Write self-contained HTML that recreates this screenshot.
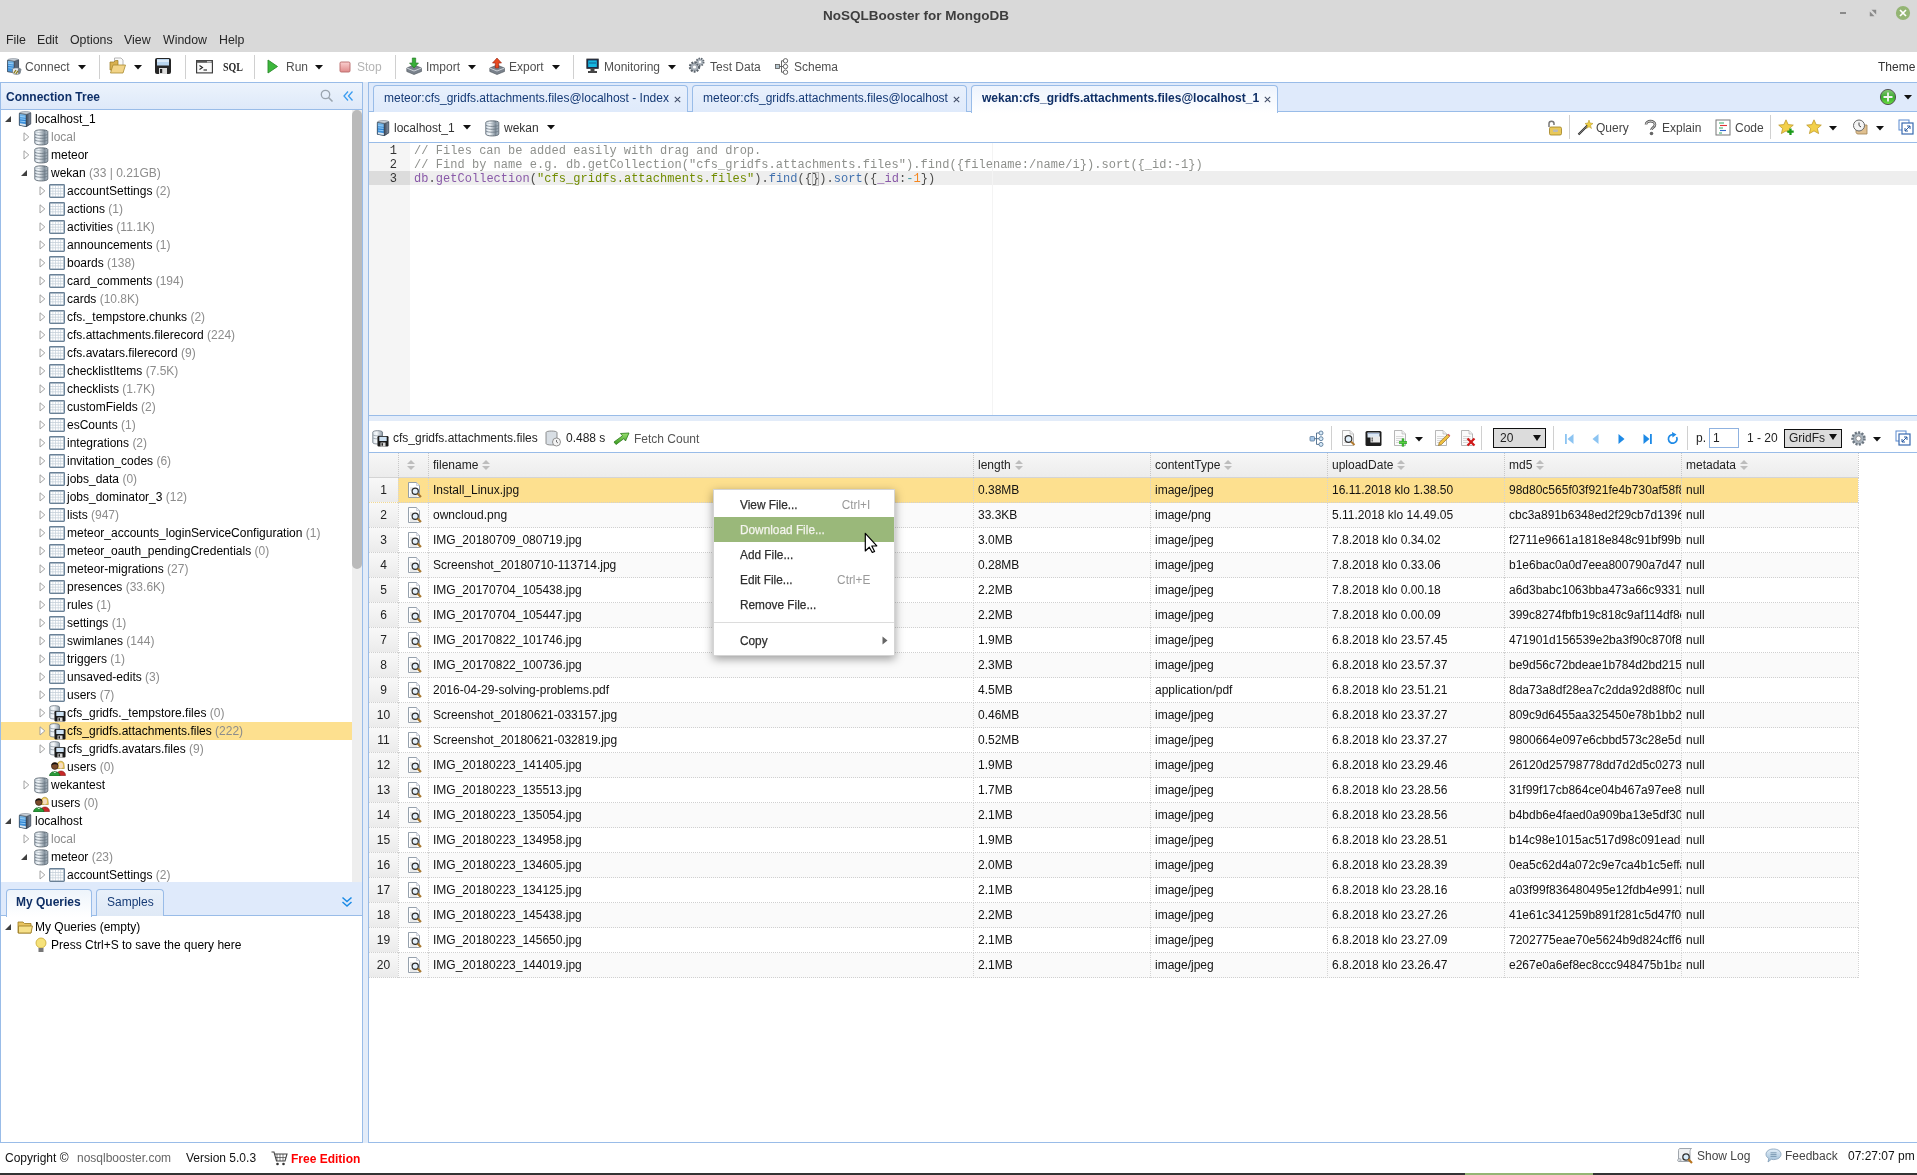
<!DOCTYPE html><html><head><meta charset="utf-8"><style>
*{box-sizing:border-box}
html,body{margin:0;padding:0}
body{width:1917px;height:1175px;overflow:hidden;position:relative;background:#fff;font-family:"Liberation Sans", sans-serif;font-size:12px;color:#000}
.a{position:absolute}
.t{position:absolute;white-space:nowrap;line-height:1}
.g{color:#8c8c8c}
</style></head><body><div style="position:absolute;left:0;top:0;width:1917px;height:1175px;overflow:hidden;will-change:transform">
<div class="a" style="left:0;top:0;width:1917px;height:52px;background:#d9d9d9"></div>
<div class="t" style="left:823px;top:9px;font-size:13.5px;color:#3e3e3e;font-weight:bold;">NoSQLBooster for MongoDB</div>
<div class="a" style="left:1840px;top:12px;width:6px;height:2px;background:#8a8a8a"></div>
<svg style="position:absolute;left:1869px;top:9px" width="8" height="8" viewBox="0 0 8 8"><path d="M2.5 0.8 H7.2 V5.5 Z M0.8 2.5 V7.2 H5.5 Z" fill="#8a8a8a"/></svg>
<svg style="position:absolute;left:1895px;top:5px" width="16" height="16" viewBox="0 0 16 16"><circle cx="8" cy="8" r="7.1" fill="#94b574"/><path d="M5 5 L11 11 M11 5 L5 11" stroke="#fff" stroke-width="1.7"/></svg>
<div class="t" style="left:6px;top:33px;font-size:13px;color:#262626;font-weight:normal;transform:scaleX(0.95);transform-origin:0 0">File</div>
<div class="t" style="left:37px;top:33px;font-size:13px;color:#262626;font-weight:normal;transform:scaleX(0.95);transform-origin:0 0">Edit</div>
<div class="t" style="left:70px;top:33px;font-size:13px;color:#262626;font-weight:normal;transform:scaleX(0.95);transform-origin:0 0">Options</div>
<div class="t" style="left:124px;top:33px;font-size:13px;color:#262626;font-weight:normal;transform:scaleX(0.95);transform-origin:0 0">View</div>
<div class="t" style="left:163px;top:33px;font-size:13px;color:#262626;font-weight:normal;transform:scaleX(0.95);transform-origin:0 0">Window</div>
<div class="t" style="left:219px;top:33px;font-size:13px;color:#262626;font-weight:normal;transform:scaleX(0.95);transform-origin:0 0">Help</div>
<div class="a" style="left:0;top:52px;width:1917px;height:30px;background:#fff"></div>
<div class="a" style="left:99px;top:55px;width:1px;height:24px;background:#d0d0d0"></div>
<div class="a" style="left:185px;top:55px;width:1px;height:24px;background:#d0d0d0"></div>
<div class="a" style="left:254px;top:55px;width:1px;height:24px;background:#d0d0d0"></div>
<div class="a" style="left:395px;top:55px;width:1px;height:24px;background:#d0d0d0"></div>
<div class="a" style="left:573px;top:55px;width:1px;height:24px;background:#d0d0d0"></div>
<svg style="position:absolute;left:6px;top:58px" width="16" height="17" viewBox="0 0 16 17"><defs><linearGradient id="cnf" x1="0" x2="0" y1="0" y2="1"><stop offset="0" stop-color="#8ec8f0"/><stop offset="0.5" stop-color="#2a7fd0"/><stop offset="1" stop-color="#5aa8e8"/></linearGradient></defs>
<path d="M1.2 2 L8.5 2.8 L12.8 1.5 L12.8 12.5 L8.5 15 L1.2 14 Z" fill="#556070"/>
<path d="M1.5 2.4 L8.3 3.2 L8.3 14.5 L1.5 13.6 Z" fill="url(#cnf)" stroke="#44505e" stroke-width="0.7"/>
<path d="M8.3 3.2 L12.6 1.8 L12.6 12.3 L8.3 14.5 Z" fill="#5a6678" stroke="#3a4450" stroke-width="0.6"/>
<path d="M1.7 1.8 C3 0.3 11 0.2 12.6 1.6 L8.3 3 Z" fill="#c8d0d8" stroke="#6a7480" stroke-width="0.5"/>
<path d="M2.3 5.3 L7.6 5.9 M2.3 7.5 L7.6 8.1 M2.3 9.7 L7.6 10.3" stroke="#a8dcff" stroke-width="0.8"/>
<path d="M6.5 11 C6.5 9.5 14.5 9.5 15 11.5 L14 15.5 C12 17 7.5 16.5 6.5 15 Z" fill="#e4e8ec" stroke="#6a7480" stroke-width="0.7"/>
<path d="M12 10.2 C13.5 10 15 10.5 15 11.5 L14 15.5 C13 16.3 12.5 16 12 15.5 Z" fill="#7a848e"/>
<path d="M7.8 15.2 L10 12 M9.8 16 L12 12.8" stroke="#8a7a10" stroke-width="1.2"/></svg>
<div class="t" style="left:25px;top:61px;font-size:12px;color:#505050;font-weight:normal;">Connect</div>
<svg style="position:absolute;left:78px;top:65px" width="8" height="5" viewBox="0 0 8 5"><path d="M0 0 H8 L4 4.5 Z" fill="#111"/></svg>
<svg style="position:absolute;left:109px;top:57px" width="18" height="18" viewBox="0 0 18 18"><path d="M5.5 1 H12 L14 3 V10 H5.5 Z" fill="#fafafa" stroke="#9a9a9a" stroke-width="0.7"/><path d="M1 5 H5 L6.5 3.5 H9 V13 H1 Z" fill="#d8b050" stroke="#9a7a20" stroke-width="0.7"/><path d="M1.5 16 L4 8 H16.5 L14 16 Z" fill="#f2d488" stroke="#a88a30" stroke-width="0.8"/></svg>
<svg style="position:absolute;left:134px;top:65px" width="8" height="5" viewBox="0 0 8 5"><path d="M0 0 H8 L4 4.5 Z" fill="#111"/></svg>
<svg style="position:absolute;left:154px;top:57px" width="18" height="18" viewBox="0 0 18 18"><rect x="1" y="1" width="16" height="16" rx="2" fill="#262626"/><rect x="3" y="2" width="12" height="6.5" fill="#b8d4ee"/><rect x="3" y="3.5" width="12" height="1" fill="#fff"/><rect x="5" y="11" width="8" height="6" fill="#dcdcdc"/><rect x="6" y="12" width="2.2" height="4" fill="#262626"/></svg>
<svg style="position:absolute;left:196px;top:60px" width="17" height="14" viewBox="0 0 17 14"><rect x="0.6" y="0.6" width="15.8" height="12.3" fill="#fafafa" stroke="#333" stroke-width="1.1"/><rect x="0.6" y="0.6" width="15.8" height="2.2" fill="#555"/><rect x="11" y="1.2" width="4.5" height="1.2" fill="#ddd"/><path d="M3.5 5.5 L6.5 7.5 L3.5 9.5" stroke="#222" stroke-width="1.1" fill="none"/><path d="M7.5 10 H11" stroke="#222" stroke-width="1.1"/></svg>
<div class="t" style="left:223px;top:61px;font-size:12.5px;color:#2a2a2a;font-weight:bold;font-family:Liberation Serif,serif;transform:scaleX(0.8);transform-origin:0 0">SQL</div>
<svg style="position:absolute;left:266px;top:58px" width="13" height="17" viewBox="0 0 13 17"><path d="M2 2 L11.5 8.5 L2 15 Z" fill="#3cb83c" stroke="#2a8a2a" stroke-width="0.9" stroke-linejoin="round"/></svg>
<div class="t" style="left:286px;top:61px;font-size:12px;color:#505050;font-weight:normal;">Run</div>
<svg style="position:absolute;left:315px;top:65px" width="8" height="5" viewBox="0 0 8 5"><path d="M0 0 H8 L4 4.5 Z" fill="#111"/></svg>
<svg style="position:absolute;left:339px;top:61px" width="12" height="12" viewBox="0 0 12 12"><defs><linearGradient id="stg" x1="0" x2="0" y1="0" y2="1"><stop offset="0" stop-color="#fad0d0"/><stop offset="1" stop-color="#e08a8a"/></linearGradient></defs><rect x="1" y="1" width="10" height="10" rx="1.2" fill="url(#stg)" stroke="#b86a6a" stroke-width="0.9"/></svg>
<div class="t" style="left:357px;top:61px;font-size:12px;color:#b4b4b4;font-weight:normal;">Stop</div>
<svg style="position:absolute;left:406px;top:57px" width="16" height="18" viewBox="0 0 16 18"><path d="M0.8 11 L8 8 L15.5 11 L15.5 14.5 L8 17.5 L0.8 14.5 Z" fill="#7a828c" stroke="#4a5058" stroke-width="0.6"/><path d="M0.8 11 L8 14 L15.5 11" stroke="#d8dde2" stroke-width="0.9" fill="none"/><path d="M6.3 1 H9.7 V6 H12.5 L8 11 L3.5 6 H6.3 Z" fill="#38b038" stroke="#1e701e" stroke-width="0.6"/></svg>
<div class="t" style="left:426px;top:61px;font-size:12px;color:#505050;font-weight:normal;">Import</div>
<svg style="position:absolute;left:468px;top:65px" width="8" height="5" viewBox="0 0 8 5"><path d="M0 0 H8 L4 4.5 Z" fill="#111"/></svg>
<svg style="position:absolute;left:489px;top:57px" width="16" height="18" viewBox="0 0 16 18"><path d="M0.8 11 L8 8 L15.5 11 L15.5 14.5 L8 17.5 L0.8 14.5 Z" fill="#7a828c" stroke="#4a5058" stroke-width="0.6"/><path d="M0.8 11 L8 14 L15.5 11" stroke="#d8dde2" stroke-width="0.9" fill="none"/><path d="M6.3 11 H9.7 V6 H12.5 L8 1 L3.5 6 H6.3 Z" fill="#e84a20" stroke="#902010" stroke-width="0.6"/></svg>
<div class="t" style="left:509px;top:61px;font-size:12px;color:#505050;font-weight:normal;">Export</div>
<svg style="position:absolute;left:552px;top:65px" width="8" height="5" viewBox="0 0 8 5"><path d="M0 0 H8 L4 4.5 Z" fill="#111"/></svg>
<svg style="position:absolute;left:586px;top:58px" width="13" height="16" viewBox="0 0 13 16"><rect x="0.8" y="1" width="11.5" height="9.5" fill="#1c2c4c" stroke="#333" stroke-width="0.8"/><rect x="2.2" y="2.4" width="8.6" height="6.6" fill="#18b8e0"/><path d="M3 5 H10" stroke="#0a4a80" stroke-width="0.8"/><path d="M4.5 11 H8.5 V13 H11 V15 H2 V13 H4.5 Z" fill="#444"/></svg>
<div class="t" style="left:604px;top:61px;font-size:12px;color:#505050;font-weight:normal;">Monitoring</div>
<svg style="position:absolute;left:668px;top:65px" width="8" height="5" viewBox="0 0 8 5"><path d="M0 0 H8 L4 4.5 Z" fill="#111"/></svg>
<svg style="position:absolute;left:688px;top:57px" width="17" height="17" viewBox="0 0 17 17"><circle cx="6.5" cy="10" r="4.6" fill="#a8b0b8" stroke="#5a626a" stroke-width="2.2" stroke-dasharray="1.8 1.2"/><circle cx="6.5" cy="10" r="1.6" fill="#fff"/><circle cx="12" cy="5" r="3.6" fill="#b0b8c0" stroke="#626a72" stroke-width="1.8" stroke-dasharray="1.5 1"/><circle cx="12" cy="5" r="1.2" fill="#fff"/></svg>
<div class="t" style="left:710px;top:61px;font-size:12px;color:#505050;font-weight:normal;">Test Data</div>
<svg style="position:absolute;left:775px;top:58px" width="14" height="17" viewBox="0 0 14 17"><rect x="0.5" y="6.5" width="4" height="4" fill="#b8c8d0" stroke="#555" stroke-width="0.8"/><circle cx="10.5" cy="2.8" r="2.2" fill="#fff" stroke="#555" stroke-width="0.9"/><circle cx="10.5" cy="8.5" r="2.2" fill="#fff" stroke="#555" stroke-width="0.9"/><circle cx="10.5" cy="14.2" r="2.2" fill="#fff" stroke="#555" stroke-width="0.9"/><path d="M4.5 8.5 H8.3 M6.5 8.5 V2.8 H8.3 M6.5 8.5 V14.2 H8.3" stroke="#555" fill="none" stroke-width="0.9"/></svg>
<div class="t" style="left:794px;top:61px;font-size:12px;color:#505050;font-weight:normal;">Schema</div>
<div class="t" style="left:1878px;top:61px;font-size:12px;color:#333;font-weight:normal;">Theme</div>
<div class="a" style="left:0;top:82px;width:368px;height:1061px;background:#e3ecf9"></div>
<div class="a" style="left:0;top:82px;width:363px;height:800px;border:1px solid #99bce8;border-bottom:none;background:#fff"></div>
<div class="a" style="left:1px;top:83px;width:361px;height:27px;background:linear-gradient(#ecf3fc,#dee9f9);border-bottom:1px solid #99bce8"></div>
<div class="t" style="left:6px;top:90px;font-size:12px;color:#0d2f68;font-weight:bold;transform:scaleY(1.06);transform-origin:0 0">Connection Tree</div>
<svg style="position:absolute;left:320px;top:89px" width="14" height="14" viewBox="0 0 14 14"><circle cx="5.5" cy="5.5" r="4.2" fill="none" stroke="#9aa4ae" stroke-width="1.3"/><path d="M8.5 8.5 L12.5 12.5" stroke="#9aa4ae" stroke-width="1.6"/></svg>
<svg style="position:absolute;left:342px;top:90px" width="12" height="12" viewBox="0 0 12 12"><path d="M6 1.5 L2 6 L6 10.5 M10.5 1.5 L6.5 6 L10.5 10.5" stroke="#3a9cf0" stroke-width="1.3" fill="none"/></svg>
<div class="a" style="left:352px;top:110px;width:10px;height:772px;background:#eeeeee"></div>
<div class="a" style="left:352px;top:110px;width:10px;height:459px;background:#bababa;border-radius:5px"></div>
<div class="a" style="left:1px;top:110px;width:351px;height:772px;overflow:hidden">
<svg style="position:absolute;left:3px;top:5px" width="8" height="8" viewBox="0 0 8 8"><path d="M1 7 L7 7 L7 1 Z" fill="#404040"/></svg>
<svg style="position:absolute;left:16px;top:1px" width="16" height="17" viewBox="0 0 16 17">
<defs><linearGradient id="svf" x1="0" x2="0" y1="0" y2="1"><stop offset="0" stop-color="#8ec8f0"/><stop offset="0.5" stop-color="#2a7fd0"/><stop offset="1" stop-color="#5aa8e8"/></linearGradient>
<linearGradient id="svs" x1="0" x2="1"><stop offset="0" stop-color="#3c4858"/><stop offset="1" stop-color="#8a96a8"/></linearGradient></defs>
<path d="M2 2 L9.5 3 L14 1.5 L14 13 L9.5 16 L2 14.5 Z" fill="#556070"/>
<path d="M2.3 2.5 L9.3 3.4 L9.3 15.5 L2.3 14.2 Z" fill="url(#svf)" stroke="#44505e" stroke-width="0.7"/>
<path d="M9.3 3.4 L13.8 1.8 L13.8 12.8 L9.3 15.5 Z" fill="url(#svs)" stroke="#3a4450" stroke-width="0.6"/>
<path d="M2.5 1.8 C4 0.2 12 0 13.8 1.6 L9.3 3.2 Z" fill="#c8d0d8" stroke="#6a7480" stroke-width="0.5"/>
<path d="M3.2 5.5 L8.5 6.1 M3.2 7.8 L8.5 8.4 M3.2 10.1 L8.5 10.7" stroke="#a8dcff" stroke-width="0.8"/>
<path d="M3 12.2 L8.8 13.2 L8.8 15 L3 14 Z" fill="#dfe6ec"/></svg>
<div class="t" style="left:34px;top:3px;font-size:12px;color:#000;font-weight:normal;">localhost_1</div>
<svg style="position:absolute;left:22px;top:22px" width="8" height="10" viewBox="0 0 8 10"><path d="M1 0.8 L5.8 4.9 L1 9 Z" fill="#fff" stroke="#999" stroke-width="0.9"/></svg>
<svg style="position:absolute;left:33px;top:19px" width="15" height="17" viewBox="0 0 15 17">
<defs><linearGradient id="dbg" x1="0" x2="1"><stop offset="0" stop-color="#d8e2ea"/><stop offset="0.3" stop-color="#f4f8fb"/><stop offset="0.75" stop-color="#7c8a96"/><stop offset="1" stop-color="#b8c4ce"/></linearGradient></defs>
<path d="M0.8 2.5 C0.8 0.3 13.8 0.3 13.8 2.5 V14 C13.8 16.6 0.8 16.6 0.8 14 Z" fill="url(#dbg)" stroke="#5f6a74" stroke-width="0.9"/>
<path d="M1 5.3 C3 6.8 11.5 6.8 13.6 5.3 M1 8.2 C3 9.7 11.5 9.7 13.6 8.2 M1 11.1 C3 12.6 11.5 12.6 13.6 11.1" stroke="#6a7682" stroke-width="0.8" fill="none"/>
<path d="M1.5 2.5 C3 4 11.5 4 13.2 2.5" stroke="#9aa6b0" stroke-width="0.6" fill="none"/></svg>
<div class="t" style="left:50px;top:21px;font-size:12px;color:#000;font-weight:normal;"><span class="g">local</span></div>
<svg style="position:absolute;left:22px;top:40px" width="8" height="10" viewBox="0 0 8 10"><path d="M1 0.8 L5.8 4.9 L1 9 Z" fill="#fff" stroke="#999" stroke-width="0.9"/></svg>
<svg style="position:absolute;left:33px;top:37px" width="15" height="17" viewBox="0 0 15 17">
<defs><linearGradient id="dbg" x1="0" x2="1"><stop offset="0" stop-color="#d8e2ea"/><stop offset="0.3" stop-color="#f4f8fb"/><stop offset="0.75" stop-color="#7c8a96"/><stop offset="1" stop-color="#b8c4ce"/></linearGradient></defs>
<path d="M0.8 2.5 C0.8 0.3 13.8 0.3 13.8 2.5 V14 C13.8 16.6 0.8 16.6 0.8 14 Z" fill="url(#dbg)" stroke="#5f6a74" stroke-width="0.9"/>
<path d="M1 5.3 C3 6.8 11.5 6.8 13.6 5.3 M1 8.2 C3 9.7 11.5 9.7 13.6 8.2 M1 11.1 C3 12.6 11.5 12.6 13.6 11.1" stroke="#6a7682" stroke-width="0.8" fill="none"/>
<path d="M1.5 2.5 C3 4 11.5 4 13.2 2.5" stroke="#9aa6b0" stroke-width="0.6" fill="none"/></svg>
<div class="t" style="left:50px;top:39px;font-size:12px;color:#000;font-weight:normal;">meteor</div>
<svg style="position:absolute;left:19px;top:59px" width="8" height="8" viewBox="0 0 8 8"><path d="M1 7 L7 7 L7 1 Z" fill="#404040"/></svg>
<svg style="position:absolute;left:33px;top:55px" width="15" height="17" viewBox="0 0 15 17">
<defs><linearGradient id="dbg" x1="0" x2="1"><stop offset="0" stop-color="#d8e2ea"/><stop offset="0.3" stop-color="#f4f8fb"/><stop offset="0.75" stop-color="#7c8a96"/><stop offset="1" stop-color="#b8c4ce"/></linearGradient></defs>
<path d="M0.8 2.5 C0.8 0.3 13.8 0.3 13.8 2.5 V14 C13.8 16.6 0.8 16.6 0.8 14 Z" fill="url(#dbg)" stroke="#5f6a74" stroke-width="0.9"/>
<path d="M1 5.3 C3 6.8 11.5 6.8 13.6 5.3 M1 8.2 C3 9.7 11.5 9.7 13.6 8.2 M1 11.1 C3 12.6 11.5 12.6 13.6 11.1" stroke="#6a7682" stroke-width="0.8" fill="none"/>
<path d="M1.5 2.5 C3 4 11.5 4 13.2 2.5" stroke="#9aa6b0" stroke-width="0.6" fill="none"/></svg>
<div class="t" style="left:50px;top:57px;font-size:12px;color:#000;font-weight:normal;">wekan <span class="g">(33 | 0.21GB)</span></div>
<svg style="position:absolute;left:38px;top:76px" width="8" height="10" viewBox="0 0 8 10"><path d="M1 0.8 L5.8 4.9 L1 9 Z" fill="#fff" stroke="#999" stroke-width="0.9"/></svg>
<svg style="position:absolute;left:48px;top:74px" width="16" height="14" viewBox="0 0 16 14"><rect x="0.6" y="0.6" width="14.8" height="12.8" rx="0.8" fill="#c2ced8" stroke="#6a8196" stroke-width="1.2"/><rect x="1.60" y="2.00" width="2.0" height="2.0" fill="#fff"/><rect x="1.60" y="4.75" width="2.0" height="2.0" fill="#fff"/><rect x="1.60" y="7.50" width="2.0" height="2.0" fill="#fff"/><rect x="1.60" y="10.25" width="2.0" height="2.0" fill="#fff"/><rect x="4.22" y="2.00" width="2.0" height="2.0" fill="#fff"/><rect x="4.22" y="4.75" width="2.0" height="2.0" fill="#fff"/><rect x="4.22" y="7.50" width="2.0" height="2.0" fill="#fff"/><rect x="4.22" y="10.25" width="2.0" height="2.0" fill="#fff"/><rect x="6.84" y="2.00" width="2.0" height="2.0" fill="#fff"/><rect x="6.84" y="4.75" width="2.0" height="2.0" fill="#fff"/><rect x="6.84" y="7.50" width="2.0" height="2.0" fill="#fff"/><rect x="6.84" y="10.25" width="2.0" height="2.0" fill="#fff"/><rect x="9.46" y="2.00" width="2.0" height="2.0" fill="#fff"/><rect x="9.46" y="4.75" width="2.0" height="2.0" fill="#fff"/><rect x="9.46" y="7.50" width="2.0" height="2.0" fill="#fff"/><rect x="9.46" y="10.25" width="2.0" height="2.0" fill="#fff"/><rect x="12.08" y="2.00" width="2.0" height="2.0" fill="#fff"/><rect x="12.08" y="4.75" width="2.0" height="2.0" fill="#fff"/><rect x="12.08" y="7.50" width="2.0" height="2.0" fill="#fff"/><rect x="12.08" y="10.25" width="2.0" height="2.0" fill="#fff"/></svg>
<div class="t" style="left:66px;top:75px;font-size:12px;color:#000;font-weight:normal;">accountSettings <span class="g">(2)</span></div>
<svg style="position:absolute;left:38px;top:94px" width="8" height="10" viewBox="0 0 8 10"><path d="M1 0.8 L5.8 4.9 L1 9 Z" fill="#fff" stroke="#999" stroke-width="0.9"/></svg>
<svg style="position:absolute;left:48px;top:92px" width="16" height="14" viewBox="0 0 16 14"><rect x="0.6" y="0.6" width="14.8" height="12.8" rx="0.8" fill="#c2ced8" stroke="#6a8196" stroke-width="1.2"/><rect x="1.60" y="2.00" width="2.0" height="2.0" fill="#fff"/><rect x="1.60" y="4.75" width="2.0" height="2.0" fill="#fff"/><rect x="1.60" y="7.50" width="2.0" height="2.0" fill="#fff"/><rect x="1.60" y="10.25" width="2.0" height="2.0" fill="#fff"/><rect x="4.22" y="2.00" width="2.0" height="2.0" fill="#fff"/><rect x="4.22" y="4.75" width="2.0" height="2.0" fill="#fff"/><rect x="4.22" y="7.50" width="2.0" height="2.0" fill="#fff"/><rect x="4.22" y="10.25" width="2.0" height="2.0" fill="#fff"/><rect x="6.84" y="2.00" width="2.0" height="2.0" fill="#fff"/><rect x="6.84" y="4.75" width="2.0" height="2.0" fill="#fff"/><rect x="6.84" y="7.50" width="2.0" height="2.0" fill="#fff"/><rect x="6.84" y="10.25" width="2.0" height="2.0" fill="#fff"/><rect x="9.46" y="2.00" width="2.0" height="2.0" fill="#fff"/><rect x="9.46" y="4.75" width="2.0" height="2.0" fill="#fff"/><rect x="9.46" y="7.50" width="2.0" height="2.0" fill="#fff"/><rect x="9.46" y="10.25" width="2.0" height="2.0" fill="#fff"/><rect x="12.08" y="2.00" width="2.0" height="2.0" fill="#fff"/><rect x="12.08" y="4.75" width="2.0" height="2.0" fill="#fff"/><rect x="12.08" y="7.50" width="2.0" height="2.0" fill="#fff"/><rect x="12.08" y="10.25" width="2.0" height="2.0" fill="#fff"/></svg>
<div class="t" style="left:66px;top:93px;font-size:12px;color:#000;font-weight:normal;">actions <span class="g">(1)</span></div>
<svg style="position:absolute;left:38px;top:112px" width="8" height="10" viewBox="0 0 8 10"><path d="M1 0.8 L5.8 4.9 L1 9 Z" fill="#fff" stroke="#999" stroke-width="0.9"/></svg>
<svg style="position:absolute;left:48px;top:110px" width="16" height="14" viewBox="0 0 16 14"><rect x="0.6" y="0.6" width="14.8" height="12.8" rx="0.8" fill="#c2ced8" stroke="#6a8196" stroke-width="1.2"/><rect x="1.60" y="2.00" width="2.0" height="2.0" fill="#fff"/><rect x="1.60" y="4.75" width="2.0" height="2.0" fill="#fff"/><rect x="1.60" y="7.50" width="2.0" height="2.0" fill="#fff"/><rect x="1.60" y="10.25" width="2.0" height="2.0" fill="#fff"/><rect x="4.22" y="2.00" width="2.0" height="2.0" fill="#fff"/><rect x="4.22" y="4.75" width="2.0" height="2.0" fill="#fff"/><rect x="4.22" y="7.50" width="2.0" height="2.0" fill="#fff"/><rect x="4.22" y="10.25" width="2.0" height="2.0" fill="#fff"/><rect x="6.84" y="2.00" width="2.0" height="2.0" fill="#fff"/><rect x="6.84" y="4.75" width="2.0" height="2.0" fill="#fff"/><rect x="6.84" y="7.50" width="2.0" height="2.0" fill="#fff"/><rect x="6.84" y="10.25" width="2.0" height="2.0" fill="#fff"/><rect x="9.46" y="2.00" width="2.0" height="2.0" fill="#fff"/><rect x="9.46" y="4.75" width="2.0" height="2.0" fill="#fff"/><rect x="9.46" y="7.50" width="2.0" height="2.0" fill="#fff"/><rect x="9.46" y="10.25" width="2.0" height="2.0" fill="#fff"/><rect x="12.08" y="2.00" width="2.0" height="2.0" fill="#fff"/><rect x="12.08" y="4.75" width="2.0" height="2.0" fill="#fff"/><rect x="12.08" y="7.50" width="2.0" height="2.0" fill="#fff"/><rect x="12.08" y="10.25" width="2.0" height="2.0" fill="#fff"/></svg>
<div class="t" style="left:66px;top:111px;font-size:12px;color:#000;font-weight:normal;">activities <span class="g">(11.1K)</span></div>
<svg style="position:absolute;left:38px;top:130px" width="8" height="10" viewBox="0 0 8 10"><path d="M1 0.8 L5.8 4.9 L1 9 Z" fill="#fff" stroke="#999" stroke-width="0.9"/></svg>
<svg style="position:absolute;left:48px;top:128px" width="16" height="14" viewBox="0 0 16 14"><rect x="0.6" y="0.6" width="14.8" height="12.8" rx="0.8" fill="#c2ced8" stroke="#6a8196" stroke-width="1.2"/><rect x="1.60" y="2.00" width="2.0" height="2.0" fill="#fff"/><rect x="1.60" y="4.75" width="2.0" height="2.0" fill="#fff"/><rect x="1.60" y="7.50" width="2.0" height="2.0" fill="#fff"/><rect x="1.60" y="10.25" width="2.0" height="2.0" fill="#fff"/><rect x="4.22" y="2.00" width="2.0" height="2.0" fill="#fff"/><rect x="4.22" y="4.75" width="2.0" height="2.0" fill="#fff"/><rect x="4.22" y="7.50" width="2.0" height="2.0" fill="#fff"/><rect x="4.22" y="10.25" width="2.0" height="2.0" fill="#fff"/><rect x="6.84" y="2.00" width="2.0" height="2.0" fill="#fff"/><rect x="6.84" y="4.75" width="2.0" height="2.0" fill="#fff"/><rect x="6.84" y="7.50" width="2.0" height="2.0" fill="#fff"/><rect x="6.84" y="10.25" width="2.0" height="2.0" fill="#fff"/><rect x="9.46" y="2.00" width="2.0" height="2.0" fill="#fff"/><rect x="9.46" y="4.75" width="2.0" height="2.0" fill="#fff"/><rect x="9.46" y="7.50" width="2.0" height="2.0" fill="#fff"/><rect x="9.46" y="10.25" width="2.0" height="2.0" fill="#fff"/><rect x="12.08" y="2.00" width="2.0" height="2.0" fill="#fff"/><rect x="12.08" y="4.75" width="2.0" height="2.0" fill="#fff"/><rect x="12.08" y="7.50" width="2.0" height="2.0" fill="#fff"/><rect x="12.08" y="10.25" width="2.0" height="2.0" fill="#fff"/></svg>
<div class="t" style="left:66px;top:129px;font-size:12px;color:#000;font-weight:normal;">announcements <span class="g">(1)</span></div>
<svg style="position:absolute;left:38px;top:148px" width="8" height="10" viewBox="0 0 8 10"><path d="M1 0.8 L5.8 4.9 L1 9 Z" fill="#fff" stroke="#999" stroke-width="0.9"/></svg>
<svg style="position:absolute;left:48px;top:146px" width="16" height="14" viewBox="0 0 16 14"><rect x="0.6" y="0.6" width="14.8" height="12.8" rx="0.8" fill="#c2ced8" stroke="#6a8196" stroke-width="1.2"/><rect x="1.60" y="2.00" width="2.0" height="2.0" fill="#fff"/><rect x="1.60" y="4.75" width="2.0" height="2.0" fill="#fff"/><rect x="1.60" y="7.50" width="2.0" height="2.0" fill="#fff"/><rect x="1.60" y="10.25" width="2.0" height="2.0" fill="#fff"/><rect x="4.22" y="2.00" width="2.0" height="2.0" fill="#fff"/><rect x="4.22" y="4.75" width="2.0" height="2.0" fill="#fff"/><rect x="4.22" y="7.50" width="2.0" height="2.0" fill="#fff"/><rect x="4.22" y="10.25" width="2.0" height="2.0" fill="#fff"/><rect x="6.84" y="2.00" width="2.0" height="2.0" fill="#fff"/><rect x="6.84" y="4.75" width="2.0" height="2.0" fill="#fff"/><rect x="6.84" y="7.50" width="2.0" height="2.0" fill="#fff"/><rect x="6.84" y="10.25" width="2.0" height="2.0" fill="#fff"/><rect x="9.46" y="2.00" width="2.0" height="2.0" fill="#fff"/><rect x="9.46" y="4.75" width="2.0" height="2.0" fill="#fff"/><rect x="9.46" y="7.50" width="2.0" height="2.0" fill="#fff"/><rect x="9.46" y="10.25" width="2.0" height="2.0" fill="#fff"/><rect x="12.08" y="2.00" width="2.0" height="2.0" fill="#fff"/><rect x="12.08" y="4.75" width="2.0" height="2.0" fill="#fff"/><rect x="12.08" y="7.50" width="2.0" height="2.0" fill="#fff"/><rect x="12.08" y="10.25" width="2.0" height="2.0" fill="#fff"/></svg>
<div class="t" style="left:66px;top:147px;font-size:12px;color:#000;font-weight:normal;">boards <span class="g">(138)</span></div>
<svg style="position:absolute;left:38px;top:166px" width="8" height="10" viewBox="0 0 8 10"><path d="M1 0.8 L5.8 4.9 L1 9 Z" fill="#fff" stroke="#999" stroke-width="0.9"/></svg>
<svg style="position:absolute;left:48px;top:164px" width="16" height="14" viewBox="0 0 16 14"><rect x="0.6" y="0.6" width="14.8" height="12.8" rx="0.8" fill="#c2ced8" stroke="#6a8196" stroke-width="1.2"/><rect x="1.60" y="2.00" width="2.0" height="2.0" fill="#fff"/><rect x="1.60" y="4.75" width="2.0" height="2.0" fill="#fff"/><rect x="1.60" y="7.50" width="2.0" height="2.0" fill="#fff"/><rect x="1.60" y="10.25" width="2.0" height="2.0" fill="#fff"/><rect x="4.22" y="2.00" width="2.0" height="2.0" fill="#fff"/><rect x="4.22" y="4.75" width="2.0" height="2.0" fill="#fff"/><rect x="4.22" y="7.50" width="2.0" height="2.0" fill="#fff"/><rect x="4.22" y="10.25" width="2.0" height="2.0" fill="#fff"/><rect x="6.84" y="2.00" width="2.0" height="2.0" fill="#fff"/><rect x="6.84" y="4.75" width="2.0" height="2.0" fill="#fff"/><rect x="6.84" y="7.50" width="2.0" height="2.0" fill="#fff"/><rect x="6.84" y="10.25" width="2.0" height="2.0" fill="#fff"/><rect x="9.46" y="2.00" width="2.0" height="2.0" fill="#fff"/><rect x="9.46" y="4.75" width="2.0" height="2.0" fill="#fff"/><rect x="9.46" y="7.50" width="2.0" height="2.0" fill="#fff"/><rect x="9.46" y="10.25" width="2.0" height="2.0" fill="#fff"/><rect x="12.08" y="2.00" width="2.0" height="2.0" fill="#fff"/><rect x="12.08" y="4.75" width="2.0" height="2.0" fill="#fff"/><rect x="12.08" y="7.50" width="2.0" height="2.0" fill="#fff"/><rect x="12.08" y="10.25" width="2.0" height="2.0" fill="#fff"/></svg>
<div class="t" style="left:66px;top:165px;font-size:12px;color:#000;font-weight:normal;">card_comments <span class="g">(194)</span></div>
<svg style="position:absolute;left:38px;top:184px" width="8" height="10" viewBox="0 0 8 10"><path d="M1 0.8 L5.8 4.9 L1 9 Z" fill="#fff" stroke="#999" stroke-width="0.9"/></svg>
<svg style="position:absolute;left:48px;top:182px" width="16" height="14" viewBox="0 0 16 14"><rect x="0.6" y="0.6" width="14.8" height="12.8" rx="0.8" fill="#c2ced8" stroke="#6a8196" stroke-width="1.2"/><rect x="1.60" y="2.00" width="2.0" height="2.0" fill="#fff"/><rect x="1.60" y="4.75" width="2.0" height="2.0" fill="#fff"/><rect x="1.60" y="7.50" width="2.0" height="2.0" fill="#fff"/><rect x="1.60" y="10.25" width="2.0" height="2.0" fill="#fff"/><rect x="4.22" y="2.00" width="2.0" height="2.0" fill="#fff"/><rect x="4.22" y="4.75" width="2.0" height="2.0" fill="#fff"/><rect x="4.22" y="7.50" width="2.0" height="2.0" fill="#fff"/><rect x="4.22" y="10.25" width="2.0" height="2.0" fill="#fff"/><rect x="6.84" y="2.00" width="2.0" height="2.0" fill="#fff"/><rect x="6.84" y="4.75" width="2.0" height="2.0" fill="#fff"/><rect x="6.84" y="7.50" width="2.0" height="2.0" fill="#fff"/><rect x="6.84" y="10.25" width="2.0" height="2.0" fill="#fff"/><rect x="9.46" y="2.00" width="2.0" height="2.0" fill="#fff"/><rect x="9.46" y="4.75" width="2.0" height="2.0" fill="#fff"/><rect x="9.46" y="7.50" width="2.0" height="2.0" fill="#fff"/><rect x="9.46" y="10.25" width="2.0" height="2.0" fill="#fff"/><rect x="12.08" y="2.00" width="2.0" height="2.0" fill="#fff"/><rect x="12.08" y="4.75" width="2.0" height="2.0" fill="#fff"/><rect x="12.08" y="7.50" width="2.0" height="2.0" fill="#fff"/><rect x="12.08" y="10.25" width="2.0" height="2.0" fill="#fff"/></svg>
<div class="t" style="left:66px;top:183px;font-size:12px;color:#000;font-weight:normal;">cards <span class="g">(10.8K)</span></div>
<svg style="position:absolute;left:38px;top:202px" width="8" height="10" viewBox="0 0 8 10"><path d="M1 0.8 L5.8 4.9 L1 9 Z" fill="#fff" stroke="#999" stroke-width="0.9"/></svg>
<svg style="position:absolute;left:48px;top:200px" width="16" height="14" viewBox="0 0 16 14"><rect x="0.6" y="0.6" width="14.8" height="12.8" rx="0.8" fill="#c2ced8" stroke="#6a8196" stroke-width="1.2"/><rect x="1.60" y="2.00" width="2.0" height="2.0" fill="#fff"/><rect x="1.60" y="4.75" width="2.0" height="2.0" fill="#fff"/><rect x="1.60" y="7.50" width="2.0" height="2.0" fill="#fff"/><rect x="1.60" y="10.25" width="2.0" height="2.0" fill="#fff"/><rect x="4.22" y="2.00" width="2.0" height="2.0" fill="#fff"/><rect x="4.22" y="4.75" width="2.0" height="2.0" fill="#fff"/><rect x="4.22" y="7.50" width="2.0" height="2.0" fill="#fff"/><rect x="4.22" y="10.25" width="2.0" height="2.0" fill="#fff"/><rect x="6.84" y="2.00" width="2.0" height="2.0" fill="#fff"/><rect x="6.84" y="4.75" width="2.0" height="2.0" fill="#fff"/><rect x="6.84" y="7.50" width="2.0" height="2.0" fill="#fff"/><rect x="6.84" y="10.25" width="2.0" height="2.0" fill="#fff"/><rect x="9.46" y="2.00" width="2.0" height="2.0" fill="#fff"/><rect x="9.46" y="4.75" width="2.0" height="2.0" fill="#fff"/><rect x="9.46" y="7.50" width="2.0" height="2.0" fill="#fff"/><rect x="9.46" y="10.25" width="2.0" height="2.0" fill="#fff"/><rect x="12.08" y="2.00" width="2.0" height="2.0" fill="#fff"/><rect x="12.08" y="4.75" width="2.0" height="2.0" fill="#fff"/><rect x="12.08" y="7.50" width="2.0" height="2.0" fill="#fff"/><rect x="12.08" y="10.25" width="2.0" height="2.0" fill="#fff"/></svg>
<div class="t" style="left:66px;top:201px;font-size:12px;color:#000;font-weight:normal;">cfs._tempstore.chunks <span class="g">(2)</span></div>
<svg style="position:absolute;left:38px;top:220px" width="8" height="10" viewBox="0 0 8 10"><path d="M1 0.8 L5.8 4.9 L1 9 Z" fill="#fff" stroke="#999" stroke-width="0.9"/></svg>
<svg style="position:absolute;left:48px;top:218px" width="16" height="14" viewBox="0 0 16 14"><rect x="0.6" y="0.6" width="14.8" height="12.8" rx="0.8" fill="#c2ced8" stroke="#6a8196" stroke-width="1.2"/><rect x="1.60" y="2.00" width="2.0" height="2.0" fill="#fff"/><rect x="1.60" y="4.75" width="2.0" height="2.0" fill="#fff"/><rect x="1.60" y="7.50" width="2.0" height="2.0" fill="#fff"/><rect x="1.60" y="10.25" width="2.0" height="2.0" fill="#fff"/><rect x="4.22" y="2.00" width="2.0" height="2.0" fill="#fff"/><rect x="4.22" y="4.75" width="2.0" height="2.0" fill="#fff"/><rect x="4.22" y="7.50" width="2.0" height="2.0" fill="#fff"/><rect x="4.22" y="10.25" width="2.0" height="2.0" fill="#fff"/><rect x="6.84" y="2.00" width="2.0" height="2.0" fill="#fff"/><rect x="6.84" y="4.75" width="2.0" height="2.0" fill="#fff"/><rect x="6.84" y="7.50" width="2.0" height="2.0" fill="#fff"/><rect x="6.84" y="10.25" width="2.0" height="2.0" fill="#fff"/><rect x="9.46" y="2.00" width="2.0" height="2.0" fill="#fff"/><rect x="9.46" y="4.75" width="2.0" height="2.0" fill="#fff"/><rect x="9.46" y="7.50" width="2.0" height="2.0" fill="#fff"/><rect x="9.46" y="10.25" width="2.0" height="2.0" fill="#fff"/><rect x="12.08" y="2.00" width="2.0" height="2.0" fill="#fff"/><rect x="12.08" y="4.75" width="2.0" height="2.0" fill="#fff"/><rect x="12.08" y="7.50" width="2.0" height="2.0" fill="#fff"/><rect x="12.08" y="10.25" width="2.0" height="2.0" fill="#fff"/></svg>
<div class="t" style="left:66px;top:219px;font-size:12px;color:#000;font-weight:normal;">cfs.attachments.filerecord <span class="g">(224)</span></div>
<svg style="position:absolute;left:38px;top:238px" width="8" height="10" viewBox="0 0 8 10"><path d="M1 0.8 L5.8 4.9 L1 9 Z" fill="#fff" stroke="#999" stroke-width="0.9"/></svg>
<svg style="position:absolute;left:48px;top:236px" width="16" height="14" viewBox="0 0 16 14"><rect x="0.6" y="0.6" width="14.8" height="12.8" rx="0.8" fill="#c2ced8" stroke="#6a8196" stroke-width="1.2"/><rect x="1.60" y="2.00" width="2.0" height="2.0" fill="#fff"/><rect x="1.60" y="4.75" width="2.0" height="2.0" fill="#fff"/><rect x="1.60" y="7.50" width="2.0" height="2.0" fill="#fff"/><rect x="1.60" y="10.25" width="2.0" height="2.0" fill="#fff"/><rect x="4.22" y="2.00" width="2.0" height="2.0" fill="#fff"/><rect x="4.22" y="4.75" width="2.0" height="2.0" fill="#fff"/><rect x="4.22" y="7.50" width="2.0" height="2.0" fill="#fff"/><rect x="4.22" y="10.25" width="2.0" height="2.0" fill="#fff"/><rect x="6.84" y="2.00" width="2.0" height="2.0" fill="#fff"/><rect x="6.84" y="4.75" width="2.0" height="2.0" fill="#fff"/><rect x="6.84" y="7.50" width="2.0" height="2.0" fill="#fff"/><rect x="6.84" y="10.25" width="2.0" height="2.0" fill="#fff"/><rect x="9.46" y="2.00" width="2.0" height="2.0" fill="#fff"/><rect x="9.46" y="4.75" width="2.0" height="2.0" fill="#fff"/><rect x="9.46" y="7.50" width="2.0" height="2.0" fill="#fff"/><rect x="9.46" y="10.25" width="2.0" height="2.0" fill="#fff"/><rect x="12.08" y="2.00" width="2.0" height="2.0" fill="#fff"/><rect x="12.08" y="4.75" width="2.0" height="2.0" fill="#fff"/><rect x="12.08" y="7.50" width="2.0" height="2.0" fill="#fff"/><rect x="12.08" y="10.25" width="2.0" height="2.0" fill="#fff"/></svg>
<div class="t" style="left:66px;top:237px;font-size:12px;color:#000;font-weight:normal;">cfs.avatars.filerecord <span class="g">(9)</span></div>
<svg style="position:absolute;left:38px;top:256px" width="8" height="10" viewBox="0 0 8 10"><path d="M1 0.8 L5.8 4.9 L1 9 Z" fill="#fff" stroke="#999" stroke-width="0.9"/></svg>
<svg style="position:absolute;left:48px;top:254px" width="16" height="14" viewBox="0 0 16 14"><rect x="0.6" y="0.6" width="14.8" height="12.8" rx="0.8" fill="#c2ced8" stroke="#6a8196" stroke-width="1.2"/><rect x="1.60" y="2.00" width="2.0" height="2.0" fill="#fff"/><rect x="1.60" y="4.75" width="2.0" height="2.0" fill="#fff"/><rect x="1.60" y="7.50" width="2.0" height="2.0" fill="#fff"/><rect x="1.60" y="10.25" width="2.0" height="2.0" fill="#fff"/><rect x="4.22" y="2.00" width="2.0" height="2.0" fill="#fff"/><rect x="4.22" y="4.75" width="2.0" height="2.0" fill="#fff"/><rect x="4.22" y="7.50" width="2.0" height="2.0" fill="#fff"/><rect x="4.22" y="10.25" width="2.0" height="2.0" fill="#fff"/><rect x="6.84" y="2.00" width="2.0" height="2.0" fill="#fff"/><rect x="6.84" y="4.75" width="2.0" height="2.0" fill="#fff"/><rect x="6.84" y="7.50" width="2.0" height="2.0" fill="#fff"/><rect x="6.84" y="10.25" width="2.0" height="2.0" fill="#fff"/><rect x="9.46" y="2.00" width="2.0" height="2.0" fill="#fff"/><rect x="9.46" y="4.75" width="2.0" height="2.0" fill="#fff"/><rect x="9.46" y="7.50" width="2.0" height="2.0" fill="#fff"/><rect x="9.46" y="10.25" width="2.0" height="2.0" fill="#fff"/><rect x="12.08" y="2.00" width="2.0" height="2.0" fill="#fff"/><rect x="12.08" y="4.75" width="2.0" height="2.0" fill="#fff"/><rect x="12.08" y="7.50" width="2.0" height="2.0" fill="#fff"/><rect x="12.08" y="10.25" width="2.0" height="2.0" fill="#fff"/></svg>
<div class="t" style="left:66px;top:255px;font-size:12px;color:#000;font-weight:normal;">checklistItems <span class="g">(7.5K)</span></div>
<svg style="position:absolute;left:38px;top:274px" width="8" height="10" viewBox="0 0 8 10"><path d="M1 0.8 L5.8 4.9 L1 9 Z" fill="#fff" stroke="#999" stroke-width="0.9"/></svg>
<svg style="position:absolute;left:48px;top:272px" width="16" height="14" viewBox="0 0 16 14"><rect x="0.6" y="0.6" width="14.8" height="12.8" rx="0.8" fill="#c2ced8" stroke="#6a8196" stroke-width="1.2"/><rect x="1.60" y="2.00" width="2.0" height="2.0" fill="#fff"/><rect x="1.60" y="4.75" width="2.0" height="2.0" fill="#fff"/><rect x="1.60" y="7.50" width="2.0" height="2.0" fill="#fff"/><rect x="1.60" y="10.25" width="2.0" height="2.0" fill="#fff"/><rect x="4.22" y="2.00" width="2.0" height="2.0" fill="#fff"/><rect x="4.22" y="4.75" width="2.0" height="2.0" fill="#fff"/><rect x="4.22" y="7.50" width="2.0" height="2.0" fill="#fff"/><rect x="4.22" y="10.25" width="2.0" height="2.0" fill="#fff"/><rect x="6.84" y="2.00" width="2.0" height="2.0" fill="#fff"/><rect x="6.84" y="4.75" width="2.0" height="2.0" fill="#fff"/><rect x="6.84" y="7.50" width="2.0" height="2.0" fill="#fff"/><rect x="6.84" y="10.25" width="2.0" height="2.0" fill="#fff"/><rect x="9.46" y="2.00" width="2.0" height="2.0" fill="#fff"/><rect x="9.46" y="4.75" width="2.0" height="2.0" fill="#fff"/><rect x="9.46" y="7.50" width="2.0" height="2.0" fill="#fff"/><rect x="9.46" y="10.25" width="2.0" height="2.0" fill="#fff"/><rect x="12.08" y="2.00" width="2.0" height="2.0" fill="#fff"/><rect x="12.08" y="4.75" width="2.0" height="2.0" fill="#fff"/><rect x="12.08" y="7.50" width="2.0" height="2.0" fill="#fff"/><rect x="12.08" y="10.25" width="2.0" height="2.0" fill="#fff"/></svg>
<div class="t" style="left:66px;top:273px;font-size:12px;color:#000;font-weight:normal;">checklists <span class="g">(1.7K)</span></div>
<svg style="position:absolute;left:38px;top:292px" width="8" height="10" viewBox="0 0 8 10"><path d="M1 0.8 L5.8 4.9 L1 9 Z" fill="#fff" stroke="#999" stroke-width="0.9"/></svg>
<svg style="position:absolute;left:48px;top:290px" width="16" height="14" viewBox="0 0 16 14"><rect x="0.6" y="0.6" width="14.8" height="12.8" rx="0.8" fill="#c2ced8" stroke="#6a8196" stroke-width="1.2"/><rect x="1.60" y="2.00" width="2.0" height="2.0" fill="#fff"/><rect x="1.60" y="4.75" width="2.0" height="2.0" fill="#fff"/><rect x="1.60" y="7.50" width="2.0" height="2.0" fill="#fff"/><rect x="1.60" y="10.25" width="2.0" height="2.0" fill="#fff"/><rect x="4.22" y="2.00" width="2.0" height="2.0" fill="#fff"/><rect x="4.22" y="4.75" width="2.0" height="2.0" fill="#fff"/><rect x="4.22" y="7.50" width="2.0" height="2.0" fill="#fff"/><rect x="4.22" y="10.25" width="2.0" height="2.0" fill="#fff"/><rect x="6.84" y="2.00" width="2.0" height="2.0" fill="#fff"/><rect x="6.84" y="4.75" width="2.0" height="2.0" fill="#fff"/><rect x="6.84" y="7.50" width="2.0" height="2.0" fill="#fff"/><rect x="6.84" y="10.25" width="2.0" height="2.0" fill="#fff"/><rect x="9.46" y="2.00" width="2.0" height="2.0" fill="#fff"/><rect x="9.46" y="4.75" width="2.0" height="2.0" fill="#fff"/><rect x="9.46" y="7.50" width="2.0" height="2.0" fill="#fff"/><rect x="9.46" y="10.25" width="2.0" height="2.0" fill="#fff"/><rect x="12.08" y="2.00" width="2.0" height="2.0" fill="#fff"/><rect x="12.08" y="4.75" width="2.0" height="2.0" fill="#fff"/><rect x="12.08" y="7.50" width="2.0" height="2.0" fill="#fff"/><rect x="12.08" y="10.25" width="2.0" height="2.0" fill="#fff"/></svg>
<div class="t" style="left:66px;top:291px;font-size:12px;color:#000;font-weight:normal;">customFields <span class="g">(2)</span></div>
<svg style="position:absolute;left:38px;top:310px" width="8" height="10" viewBox="0 0 8 10"><path d="M1 0.8 L5.8 4.9 L1 9 Z" fill="#fff" stroke="#999" stroke-width="0.9"/></svg>
<svg style="position:absolute;left:48px;top:308px" width="16" height="14" viewBox="0 0 16 14"><rect x="0.6" y="0.6" width="14.8" height="12.8" rx="0.8" fill="#c2ced8" stroke="#6a8196" stroke-width="1.2"/><rect x="1.60" y="2.00" width="2.0" height="2.0" fill="#fff"/><rect x="1.60" y="4.75" width="2.0" height="2.0" fill="#fff"/><rect x="1.60" y="7.50" width="2.0" height="2.0" fill="#fff"/><rect x="1.60" y="10.25" width="2.0" height="2.0" fill="#fff"/><rect x="4.22" y="2.00" width="2.0" height="2.0" fill="#fff"/><rect x="4.22" y="4.75" width="2.0" height="2.0" fill="#fff"/><rect x="4.22" y="7.50" width="2.0" height="2.0" fill="#fff"/><rect x="4.22" y="10.25" width="2.0" height="2.0" fill="#fff"/><rect x="6.84" y="2.00" width="2.0" height="2.0" fill="#fff"/><rect x="6.84" y="4.75" width="2.0" height="2.0" fill="#fff"/><rect x="6.84" y="7.50" width="2.0" height="2.0" fill="#fff"/><rect x="6.84" y="10.25" width="2.0" height="2.0" fill="#fff"/><rect x="9.46" y="2.00" width="2.0" height="2.0" fill="#fff"/><rect x="9.46" y="4.75" width="2.0" height="2.0" fill="#fff"/><rect x="9.46" y="7.50" width="2.0" height="2.0" fill="#fff"/><rect x="9.46" y="10.25" width="2.0" height="2.0" fill="#fff"/><rect x="12.08" y="2.00" width="2.0" height="2.0" fill="#fff"/><rect x="12.08" y="4.75" width="2.0" height="2.0" fill="#fff"/><rect x="12.08" y="7.50" width="2.0" height="2.0" fill="#fff"/><rect x="12.08" y="10.25" width="2.0" height="2.0" fill="#fff"/></svg>
<div class="t" style="left:66px;top:309px;font-size:12px;color:#000;font-weight:normal;">esCounts <span class="g">(1)</span></div>
<svg style="position:absolute;left:38px;top:328px" width="8" height="10" viewBox="0 0 8 10"><path d="M1 0.8 L5.8 4.9 L1 9 Z" fill="#fff" stroke="#999" stroke-width="0.9"/></svg>
<svg style="position:absolute;left:48px;top:326px" width="16" height="14" viewBox="0 0 16 14"><rect x="0.6" y="0.6" width="14.8" height="12.8" rx="0.8" fill="#c2ced8" stroke="#6a8196" stroke-width="1.2"/><rect x="1.60" y="2.00" width="2.0" height="2.0" fill="#fff"/><rect x="1.60" y="4.75" width="2.0" height="2.0" fill="#fff"/><rect x="1.60" y="7.50" width="2.0" height="2.0" fill="#fff"/><rect x="1.60" y="10.25" width="2.0" height="2.0" fill="#fff"/><rect x="4.22" y="2.00" width="2.0" height="2.0" fill="#fff"/><rect x="4.22" y="4.75" width="2.0" height="2.0" fill="#fff"/><rect x="4.22" y="7.50" width="2.0" height="2.0" fill="#fff"/><rect x="4.22" y="10.25" width="2.0" height="2.0" fill="#fff"/><rect x="6.84" y="2.00" width="2.0" height="2.0" fill="#fff"/><rect x="6.84" y="4.75" width="2.0" height="2.0" fill="#fff"/><rect x="6.84" y="7.50" width="2.0" height="2.0" fill="#fff"/><rect x="6.84" y="10.25" width="2.0" height="2.0" fill="#fff"/><rect x="9.46" y="2.00" width="2.0" height="2.0" fill="#fff"/><rect x="9.46" y="4.75" width="2.0" height="2.0" fill="#fff"/><rect x="9.46" y="7.50" width="2.0" height="2.0" fill="#fff"/><rect x="9.46" y="10.25" width="2.0" height="2.0" fill="#fff"/><rect x="12.08" y="2.00" width="2.0" height="2.0" fill="#fff"/><rect x="12.08" y="4.75" width="2.0" height="2.0" fill="#fff"/><rect x="12.08" y="7.50" width="2.0" height="2.0" fill="#fff"/><rect x="12.08" y="10.25" width="2.0" height="2.0" fill="#fff"/></svg>
<div class="t" style="left:66px;top:327px;font-size:12px;color:#000;font-weight:normal;">integrations <span class="g">(2)</span></div>
<svg style="position:absolute;left:38px;top:346px" width="8" height="10" viewBox="0 0 8 10"><path d="M1 0.8 L5.8 4.9 L1 9 Z" fill="#fff" stroke="#999" stroke-width="0.9"/></svg>
<svg style="position:absolute;left:48px;top:344px" width="16" height="14" viewBox="0 0 16 14"><rect x="0.6" y="0.6" width="14.8" height="12.8" rx="0.8" fill="#c2ced8" stroke="#6a8196" stroke-width="1.2"/><rect x="1.60" y="2.00" width="2.0" height="2.0" fill="#fff"/><rect x="1.60" y="4.75" width="2.0" height="2.0" fill="#fff"/><rect x="1.60" y="7.50" width="2.0" height="2.0" fill="#fff"/><rect x="1.60" y="10.25" width="2.0" height="2.0" fill="#fff"/><rect x="4.22" y="2.00" width="2.0" height="2.0" fill="#fff"/><rect x="4.22" y="4.75" width="2.0" height="2.0" fill="#fff"/><rect x="4.22" y="7.50" width="2.0" height="2.0" fill="#fff"/><rect x="4.22" y="10.25" width="2.0" height="2.0" fill="#fff"/><rect x="6.84" y="2.00" width="2.0" height="2.0" fill="#fff"/><rect x="6.84" y="4.75" width="2.0" height="2.0" fill="#fff"/><rect x="6.84" y="7.50" width="2.0" height="2.0" fill="#fff"/><rect x="6.84" y="10.25" width="2.0" height="2.0" fill="#fff"/><rect x="9.46" y="2.00" width="2.0" height="2.0" fill="#fff"/><rect x="9.46" y="4.75" width="2.0" height="2.0" fill="#fff"/><rect x="9.46" y="7.50" width="2.0" height="2.0" fill="#fff"/><rect x="9.46" y="10.25" width="2.0" height="2.0" fill="#fff"/><rect x="12.08" y="2.00" width="2.0" height="2.0" fill="#fff"/><rect x="12.08" y="4.75" width="2.0" height="2.0" fill="#fff"/><rect x="12.08" y="7.50" width="2.0" height="2.0" fill="#fff"/><rect x="12.08" y="10.25" width="2.0" height="2.0" fill="#fff"/></svg>
<div class="t" style="left:66px;top:345px;font-size:12px;color:#000;font-weight:normal;">invitation_codes <span class="g">(6)</span></div>
<svg style="position:absolute;left:38px;top:364px" width="8" height="10" viewBox="0 0 8 10"><path d="M1 0.8 L5.8 4.9 L1 9 Z" fill="#fff" stroke="#999" stroke-width="0.9"/></svg>
<svg style="position:absolute;left:48px;top:362px" width="16" height="14" viewBox="0 0 16 14"><rect x="0.6" y="0.6" width="14.8" height="12.8" rx="0.8" fill="#c2ced8" stroke="#6a8196" stroke-width="1.2"/><rect x="1.60" y="2.00" width="2.0" height="2.0" fill="#fff"/><rect x="1.60" y="4.75" width="2.0" height="2.0" fill="#fff"/><rect x="1.60" y="7.50" width="2.0" height="2.0" fill="#fff"/><rect x="1.60" y="10.25" width="2.0" height="2.0" fill="#fff"/><rect x="4.22" y="2.00" width="2.0" height="2.0" fill="#fff"/><rect x="4.22" y="4.75" width="2.0" height="2.0" fill="#fff"/><rect x="4.22" y="7.50" width="2.0" height="2.0" fill="#fff"/><rect x="4.22" y="10.25" width="2.0" height="2.0" fill="#fff"/><rect x="6.84" y="2.00" width="2.0" height="2.0" fill="#fff"/><rect x="6.84" y="4.75" width="2.0" height="2.0" fill="#fff"/><rect x="6.84" y="7.50" width="2.0" height="2.0" fill="#fff"/><rect x="6.84" y="10.25" width="2.0" height="2.0" fill="#fff"/><rect x="9.46" y="2.00" width="2.0" height="2.0" fill="#fff"/><rect x="9.46" y="4.75" width="2.0" height="2.0" fill="#fff"/><rect x="9.46" y="7.50" width="2.0" height="2.0" fill="#fff"/><rect x="9.46" y="10.25" width="2.0" height="2.0" fill="#fff"/><rect x="12.08" y="2.00" width="2.0" height="2.0" fill="#fff"/><rect x="12.08" y="4.75" width="2.0" height="2.0" fill="#fff"/><rect x="12.08" y="7.50" width="2.0" height="2.0" fill="#fff"/><rect x="12.08" y="10.25" width="2.0" height="2.0" fill="#fff"/></svg>
<div class="t" style="left:66px;top:363px;font-size:12px;color:#000;font-weight:normal;">jobs_data <span class="g">(0)</span></div>
<svg style="position:absolute;left:38px;top:382px" width="8" height="10" viewBox="0 0 8 10"><path d="M1 0.8 L5.8 4.9 L1 9 Z" fill="#fff" stroke="#999" stroke-width="0.9"/></svg>
<svg style="position:absolute;left:48px;top:380px" width="16" height="14" viewBox="0 0 16 14"><rect x="0.6" y="0.6" width="14.8" height="12.8" rx="0.8" fill="#c2ced8" stroke="#6a8196" stroke-width="1.2"/><rect x="1.60" y="2.00" width="2.0" height="2.0" fill="#fff"/><rect x="1.60" y="4.75" width="2.0" height="2.0" fill="#fff"/><rect x="1.60" y="7.50" width="2.0" height="2.0" fill="#fff"/><rect x="1.60" y="10.25" width="2.0" height="2.0" fill="#fff"/><rect x="4.22" y="2.00" width="2.0" height="2.0" fill="#fff"/><rect x="4.22" y="4.75" width="2.0" height="2.0" fill="#fff"/><rect x="4.22" y="7.50" width="2.0" height="2.0" fill="#fff"/><rect x="4.22" y="10.25" width="2.0" height="2.0" fill="#fff"/><rect x="6.84" y="2.00" width="2.0" height="2.0" fill="#fff"/><rect x="6.84" y="4.75" width="2.0" height="2.0" fill="#fff"/><rect x="6.84" y="7.50" width="2.0" height="2.0" fill="#fff"/><rect x="6.84" y="10.25" width="2.0" height="2.0" fill="#fff"/><rect x="9.46" y="2.00" width="2.0" height="2.0" fill="#fff"/><rect x="9.46" y="4.75" width="2.0" height="2.0" fill="#fff"/><rect x="9.46" y="7.50" width="2.0" height="2.0" fill="#fff"/><rect x="9.46" y="10.25" width="2.0" height="2.0" fill="#fff"/><rect x="12.08" y="2.00" width="2.0" height="2.0" fill="#fff"/><rect x="12.08" y="4.75" width="2.0" height="2.0" fill="#fff"/><rect x="12.08" y="7.50" width="2.0" height="2.0" fill="#fff"/><rect x="12.08" y="10.25" width="2.0" height="2.0" fill="#fff"/></svg>
<div class="t" style="left:66px;top:381px;font-size:12px;color:#000;font-weight:normal;">jobs_dominator_3 <span class="g">(12)</span></div>
<svg style="position:absolute;left:38px;top:400px" width="8" height="10" viewBox="0 0 8 10"><path d="M1 0.8 L5.8 4.9 L1 9 Z" fill="#fff" stroke="#999" stroke-width="0.9"/></svg>
<svg style="position:absolute;left:48px;top:398px" width="16" height="14" viewBox="0 0 16 14"><rect x="0.6" y="0.6" width="14.8" height="12.8" rx="0.8" fill="#c2ced8" stroke="#6a8196" stroke-width="1.2"/><rect x="1.60" y="2.00" width="2.0" height="2.0" fill="#fff"/><rect x="1.60" y="4.75" width="2.0" height="2.0" fill="#fff"/><rect x="1.60" y="7.50" width="2.0" height="2.0" fill="#fff"/><rect x="1.60" y="10.25" width="2.0" height="2.0" fill="#fff"/><rect x="4.22" y="2.00" width="2.0" height="2.0" fill="#fff"/><rect x="4.22" y="4.75" width="2.0" height="2.0" fill="#fff"/><rect x="4.22" y="7.50" width="2.0" height="2.0" fill="#fff"/><rect x="4.22" y="10.25" width="2.0" height="2.0" fill="#fff"/><rect x="6.84" y="2.00" width="2.0" height="2.0" fill="#fff"/><rect x="6.84" y="4.75" width="2.0" height="2.0" fill="#fff"/><rect x="6.84" y="7.50" width="2.0" height="2.0" fill="#fff"/><rect x="6.84" y="10.25" width="2.0" height="2.0" fill="#fff"/><rect x="9.46" y="2.00" width="2.0" height="2.0" fill="#fff"/><rect x="9.46" y="4.75" width="2.0" height="2.0" fill="#fff"/><rect x="9.46" y="7.50" width="2.0" height="2.0" fill="#fff"/><rect x="9.46" y="10.25" width="2.0" height="2.0" fill="#fff"/><rect x="12.08" y="2.00" width="2.0" height="2.0" fill="#fff"/><rect x="12.08" y="4.75" width="2.0" height="2.0" fill="#fff"/><rect x="12.08" y="7.50" width="2.0" height="2.0" fill="#fff"/><rect x="12.08" y="10.25" width="2.0" height="2.0" fill="#fff"/></svg>
<div class="t" style="left:66px;top:399px;font-size:12px;color:#000;font-weight:normal;">lists <span class="g">(947)</span></div>
<svg style="position:absolute;left:38px;top:418px" width="8" height="10" viewBox="0 0 8 10"><path d="M1 0.8 L5.8 4.9 L1 9 Z" fill="#fff" stroke="#999" stroke-width="0.9"/></svg>
<svg style="position:absolute;left:48px;top:416px" width="16" height="14" viewBox="0 0 16 14"><rect x="0.6" y="0.6" width="14.8" height="12.8" rx="0.8" fill="#c2ced8" stroke="#6a8196" stroke-width="1.2"/><rect x="1.60" y="2.00" width="2.0" height="2.0" fill="#fff"/><rect x="1.60" y="4.75" width="2.0" height="2.0" fill="#fff"/><rect x="1.60" y="7.50" width="2.0" height="2.0" fill="#fff"/><rect x="1.60" y="10.25" width="2.0" height="2.0" fill="#fff"/><rect x="4.22" y="2.00" width="2.0" height="2.0" fill="#fff"/><rect x="4.22" y="4.75" width="2.0" height="2.0" fill="#fff"/><rect x="4.22" y="7.50" width="2.0" height="2.0" fill="#fff"/><rect x="4.22" y="10.25" width="2.0" height="2.0" fill="#fff"/><rect x="6.84" y="2.00" width="2.0" height="2.0" fill="#fff"/><rect x="6.84" y="4.75" width="2.0" height="2.0" fill="#fff"/><rect x="6.84" y="7.50" width="2.0" height="2.0" fill="#fff"/><rect x="6.84" y="10.25" width="2.0" height="2.0" fill="#fff"/><rect x="9.46" y="2.00" width="2.0" height="2.0" fill="#fff"/><rect x="9.46" y="4.75" width="2.0" height="2.0" fill="#fff"/><rect x="9.46" y="7.50" width="2.0" height="2.0" fill="#fff"/><rect x="9.46" y="10.25" width="2.0" height="2.0" fill="#fff"/><rect x="12.08" y="2.00" width="2.0" height="2.0" fill="#fff"/><rect x="12.08" y="4.75" width="2.0" height="2.0" fill="#fff"/><rect x="12.08" y="7.50" width="2.0" height="2.0" fill="#fff"/><rect x="12.08" y="10.25" width="2.0" height="2.0" fill="#fff"/></svg>
<div class="t" style="left:66px;top:417px;font-size:12px;color:#000;font-weight:normal;">meteor_accounts_loginServiceConfiguration <span class="g">(1)</span></div>
<svg style="position:absolute;left:38px;top:436px" width="8" height="10" viewBox="0 0 8 10"><path d="M1 0.8 L5.8 4.9 L1 9 Z" fill="#fff" stroke="#999" stroke-width="0.9"/></svg>
<svg style="position:absolute;left:48px;top:434px" width="16" height="14" viewBox="0 0 16 14"><rect x="0.6" y="0.6" width="14.8" height="12.8" rx="0.8" fill="#c2ced8" stroke="#6a8196" stroke-width="1.2"/><rect x="1.60" y="2.00" width="2.0" height="2.0" fill="#fff"/><rect x="1.60" y="4.75" width="2.0" height="2.0" fill="#fff"/><rect x="1.60" y="7.50" width="2.0" height="2.0" fill="#fff"/><rect x="1.60" y="10.25" width="2.0" height="2.0" fill="#fff"/><rect x="4.22" y="2.00" width="2.0" height="2.0" fill="#fff"/><rect x="4.22" y="4.75" width="2.0" height="2.0" fill="#fff"/><rect x="4.22" y="7.50" width="2.0" height="2.0" fill="#fff"/><rect x="4.22" y="10.25" width="2.0" height="2.0" fill="#fff"/><rect x="6.84" y="2.00" width="2.0" height="2.0" fill="#fff"/><rect x="6.84" y="4.75" width="2.0" height="2.0" fill="#fff"/><rect x="6.84" y="7.50" width="2.0" height="2.0" fill="#fff"/><rect x="6.84" y="10.25" width="2.0" height="2.0" fill="#fff"/><rect x="9.46" y="2.00" width="2.0" height="2.0" fill="#fff"/><rect x="9.46" y="4.75" width="2.0" height="2.0" fill="#fff"/><rect x="9.46" y="7.50" width="2.0" height="2.0" fill="#fff"/><rect x="9.46" y="10.25" width="2.0" height="2.0" fill="#fff"/><rect x="12.08" y="2.00" width="2.0" height="2.0" fill="#fff"/><rect x="12.08" y="4.75" width="2.0" height="2.0" fill="#fff"/><rect x="12.08" y="7.50" width="2.0" height="2.0" fill="#fff"/><rect x="12.08" y="10.25" width="2.0" height="2.0" fill="#fff"/></svg>
<div class="t" style="left:66px;top:435px;font-size:12px;color:#000;font-weight:normal;">meteor_oauth_pendingCredentials <span class="g">(0)</span></div>
<svg style="position:absolute;left:38px;top:454px" width="8" height="10" viewBox="0 0 8 10"><path d="M1 0.8 L5.8 4.9 L1 9 Z" fill="#fff" stroke="#999" stroke-width="0.9"/></svg>
<svg style="position:absolute;left:48px;top:452px" width="16" height="14" viewBox="0 0 16 14"><rect x="0.6" y="0.6" width="14.8" height="12.8" rx="0.8" fill="#c2ced8" stroke="#6a8196" stroke-width="1.2"/><rect x="1.60" y="2.00" width="2.0" height="2.0" fill="#fff"/><rect x="1.60" y="4.75" width="2.0" height="2.0" fill="#fff"/><rect x="1.60" y="7.50" width="2.0" height="2.0" fill="#fff"/><rect x="1.60" y="10.25" width="2.0" height="2.0" fill="#fff"/><rect x="4.22" y="2.00" width="2.0" height="2.0" fill="#fff"/><rect x="4.22" y="4.75" width="2.0" height="2.0" fill="#fff"/><rect x="4.22" y="7.50" width="2.0" height="2.0" fill="#fff"/><rect x="4.22" y="10.25" width="2.0" height="2.0" fill="#fff"/><rect x="6.84" y="2.00" width="2.0" height="2.0" fill="#fff"/><rect x="6.84" y="4.75" width="2.0" height="2.0" fill="#fff"/><rect x="6.84" y="7.50" width="2.0" height="2.0" fill="#fff"/><rect x="6.84" y="10.25" width="2.0" height="2.0" fill="#fff"/><rect x="9.46" y="2.00" width="2.0" height="2.0" fill="#fff"/><rect x="9.46" y="4.75" width="2.0" height="2.0" fill="#fff"/><rect x="9.46" y="7.50" width="2.0" height="2.0" fill="#fff"/><rect x="9.46" y="10.25" width="2.0" height="2.0" fill="#fff"/><rect x="12.08" y="2.00" width="2.0" height="2.0" fill="#fff"/><rect x="12.08" y="4.75" width="2.0" height="2.0" fill="#fff"/><rect x="12.08" y="7.50" width="2.0" height="2.0" fill="#fff"/><rect x="12.08" y="10.25" width="2.0" height="2.0" fill="#fff"/></svg>
<div class="t" style="left:66px;top:453px;font-size:12px;color:#000;font-weight:normal;">meteor-migrations <span class="g">(27)</span></div>
<svg style="position:absolute;left:38px;top:472px" width="8" height="10" viewBox="0 0 8 10"><path d="M1 0.8 L5.8 4.9 L1 9 Z" fill="#fff" stroke="#999" stroke-width="0.9"/></svg>
<svg style="position:absolute;left:48px;top:470px" width="16" height="14" viewBox="0 0 16 14"><rect x="0.6" y="0.6" width="14.8" height="12.8" rx="0.8" fill="#c2ced8" stroke="#6a8196" stroke-width="1.2"/><rect x="1.60" y="2.00" width="2.0" height="2.0" fill="#fff"/><rect x="1.60" y="4.75" width="2.0" height="2.0" fill="#fff"/><rect x="1.60" y="7.50" width="2.0" height="2.0" fill="#fff"/><rect x="1.60" y="10.25" width="2.0" height="2.0" fill="#fff"/><rect x="4.22" y="2.00" width="2.0" height="2.0" fill="#fff"/><rect x="4.22" y="4.75" width="2.0" height="2.0" fill="#fff"/><rect x="4.22" y="7.50" width="2.0" height="2.0" fill="#fff"/><rect x="4.22" y="10.25" width="2.0" height="2.0" fill="#fff"/><rect x="6.84" y="2.00" width="2.0" height="2.0" fill="#fff"/><rect x="6.84" y="4.75" width="2.0" height="2.0" fill="#fff"/><rect x="6.84" y="7.50" width="2.0" height="2.0" fill="#fff"/><rect x="6.84" y="10.25" width="2.0" height="2.0" fill="#fff"/><rect x="9.46" y="2.00" width="2.0" height="2.0" fill="#fff"/><rect x="9.46" y="4.75" width="2.0" height="2.0" fill="#fff"/><rect x="9.46" y="7.50" width="2.0" height="2.0" fill="#fff"/><rect x="9.46" y="10.25" width="2.0" height="2.0" fill="#fff"/><rect x="12.08" y="2.00" width="2.0" height="2.0" fill="#fff"/><rect x="12.08" y="4.75" width="2.0" height="2.0" fill="#fff"/><rect x="12.08" y="7.50" width="2.0" height="2.0" fill="#fff"/><rect x="12.08" y="10.25" width="2.0" height="2.0" fill="#fff"/></svg>
<div class="t" style="left:66px;top:471px;font-size:12px;color:#000;font-weight:normal;">presences <span class="g">(33.6K)</span></div>
<svg style="position:absolute;left:38px;top:490px" width="8" height="10" viewBox="0 0 8 10"><path d="M1 0.8 L5.8 4.9 L1 9 Z" fill="#fff" stroke="#999" stroke-width="0.9"/></svg>
<svg style="position:absolute;left:48px;top:488px" width="16" height="14" viewBox="0 0 16 14"><rect x="0.6" y="0.6" width="14.8" height="12.8" rx="0.8" fill="#c2ced8" stroke="#6a8196" stroke-width="1.2"/><rect x="1.60" y="2.00" width="2.0" height="2.0" fill="#fff"/><rect x="1.60" y="4.75" width="2.0" height="2.0" fill="#fff"/><rect x="1.60" y="7.50" width="2.0" height="2.0" fill="#fff"/><rect x="1.60" y="10.25" width="2.0" height="2.0" fill="#fff"/><rect x="4.22" y="2.00" width="2.0" height="2.0" fill="#fff"/><rect x="4.22" y="4.75" width="2.0" height="2.0" fill="#fff"/><rect x="4.22" y="7.50" width="2.0" height="2.0" fill="#fff"/><rect x="4.22" y="10.25" width="2.0" height="2.0" fill="#fff"/><rect x="6.84" y="2.00" width="2.0" height="2.0" fill="#fff"/><rect x="6.84" y="4.75" width="2.0" height="2.0" fill="#fff"/><rect x="6.84" y="7.50" width="2.0" height="2.0" fill="#fff"/><rect x="6.84" y="10.25" width="2.0" height="2.0" fill="#fff"/><rect x="9.46" y="2.00" width="2.0" height="2.0" fill="#fff"/><rect x="9.46" y="4.75" width="2.0" height="2.0" fill="#fff"/><rect x="9.46" y="7.50" width="2.0" height="2.0" fill="#fff"/><rect x="9.46" y="10.25" width="2.0" height="2.0" fill="#fff"/><rect x="12.08" y="2.00" width="2.0" height="2.0" fill="#fff"/><rect x="12.08" y="4.75" width="2.0" height="2.0" fill="#fff"/><rect x="12.08" y="7.50" width="2.0" height="2.0" fill="#fff"/><rect x="12.08" y="10.25" width="2.0" height="2.0" fill="#fff"/></svg>
<div class="t" style="left:66px;top:489px;font-size:12px;color:#000;font-weight:normal;">rules <span class="g">(1)</span></div>
<svg style="position:absolute;left:38px;top:508px" width="8" height="10" viewBox="0 0 8 10"><path d="M1 0.8 L5.8 4.9 L1 9 Z" fill="#fff" stroke="#999" stroke-width="0.9"/></svg>
<svg style="position:absolute;left:48px;top:506px" width="16" height="14" viewBox="0 0 16 14"><rect x="0.6" y="0.6" width="14.8" height="12.8" rx="0.8" fill="#c2ced8" stroke="#6a8196" stroke-width="1.2"/><rect x="1.60" y="2.00" width="2.0" height="2.0" fill="#fff"/><rect x="1.60" y="4.75" width="2.0" height="2.0" fill="#fff"/><rect x="1.60" y="7.50" width="2.0" height="2.0" fill="#fff"/><rect x="1.60" y="10.25" width="2.0" height="2.0" fill="#fff"/><rect x="4.22" y="2.00" width="2.0" height="2.0" fill="#fff"/><rect x="4.22" y="4.75" width="2.0" height="2.0" fill="#fff"/><rect x="4.22" y="7.50" width="2.0" height="2.0" fill="#fff"/><rect x="4.22" y="10.25" width="2.0" height="2.0" fill="#fff"/><rect x="6.84" y="2.00" width="2.0" height="2.0" fill="#fff"/><rect x="6.84" y="4.75" width="2.0" height="2.0" fill="#fff"/><rect x="6.84" y="7.50" width="2.0" height="2.0" fill="#fff"/><rect x="6.84" y="10.25" width="2.0" height="2.0" fill="#fff"/><rect x="9.46" y="2.00" width="2.0" height="2.0" fill="#fff"/><rect x="9.46" y="4.75" width="2.0" height="2.0" fill="#fff"/><rect x="9.46" y="7.50" width="2.0" height="2.0" fill="#fff"/><rect x="9.46" y="10.25" width="2.0" height="2.0" fill="#fff"/><rect x="12.08" y="2.00" width="2.0" height="2.0" fill="#fff"/><rect x="12.08" y="4.75" width="2.0" height="2.0" fill="#fff"/><rect x="12.08" y="7.50" width="2.0" height="2.0" fill="#fff"/><rect x="12.08" y="10.25" width="2.0" height="2.0" fill="#fff"/></svg>
<div class="t" style="left:66px;top:507px;font-size:12px;color:#000;font-weight:normal;">settings <span class="g">(1)</span></div>
<svg style="position:absolute;left:38px;top:526px" width="8" height="10" viewBox="0 0 8 10"><path d="M1 0.8 L5.8 4.9 L1 9 Z" fill="#fff" stroke="#999" stroke-width="0.9"/></svg>
<svg style="position:absolute;left:48px;top:524px" width="16" height="14" viewBox="0 0 16 14"><rect x="0.6" y="0.6" width="14.8" height="12.8" rx="0.8" fill="#c2ced8" stroke="#6a8196" stroke-width="1.2"/><rect x="1.60" y="2.00" width="2.0" height="2.0" fill="#fff"/><rect x="1.60" y="4.75" width="2.0" height="2.0" fill="#fff"/><rect x="1.60" y="7.50" width="2.0" height="2.0" fill="#fff"/><rect x="1.60" y="10.25" width="2.0" height="2.0" fill="#fff"/><rect x="4.22" y="2.00" width="2.0" height="2.0" fill="#fff"/><rect x="4.22" y="4.75" width="2.0" height="2.0" fill="#fff"/><rect x="4.22" y="7.50" width="2.0" height="2.0" fill="#fff"/><rect x="4.22" y="10.25" width="2.0" height="2.0" fill="#fff"/><rect x="6.84" y="2.00" width="2.0" height="2.0" fill="#fff"/><rect x="6.84" y="4.75" width="2.0" height="2.0" fill="#fff"/><rect x="6.84" y="7.50" width="2.0" height="2.0" fill="#fff"/><rect x="6.84" y="10.25" width="2.0" height="2.0" fill="#fff"/><rect x="9.46" y="2.00" width="2.0" height="2.0" fill="#fff"/><rect x="9.46" y="4.75" width="2.0" height="2.0" fill="#fff"/><rect x="9.46" y="7.50" width="2.0" height="2.0" fill="#fff"/><rect x="9.46" y="10.25" width="2.0" height="2.0" fill="#fff"/><rect x="12.08" y="2.00" width="2.0" height="2.0" fill="#fff"/><rect x="12.08" y="4.75" width="2.0" height="2.0" fill="#fff"/><rect x="12.08" y="7.50" width="2.0" height="2.0" fill="#fff"/><rect x="12.08" y="10.25" width="2.0" height="2.0" fill="#fff"/></svg>
<div class="t" style="left:66px;top:525px;font-size:12px;color:#000;font-weight:normal;">swimlanes <span class="g">(144)</span></div>
<svg style="position:absolute;left:38px;top:544px" width="8" height="10" viewBox="0 0 8 10"><path d="M1 0.8 L5.8 4.9 L1 9 Z" fill="#fff" stroke="#999" stroke-width="0.9"/></svg>
<svg style="position:absolute;left:48px;top:542px" width="16" height="14" viewBox="0 0 16 14"><rect x="0.6" y="0.6" width="14.8" height="12.8" rx="0.8" fill="#c2ced8" stroke="#6a8196" stroke-width="1.2"/><rect x="1.60" y="2.00" width="2.0" height="2.0" fill="#fff"/><rect x="1.60" y="4.75" width="2.0" height="2.0" fill="#fff"/><rect x="1.60" y="7.50" width="2.0" height="2.0" fill="#fff"/><rect x="1.60" y="10.25" width="2.0" height="2.0" fill="#fff"/><rect x="4.22" y="2.00" width="2.0" height="2.0" fill="#fff"/><rect x="4.22" y="4.75" width="2.0" height="2.0" fill="#fff"/><rect x="4.22" y="7.50" width="2.0" height="2.0" fill="#fff"/><rect x="4.22" y="10.25" width="2.0" height="2.0" fill="#fff"/><rect x="6.84" y="2.00" width="2.0" height="2.0" fill="#fff"/><rect x="6.84" y="4.75" width="2.0" height="2.0" fill="#fff"/><rect x="6.84" y="7.50" width="2.0" height="2.0" fill="#fff"/><rect x="6.84" y="10.25" width="2.0" height="2.0" fill="#fff"/><rect x="9.46" y="2.00" width="2.0" height="2.0" fill="#fff"/><rect x="9.46" y="4.75" width="2.0" height="2.0" fill="#fff"/><rect x="9.46" y="7.50" width="2.0" height="2.0" fill="#fff"/><rect x="9.46" y="10.25" width="2.0" height="2.0" fill="#fff"/><rect x="12.08" y="2.00" width="2.0" height="2.0" fill="#fff"/><rect x="12.08" y="4.75" width="2.0" height="2.0" fill="#fff"/><rect x="12.08" y="7.50" width="2.0" height="2.0" fill="#fff"/><rect x="12.08" y="10.25" width="2.0" height="2.0" fill="#fff"/></svg>
<div class="t" style="left:66px;top:543px;font-size:12px;color:#000;font-weight:normal;">triggers <span class="g">(1)</span></div>
<svg style="position:absolute;left:38px;top:562px" width="8" height="10" viewBox="0 0 8 10"><path d="M1 0.8 L5.8 4.9 L1 9 Z" fill="#fff" stroke="#999" stroke-width="0.9"/></svg>
<svg style="position:absolute;left:48px;top:560px" width="16" height="14" viewBox="0 0 16 14"><rect x="0.6" y="0.6" width="14.8" height="12.8" rx="0.8" fill="#c2ced8" stroke="#6a8196" stroke-width="1.2"/><rect x="1.60" y="2.00" width="2.0" height="2.0" fill="#fff"/><rect x="1.60" y="4.75" width="2.0" height="2.0" fill="#fff"/><rect x="1.60" y="7.50" width="2.0" height="2.0" fill="#fff"/><rect x="1.60" y="10.25" width="2.0" height="2.0" fill="#fff"/><rect x="4.22" y="2.00" width="2.0" height="2.0" fill="#fff"/><rect x="4.22" y="4.75" width="2.0" height="2.0" fill="#fff"/><rect x="4.22" y="7.50" width="2.0" height="2.0" fill="#fff"/><rect x="4.22" y="10.25" width="2.0" height="2.0" fill="#fff"/><rect x="6.84" y="2.00" width="2.0" height="2.0" fill="#fff"/><rect x="6.84" y="4.75" width="2.0" height="2.0" fill="#fff"/><rect x="6.84" y="7.50" width="2.0" height="2.0" fill="#fff"/><rect x="6.84" y="10.25" width="2.0" height="2.0" fill="#fff"/><rect x="9.46" y="2.00" width="2.0" height="2.0" fill="#fff"/><rect x="9.46" y="4.75" width="2.0" height="2.0" fill="#fff"/><rect x="9.46" y="7.50" width="2.0" height="2.0" fill="#fff"/><rect x="9.46" y="10.25" width="2.0" height="2.0" fill="#fff"/><rect x="12.08" y="2.00" width="2.0" height="2.0" fill="#fff"/><rect x="12.08" y="4.75" width="2.0" height="2.0" fill="#fff"/><rect x="12.08" y="7.50" width="2.0" height="2.0" fill="#fff"/><rect x="12.08" y="10.25" width="2.0" height="2.0" fill="#fff"/></svg>
<div class="t" style="left:66px;top:561px;font-size:12px;color:#000;font-weight:normal;">unsaved-edits <span class="g">(3)</span></div>
<svg style="position:absolute;left:38px;top:580px" width="8" height="10" viewBox="0 0 8 10"><path d="M1 0.8 L5.8 4.9 L1 9 Z" fill="#fff" stroke="#999" stroke-width="0.9"/></svg>
<svg style="position:absolute;left:48px;top:578px" width="16" height="14" viewBox="0 0 16 14"><rect x="0.6" y="0.6" width="14.8" height="12.8" rx="0.8" fill="#c2ced8" stroke="#6a8196" stroke-width="1.2"/><rect x="1.60" y="2.00" width="2.0" height="2.0" fill="#fff"/><rect x="1.60" y="4.75" width="2.0" height="2.0" fill="#fff"/><rect x="1.60" y="7.50" width="2.0" height="2.0" fill="#fff"/><rect x="1.60" y="10.25" width="2.0" height="2.0" fill="#fff"/><rect x="4.22" y="2.00" width="2.0" height="2.0" fill="#fff"/><rect x="4.22" y="4.75" width="2.0" height="2.0" fill="#fff"/><rect x="4.22" y="7.50" width="2.0" height="2.0" fill="#fff"/><rect x="4.22" y="10.25" width="2.0" height="2.0" fill="#fff"/><rect x="6.84" y="2.00" width="2.0" height="2.0" fill="#fff"/><rect x="6.84" y="4.75" width="2.0" height="2.0" fill="#fff"/><rect x="6.84" y="7.50" width="2.0" height="2.0" fill="#fff"/><rect x="6.84" y="10.25" width="2.0" height="2.0" fill="#fff"/><rect x="9.46" y="2.00" width="2.0" height="2.0" fill="#fff"/><rect x="9.46" y="4.75" width="2.0" height="2.0" fill="#fff"/><rect x="9.46" y="7.50" width="2.0" height="2.0" fill="#fff"/><rect x="9.46" y="10.25" width="2.0" height="2.0" fill="#fff"/><rect x="12.08" y="2.00" width="2.0" height="2.0" fill="#fff"/><rect x="12.08" y="4.75" width="2.0" height="2.0" fill="#fff"/><rect x="12.08" y="7.50" width="2.0" height="2.0" fill="#fff"/><rect x="12.08" y="10.25" width="2.0" height="2.0" fill="#fff"/></svg>
<div class="t" style="left:66px;top:579px;font-size:12px;color:#000;font-weight:normal;">users <span class="g">(7)</span></div>
<svg style="position:absolute;left:38px;top:598px" width="8" height="10" viewBox="0 0 8 10"><path d="M1 0.8 L5.8 4.9 L1 9 Z" fill="#fff" stroke="#999" stroke-width="0.9"/></svg>
<svg style="position:absolute;left:48px;top:595px" width="17" height="17" viewBox="0 0 17 17">
<defs><linearGradient id="gfg" x1="0" x2="1"><stop offset="0" stop-color="#dde5ec"/><stop offset="0.4" stop-color="#f6f9fb"/><stop offset="1" stop-color="#8c98a4"/></linearGradient></defs>
<path d="M0.8 2.2 C0.8 0.2 10.5 0.2 10.5 2.2 V12.5 C10.5 14.5 0.8 14.5 0.8 12.5 Z" fill="url(#gfg)" stroke="#66717c" stroke-width="0.8"/>
<path d="M1 5 C3 6.2 8.5 6.2 10.3 5 M1 8 C3 9.2 8.5 9.2 10.3 8" stroke="#7a8690" stroke-width="0.6" fill="none"/>
<rect x="5.5" y="6" width="11" height="10.5" rx="1.2" fill="#1a1a1a"/>
<rect x="7.3" y="6.8" width="7.4" height="4.2" fill="#cfe3f5"/>
<rect x="8.5" y="12.5" width="5" height="4" fill="#d8d8d8"/><rect x="9.5" y="13.2" width="1.5" height="2.5" fill="#222"/></svg>
<div class="t" style="left:66px;top:597px;font-size:12px;color:#000;font-weight:normal;">cfs_gridfs._tempstore.files <span class="g">(0)</span></div>
<div class="a" style="left:0;top:612px;width:351px;height:18px;background:#fde08f"></div>
<svg style="position:absolute;left:38px;top:616px" width="8" height="10" viewBox="0 0 8 10"><path d="M1 0.8 L5.8 4.9 L1 9 Z" fill="#fff" stroke="#999" stroke-width="0.9"/></svg>
<svg style="position:absolute;left:48px;top:613px" width="17" height="17" viewBox="0 0 17 17">
<defs><linearGradient id="gfg" x1="0" x2="1"><stop offset="0" stop-color="#dde5ec"/><stop offset="0.4" stop-color="#f6f9fb"/><stop offset="1" stop-color="#8c98a4"/></linearGradient></defs>
<path d="M0.8 2.2 C0.8 0.2 10.5 0.2 10.5 2.2 V12.5 C10.5 14.5 0.8 14.5 0.8 12.5 Z" fill="url(#gfg)" stroke="#66717c" stroke-width="0.8"/>
<path d="M1 5 C3 6.2 8.5 6.2 10.3 5 M1 8 C3 9.2 8.5 9.2 10.3 8" stroke="#7a8690" stroke-width="0.6" fill="none"/>
<rect x="5.5" y="6" width="11" height="10.5" rx="1.2" fill="#1a1a1a"/>
<rect x="7.3" y="6.8" width="7.4" height="4.2" fill="#cfe3f5"/>
<rect x="8.5" y="12.5" width="5" height="4" fill="#d8d8d8"/><rect x="9.5" y="13.2" width="1.5" height="2.5" fill="#222"/></svg>
<div class="t" style="left:66px;top:615px;font-size:12px;color:#000;font-weight:normal;">cfs_gridfs.attachments.files <span class="g">(222)</span></div>
<svg style="position:absolute;left:38px;top:634px" width="8" height="10" viewBox="0 0 8 10"><path d="M1 0.8 L5.8 4.9 L1 9 Z" fill="#fff" stroke="#999" stroke-width="0.9"/></svg>
<svg style="position:absolute;left:48px;top:631px" width="17" height="17" viewBox="0 0 17 17">
<defs><linearGradient id="gfg" x1="0" x2="1"><stop offset="0" stop-color="#dde5ec"/><stop offset="0.4" stop-color="#f6f9fb"/><stop offset="1" stop-color="#8c98a4"/></linearGradient></defs>
<path d="M0.8 2.2 C0.8 0.2 10.5 0.2 10.5 2.2 V12.5 C10.5 14.5 0.8 14.5 0.8 12.5 Z" fill="url(#gfg)" stroke="#66717c" stroke-width="0.8"/>
<path d="M1 5 C3 6.2 8.5 6.2 10.3 5 M1 8 C3 9.2 8.5 9.2 10.3 8" stroke="#7a8690" stroke-width="0.6" fill="none"/>
<rect x="5.5" y="6" width="11" height="10.5" rx="1.2" fill="#1a1a1a"/>
<rect x="7.3" y="6.8" width="7.4" height="4.2" fill="#cfe3f5"/>
<rect x="8.5" y="12.5" width="5" height="4" fill="#d8d8d8"/><rect x="9.5" y="13.2" width="1.5" height="2.5" fill="#222"/></svg>
<div class="t" style="left:66px;top:633px;font-size:12px;color:#000;font-weight:normal;">cfs_gridfs.avatars.files <span class="g">(9)</span></div>
<svg style="position:absolute;left:48px;top:650px" width="17" height="16" viewBox="0 0 17 16">
<path d="M8.5 4.5 C8.5 0.2 15 0.2 15 4.5 L15.3 8.5 L8.2 8.5 Z" fill="#f2d060" stroke="#a08020" stroke-width="0.6"/>
<ellipse cx="11.8" cy="5.6" rx="2.2" ry="2.8" fill="#f6dcc0"/>
<path d="M7.5 15.5 C7.5 9.5 16.5 9.5 16.5 15.5 Z" fill="#c82828" stroke="#801010" stroke-width="0.6"/>
<circle cx="5.8" cy="6" r="3.4" fill="#7a4a2a" stroke="#2a1a10" stroke-width="0.6"/>
<path d="M2.4 5.5 C2.4 1.8 9.2 1.8 9.2 5.2 C8 4 4 4 2.4 5.5 Z" fill="#111"/>
<path d="M0.5 16 C0.5 10 11 10 11 16 Z" fill="#2a9a3a" stroke="#145a1e" stroke-width="0.6"/>
<path d="M4.5 11.5 L5.8 13 L7 11.5" stroke="#fff" stroke-width="0.8" fill="none"/></svg>
<div class="t" style="left:66px;top:651px;font-size:12px;color:#000;font-weight:normal;">users <span class="g">(0)</span></div>
<svg style="position:absolute;left:22px;top:670px" width="8" height="10" viewBox="0 0 8 10"><path d="M1 0.8 L5.8 4.9 L1 9 Z" fill="#fff" stroke="#999" stroke-width="0.9"/></svg>
<svg style="position:absolute;left:33px;top:667px" width="15" height="17" viewBox="0 0 15 17">
<defs><linearGradient id="dbg" x1="0" x2="1"><stop offset="0" stop-color="#d8e2ea"/><stop offset="0.3" stop-color="#f4f8fb"/><stop offset="0.75" stop-color="#7c8a96"/><stop offset="1" stop-color="#b8c4ce"/></linearGradient></defs>
<path d="M0.8 2.5 C0.8 0.3 13.8 0.3 13.8 2.5 V14 C13.8 16.6 0.8 16.6 0.8 14 Z" fill="url(#dbg)" stroke="#5f6a74" stroke-width="0.9"/>
<path d="M1 5.3 C3 6.8 11.5 6.8 13.6 5.3 M1 8.2 C3 9.7 11.5 9.7 13.6 8.2 M1 11.1 C3 12.6 11.5 12.6 13.6 11.1" stroke="#6a7682" stroke-width="0.8" fill="none"/>
<path d="M1.5 2.5 C3 4 11.5 4 13.2 2.5" stroke="#9aa6b0" stroke-width="0.6" fill="none"/></svg>
<div class="t" style="left:50px;top:669px;font-size:12px;color:#000;font-weight:normal;">wekantest</div>
<svg style="position:absolute;left:32px;top:686px" width="17" height="16" viewBox="0 0 17 16">
<path d="M8.5 4.5 C8.5 0.2 15 0.2 15 4.5 L15.3 8.5 L8.2 8.5 Z" fill="#f2d060" stroke="#a08020" stroke-width="0.6"/>
<ellipse cx="11.8" cy="5.6" rx="2.2" ry="2.8" fill="#f6dcc0"/>
<path d="M7.5 15.5 C7.5 9.5 16.5 9.5 16.5 15.5 Z" fill="#c82828" stroke="#801010" stroke-width="0.6"/>
<circle cx="5.8" cy="6" r="3.4" fill="#7a4a2a" stroke="#2a1a10" stroke-width="0.6"/>
<path d="M2.4 5.5 C2.4 1.8 9.2 1.8 9.2 5.2 C8 4 4 4 2.4 5.5 Z" fill="#111"/>
<path d="M0.5 16 C0.5 10 11 10 11 16 Z" fill="#2a9a3a" stroke="#145a1e" stroke-width="0.6"/>
<path d="M4.5 11.5 L5.8 13 L7 11.5" stroke="#fff" stroke-width="0.8" fill="none"/></svg>
<div class="t" style="left:50px;top:687px;font-size:12px;color:#000;font-weight:normal;">users <span class="g">(0)</span></div>
<svg style="position:absolute;left:3px;top:707px" width="8" height="8" viewBox="0 0 8 8"><path d="M1 7 L7 7 L7 1 Z" fill="#404040"/></svg>
<svg style="position:absolute;left:16px;top:703px" width="16" height="17" viewBox="0 0 16 17">
<defs><linearGradient id="svf" x1="0" x2="0" y1="0" y2="1"><stop offset="0" stop-color="#8ec8f0"/><stop offset="0.5" stop-color="#2a7fd0"/><stop offset="1" stop-color="#5aa8e8"/></linearGradient>
<linearGradient id="svs" x1="0" x2="1"><stop offset="0" stop-color="#3c4858"/><stop offset="1" stop-color="#8a96a8"/></linearGradient></defs>
<path d="M2 2 L9.5 3 L14 1.5 L14 13 L9.5 16 L2 14.5 Z" fill="#556070"/>
<path d="M2.3 2.5 L9.3 3.4 L9.3 15.5 L2.3 14.2 Z" fill="url(#svf)" stroke="#44505e" stroke-width="0.7"/>
<path d="M9.3 3.4 L13.8 1.8 L13.8 12.8 L9.3 15.5 Z" fill="url(#svs)" stroke="#3a4450" stroke-width="0.6"/>
<path d="M2.5 1.8 C4 0.2 12 0 13.8 1.6 L9.3 3.2 Z" fill="#c8d0d8" stroke="#6a7480" stroke-width="0.5"/>
<path d="M3.2 5.5 L8.5 6.1 M3.2 7.8 L8.5 8.4 M3.2 10.1 L8.5 10.7" stroke="#a8dcff" stroke-width="0.8"/>
<path d="M3 12.2 L8.8 13.2 L8.8 15 L3 14 Z" fill="#dfe6ec"/></svg>
<div class="t" style="left:34px;top:705px;font-size:12px;color:#000;font-weight:normal;">localhost</div>
<svg style="position:absolute;left:22px;top:724px" width="8" height="10" viewBox="0 0 8 10"><path d="M1 0.8 L5.8 4.9 L1 9 Z" fill="#fff" stroke="#999" stroke-width="0.9"/></svg>
<svg style="position:absolute;left:33px;top:721px" width="15" height="17" viewBox="0 0 15 17">
<defs><linearGradient id="dbg" x1="0" x2="1"><stop offset="0" stop-color="#d8e2ea"/><stop offset="0.3" stop-color="#f4f8fb"/><stop offset="0.75" stop-color="#7c8a96"/><stop offset="1" stop-color="#b8c4ce"/></linearGradient></defs>
<path d="M0.8 2.5 C0.8 0.3 13.8 0.3 13.8 2.5 V14 C13.8 16.6 0.8 16.6 0.8 14 Z" fill="url(#dbg)" stroke="#5f6a74" stroke-width="0.9"/>
<path d="M1 5.3 C3 6.8 11.5 6.8 13.6 5.3 M1 8.2 C3 9.7 11.5 9.7 13.6 8.2 M1 11.1 C3 12.6 11.5 12.6 13.6 11.1" stroke="#6a7682" stroke-width="0.8" fill="none"/>
<path d="M1.5 2.5 C3 4 11.5 4 13.2 2.5" stroke="#9aa6b0" stroke-width="0.6" fill="none"/></svg>
<div class="t" style="left:50px;top:723px;font-size:12px;color:#000;font-weight:normal;"><span class="g">local</span></div>
<svg style="position:absolute;left:19px;top:743px" width="8" height="8" viewBox="0 0 8 8"><path d="M1 7 L7 7 L7 1 Z" fill="#404040"/></svg>
<svg style="position:absolute;left:33px;top:739px" width="15" height="17" viewBox="0 0 15 17">
<defs><linearGradient id="dbg" x1="0" x2="1"><stop offset="0" stop-color="#d8e2ea"/><stop offset="0.3" stop-color="#f4f8fb"/><stop offset="0.75" stop-color="#7c8a96"/><stop offset="1" stop-color="#b8c4ce"/></linearGradient></defs>
<path d="M0.8 2.5 C0.8 0.3 13.8 0.3 13.8 2.5 V14 C13.8 16.6 0.8 16.6 0.8 14 Z" fill="url(#dbg)" stroke="#5f6a74" stroke-width="0.9"/>
<path d="M1 5.3 C3 6.8 11.5 6.8 13.6 5.3 M1 8.2 C3 9.7 11.5 9.7 13.6 8.2 M1 11.1 C3 12.6 11.5 12.6 13.6 11.1" stroke="#6a7682" stroke-width="0.8" fill="none"/>
<path d="M1.5 2.5 C3 4 11.5 4 13.2 2.5" stroke="#9aa6b0" stroke-width="0.6" fill="none"/></svg>
<div class="t" style="left:50px;top:741px;font-size:12px;color:#000;font-weight:normal;">meteor <span class="g">(23)</span></div>
<svg style="position:absolute;left:38px;top:760px" width="8" height="10" viewBox="0 0 8 10"><path d="M1 0.8 L5.8 4.9 L1 9 Z" fill="#fff" stroke="#999" stroke-width="0.9"/></svg>
<svg style="position:absolute;left:48px;top:758px" width="16" height="14" viewBox="0 0 16 14"><rect x="0.6" y="0.6" width="14.8" height="12.8" rx="0.8" fill="#c2ced8" stroke="#6a8196" stroke-width="1.2"/><rect x="1.60" y="2.00" width="2.0" height="2.0" fill="#fff"/><rect x="1.60" y="4.75" width="2.0" height="2.0" fill="#fff"/><rect x="1.60" y="7.50" width="2.0" height="2.0" fill="#fff"/><rect x="1.60" y="10.25" width="2.0" height="2.0" fill="#fff"/><rect x="4.22" y="2.00" width="2.0" height="2.0" fill="#fff"/><rect x="4.22" y="4.75" width="2.0" height="2.0" fill="#fff"/><rect x="4.22" y="7.50" width="2.0" height="2.0" fill="#fff"/><rect x="4.22" y="10.25" width="2.0" height="2.0" fill="#fff"/><rect x="6.84" y="2.00" width="2.0" height="2.0" fill="#fff"/><rect x="6.84" y="4.75" width="2.0" height="2.0" fill="#fff"/><rect x="6.84" y="7.50" width="2.0" height="2.0" fill="#fff"/><rect x="6.84" y="10.25" width="2.0" height="2.0" fill="#fff"/><rect x="9.46" y="2.00" width="2.0" height="2.0" fill="#fff"/><rect x="9.46" y="4.75" width="2.0" height="2.0" fill="#fff"/><rect x="9.46" y="7.50" width="2.0" height="2.0" fill="#fff"/><rect x="9.46" y="10.25" width="2.0" height="2.0" fill="#fff"/><rect x="12.08" y="2.00" width="2.0" height="2.0" fill="#fff"/><rect x="12.08" y="4.75" width="2.0" height="2.0" fill="#fff"/><rect x="12.08" y="7.50" width="2.0" height="2.0" fill="#fff"/><rect x="12.08" y="10.25" width="2.0" height="2.0" fill="#fff"/></svg>
<div class="t" style="left:66px;top:759px;font-size:12px;color:#000;font-weight:normal;">accountSettings <span class="g">(2)</span></div>
</div>
<div class="a" style="left:0;top:882px;width:363px;height:261px;border:1px solid #99bce8;border-top:none;background:#fff"></div>
<div class="a" style="left:1px;top:882px;width:361px;height:34px;background:#dfeafb;border-bottom:1px solid #99bce8"></div>
<div class="a" style="left:6px;top:889px;width:86px;height:28px;background:linear-gradient(#eef4fb,#fff);border:1px solid #99bce8;border-bottom:none;border-radius:4px 4px 0 0"></div>
<div class="t" style="left:16px;top:896px;font-size:12px;color:#0f2f66;font-weight:bold;">My Queries</div>
<div class="a" style="left:96px;top:889px;width:68px;height:27px;background:linear-gradient(#e8f0fa,#dfe9f6);border:1px solid #99bce8;border-bottom:none;border-radius:4px 4px 0 0"></div>
<div class="t" style="left:107px;top:896px;font-size:12px;color:#153a75;font-weight:normal;">Samples</div>
<svg style="position:absolute;left:341px;top:896px" width="12" height="12" viewBox="0 0 12 12"><path d="M1.5 1.5 L6 5.5 L10.5 1.5 M1.5 6 L6 10 L10.5 6" stroke="#1a8ae6" stroke-width="1.5" fill="none"/></svg>
<svg style="position:absolute;left:4px;top:923px" width="8" height="8" viewBox="0 0 8 8"><path d="M1 7 L7 7 L7 1 Z" fill="#404040"/></svg>
<svg style="position:absolute;left:17px;top:919px" width="16" height="16" viewBox="0 0 16 16"><path d="M1 3 H6 L7.5 4.5 H14 V14 H1 Z" fill="#e8c460" stroke="#9a7a20" stroke-width="0.8"/><path d="M1.5 7 H15.5 L14 14 H1.5 Z" fill="#f6e08a" stroke="#9a7a20" stroke-width="0.8"/></svg>
<div class="t" style="left:35px;top:921px;font-size:12px;color:#000;font-weight:normal;">My Queries (empty)</div>
<svg style="position:absolute;left:34px;top:937px" width="14" height="17" viewBox="0 0 14 17"><circle cx="7" cy="6" r="5" fill="#f6e27a" stroke="#c9a830" stroke-width="0.8"/><rect x="4.5" y="11" width="5" height="4" fill="#777"/></svg>
<div class="t" style="left:51px;top:939px;font-size:12px;color:#000;font-weight:normal;">Press Ctrl+S to save the query here</div>
<div class="a" style="left:368px;top:82px;width:1549px;height:1061px;border:1px solid #99bce8;border-right:none;background:#fff"></div>
<div class="a" style="left:369px;top:83px;width:1548px;height:29px;background:#dfeafb;border-bottom:1px solid #99bce8"></div>
<div class="a" style="left:373px;top:85px;width:315px;height:27px;background:linear-gradient(#e8f0fc,#dfeafb);border:1px solid #99bce8;border-bottom:none;border-radius:4px 4px 0 0"></div>
<div class="t" style="left:384px;top:92px;font-size:12px;color:#153a75;font-weight:normal;">meteor:cfs_gridfs.attachments.files@localhost - Index</div>
<svg style="position:absolute;left:673.5px;top:95.5px" width="7" height="7" viewBox="0 0 7 7"><path d="M0.8 0.8 L6.2 6.2 M6.2 0.8 L0.8 6.2" stroke="#44506a" stroke-width="1.1"/></svg>
<div class="a" style="left:692px;top:85px;width:275px;height:27px;background:linear-gradient(#e8f0fc,#dfeafb);border:1px solid #99bce8;border-bottom:none;border-radius:4px 4px 0 0"></div>
<div class="t" style="left:703px;top:92px;font-size:12px;color:#153a75;font-weight:normal;">meteor:cfs_gridfs.attachments.files@localhost</div>
<svg style="position:absolute;left:952.5px;top:95.5px" width="7" height="7" viewBox="0 0 7 7"><path d="M0.8 0.8 L6.2 6.2 M6.2 0.8 L0.8 6.2" stroke="#44506a" stroke-width="1.1"/></svg>
<div class="a" style="left:971px;top:85px;width:307px;height:28px;background:linear-gradient(#eef4fd,#fff);border:1px solid #99bce8;border-bottom:none;border-radius:4px 4px 0 0"></div>
<div class="t" style="left:982px;top:92px;font-size:12px;color:#0f2f66;font-weight:bold;">wekan:cfs_gridfs.attachments.files@localhost_1</div>
<svg style="position:absolute;left:1263.5px;top:95.5px" width="7" height="7" viewBox="0 0 7 7"><path d="M0.8 0.8 L6.2 6.2 M6.2 0.8 L0.8 6.2" stroke="#44506a" stroke-width="1.1"/></svg>
<svg style="position:absolute;left:1879px;top:88px" width="18" height="18" viewBox="0 0 18 18"><defs><linearGradient id="agg" x1="0" x2="0" y1="0" y2="1"><stop offset="0" stop-color="#8ac878"/><stop offset="0.5" stop-color="#3aaa30"/><stop offset="1" stop-color="#6ae040"/></linearGradient></defs><circle cx="9" cy="9" r="7.6" fill="url(#agg)" stroke="#555" stroke-width="1"/><path d="M9 4.5 V13.5 M4.5 9 H13.5" stroke="#f4f4f4" stroke-width="1.8"/></svg>
<svg style="position:absolute;left:1904px;top:95px" width="8" height="5" viewBox="0 0 8 5"><path d="M0 0 H8 L4 4.5 Z" fill="#111"/></svg>
<svg style="position:absolute;left:375px;top:120px" width="16" height="17" viewBox="0 0 16 17">
<defs><linearGradient id="svf" x1="0" x2="0" y1="0" y2="1"><stop offset="0" stop-color="#8ec8f0"/><stop offset="0.5" stop-color="#2a7fd0"/><stop offset="1" stop-color="#5aa8e8"/></linearGradient>
<linearGradient id="svs" x1="0" x2="1"><stop offset="0" stop-color="#3c4858"/><stop offset="1" stop-color="#8a96a8"/></linearGradient></defs>
<path d="M2 2 L9.5 3 L14 1.5 L14 13 L9.5 16 L2 14.5 Z" fill="#556070"/>
<path d="M2.3 2.5 L9.3 3.4 L9.3 15.5 L2.3 14.2 Z" fill="url(#svf)" stroke="#44505e" stroke-width="0.7"/>
<path d="M9.3 3.4 L13.8 1.8 L13.8 12.8 L9.3 15.5 Z" fill="url(#svs)" stroke="#3a4450" stroke-width="0.6"/>
<path d="M2.5 1.8 C4 0.2 12 0 13.8 1.6 L9.3 3.2 Z" fill="#c8d0d8" stroke="#6a7480" stroke-width="0.5"/>
<path d="M3.2 5.5 L8.5 6.1 M3.2 7.8 L8.5 8.4 M3.2 10.1 L8.5 10.7" stroke="#a8dcff" stroke-width="0.8"/>
<path d="M3 12.2 L8.8 13.2 L8.8 15 L3 14 Z" fill="#dfe6ec"/></svg>
<div class="t" style="left:394px;top:122px;font-size:12px;color:#333;font-weight:normal;">localhost_1</div>
<svg style="position:absolute;left:463px;top:125px" width="8" height="5" viewBox="0 0 8 5"><path d="M0 0 H8 L4 4.5 Z" fill="#111"/></svg>
<svg style="position:absolute;left:485px;top:120px" width="15" height="17" viewBox="0 0 15 17">
<defs><linearGradient id="dbg" x1="0" x2="1"><stop offset="0" stop-color="#d8e2ea"/><stop offset="0.3" stop-color="#f4f8fb"/><stop offset="0.75" stop-color="#7c8a96"/><stop offset="1" stop-color="#b8c4ce"/></linearGradient></defs>
<path d="M0.8 2.5 C0.8 0.3 13.8 0.3 13.8 2.5 V14 C13.8 16.6 0.8 16.6 0.8 14 Z" fill="url(#dbg)" stroke="#5f6a74" stroke-width="0.9"/>
<path d="M1 5.3 C3 6.8 11.5 6.8 13.6 5.3 M1 8.2 C3 9.7 11.5 9.7 13.6 8.2 M1 11.1 C3 12.6 11.5 12.6 13.6 11.1" stroke="#6a7682" stroke-width="0.8" fill="none"/>
<path d="M1.5 2.5 C3 4 11.5 4 13.2 2.5" stroke="#9aa6b0" stroke-width="0.6" fill="none"/></svg>
<div class="t" style="left:504px;top:122px;font-size:12px;color:#333;font-weight:normal;">wekan</div>
<svg style="position:absolute;left:547px;top:125px" width="8" height="5" viewBox="0 0 8 5"><path d="M0 0 H8 L4 4.5 Z" fill="#111"/></svg>
<svg style="position:absolute;left:1546px;top:119px" width="16" height="17" viewBox="0 0 16 17"><path d="M3 8 V4.5 C3 1.5 8 1.5 8 4.5 V6" stroke="#777" stroke-width="1.5" fill="none"/><rect x="3.5" y="8" width="12" height="8" rx="1.5" fill="#e8c85a" stroke="#a08020" stroke-width="0.8"/><rect x="7" y="10.5" width="5" height="2.5" rx="1" fill="#bbb"/></svg>
<div class="a" style="left:1569px;top:115px;width:1px;height:24px;background:#d0d0d0"></div>
<svg style="position:absolute;left:1577px;top:119px" width="17" height="17" viewBox="0 0 17 17"><path d="M1.5 15.5 L11 6" stroke="#333" stroke-width="2.2"/><path d="M1.5 15.5 L11 6" stroke="#888" stroke-width="0.8"/><path d="M12 1 L13 4 L16 4.5 L13.5 6.5 L14.5 9.5 L12 7.8 L9.5 9.5 L10.5 6.5 L8 4.5 L11 4 Z" fill="#f0d040" stroke="#b09020" stroke-width="0.5"/></svg>
<div class="t" style="left:1596px;top:122px;font-size:12px;color:#444;font-weight:normal;">Query</div>
<svg style="position:absolute;left:1643px;top:119px" width="15" height="17" viewBox="0 0 15 17"><path d="M3 5.5 C3 1 12 1 12 5.5 C12 8.5 8.5 8.5 8.5 11" stroke="#555" stroke-width="2.6" fill="none"/><path d="M3 5.5 C3 1 12 1 12 5.5 C12 8.5 8.5 8.5 8.5 11" stroke="#ddd" stroke-width="1" fill="none"/><circle cx="8.5" cy="14.5" r="1.8" fill="#666"/></svg>
<div class="t" style="left:1662px;top:122px;font-size:12px;color:#444;font-weight:normal;">Explain</div>
<svg style="position:absolute;left:1715px;top:119px" width="16" height="17" viewBox="0 0 16 17"><rect x="1" y="1" width="14" height="15" fill="#fff" stroke="#777"/><path d="M4 4 H9 M5 6.5 H12 M4 9 H8 M5 11.5 H11 M4 14 H7" stroke-width="1.1" stroke="#3a6"/><path d="M5 6.5 H12" stroke="#d33" stroke-width="1.1"/><path d="M5 11.5 H11" stroke="#36c" stroke-width="1.1"/></svg>
<div class="t" style="left:1735px;top:122px;font-size:12px;color:#444;font-weight:normal;">Code</div>
<div class="a" style="left:1770px;top:115px;width:1px;height:24px;background:#d0d0d0"></div>
<svg style="position:absolute;left:1778px;top:119px" width="17" height="17" viewBox="0 0 17 17"><path d="M8 0.8 L10.2 5.6 L15.3 6.1 L11.4 9.5 L12.6 14.6 L8 11.9 L3.4 14.6 L4.6 9.5 L0.7 6.1 L5.8 5.6 Z" fill="#f3d04a" stroke="#b89020" stroke-width="0.7"/><path d="M12.5 9.5 V16 M9.3 12.7 H15.7" stroke="#1a9a1a" stroke-width="2.2"/></svg>
<svg style="position:absolute;left:1806px;top:119px" width="17" height="17" viewBox="0 0 17 17"><path d="M8 0.8 L10.2 5.6 L15.3 6.1 L11.4 9.5 L12.6 14.6 L8 11.9 L3.4 14.6 L4.6 9.5 L0.7 6.1 L5.8 5.6 Z" fill="#f3d04a" stroke="#b89020" stroke-width="0.7"/></svg>
<svg style="position:absolute;left:1829px;top:126px" width="8" height="5" viewBox="0 0 8 5"><path d="M0 0 H8 L4 4.5 Z" fill="#111"/></svg>
<svg style="position:absolute;left:1852px;top:119px" width="17" height="17" viewBox="0 0 17 17"><path d="M4 6 H15 V15 H6 C4 15 4 13 4 13 Z" fill="#e0c090" stroke="#a08050" stroke-width="0.8"/><circle cx="7" cy="6.5" r="5.5" fill="#f4f4f4" stroke="#666" stroke-width="1"/><path d="M7 3.5 V6.5 L9 8" stroke="#444" stroke-width="1" fill="none"/></svg>
<svg style="position:absolute;left:1876px;top:126px" width="8" height="5" viewBox="0 0 8 5"><path d="M0 0 H8 L4 4.5 Z" fill="#111"/></svg>
<svg style="position:absolute;left:1898px;top:119px" width="16" height="16" viewBox="0 0 16 16"><rect x="1" y="1" width="10" height="10" fill="#fff" stroke="#5a8ad0"/><rect x="4" y="4" width="11" height="11" fill="#fff" stroke="#3a6ab0" stroke-width="1.2"/><path d="M7 12 L12 7 M9 7 H12 V10 M7 9 V12 H10" stroke="#2a5aa0" stroke-width="1" fill="none"/></svg>
<div class="a" style="left:369px;top:142px;width:1548px;height:1px;background:#99bce8"></div>
<div class="a" style="left:369px;top:143px;width:41px;height:272px;background:#f5f5f5"></div>
<div class="a" style="left:369px;top:171px;width:41px;height:14px;background:#dcdcdc"></div>
<div class="a" style="left:410px;top:171px;width:1507px;height:14px;background:#eeeeee"></div>
<div class="a" style="left:992px;top:143px;width:1px;height:272px;background:#f4f4f4"></div>
<div class="t" style="left:369px;width:28px;text-align:right;top:144px;height:14px;line-height:14px;font-family:'Liberation Mono', monospace;font-size:12px;color:#333">1</div>
<div class="t" style="left:369px;width:28px;text-align:right;top:158px;height:14px;line-height:14px;font-family:'Liberation Mono', monospace;font-size:12px;color:#333">2</div>
<div class="t" style="left:369px;width:28px;text-align:right;top:172px;height:14px;line-height:14px;font-family:'Liberation Mono', monospace;font-size:12px;color:#333">3</div>
<div class="t" style="left:414px;top:144px;height:14px;line-height:14px;font-family:'Liberation Mono', monospace;font-size:12px;letter-spacing:0.035px;color:#4d4d4c"><span style="color:#8e908c">// Files can be added easily with drag and drop.</span></div>
<div class="t" style="left:414px;top:158px;height:14px;line-height:14px;font-family:'Liberation Mono', monospace;font-size:12px;letter-spacing:0.035px;color:#4d4d4c"><span style="color:#8e908c">// Find by name e.g. db.getCollection("cfs_gridfs.attachments.files").find({filename:/name/i}).sort({_id:-1})</span></div>
<div class="t" style="left:414px;top:172px;height:14px;line-height:14px;font-family:'Liberation Mono', monospace;font-size:12px;letter-spacing:0.035px;color:#4d4d4c"><span style="color:#8959a8">db</span>.<span style="color:#8959a8">getCollection</span>(<span style="color:#718c00">"cfs_gridfs.attachments.files"</span>).<span style="color:#4271ae">find</span>({<span style="outline:1px solid #bbb;outline-offset:-1px">}</span>).<span style="color:#4271ae">sort</span>({<span style="color:#8959a8">_id</span>:<span style="color:#3e999f">-</span><span style="color:#f5871f">1</span>})</div>
<div class="a" style="left:369px;top:415px;width:1548px;height:1px;background:#99bce8"></div>
<div class="a" style="left:369px;top:416px;width:1548px;height:5px;background:#e3ecf9"></div>
<svg style="position:absolute;left:372px;top:430px" width="17" height="17" viewBox="0 0 17 17">
<defs><linearGradient id="gfg" x1="0" x2="1"><stop offset="0" stop-color="#dde5ec"/><stop offset="0.4" stop-color="#f6f9fb"/><stop offset="1" stop-color="#8c98a4"/></linearGradient></defs>
<path d="M0.8 2.2 C0.8 0.2 10.5 0.2 10.5 2.2 V12.5 C10.5 14.5 0.8 14.5 0.8 12.5 Z" fill="url(#gfg)" stroke="#66717c" stroke-width="0.8"/>
<path d="M1 5 C3 6.2 8.5 6.2 10.3 5 M1 8 C3 9.2 8.5 9.2 10.3 8" stroke="#7a8690" stroke-width="0.6" fill="none"/>
<rect x="5.5" y="6" width="11" height="10.5" rx="1.2" fill="#1a1a1a"/>
<rect x="7.3" y="6.8" width="7.4" height="4.2" fill="#cfe3f5"/>
<rect x="8.5" y="12.5" width="5" height="4" fill="#d8d8d8"/><rect x="9.5" y="13.2" width="1.5" height="2.5" fill="#222"/></svg>
<div class="t" style="left:393px;top:432px;font-size:12px;color:#222;font-weight:normal;">cfs_gridfs.attachments.files</div>
<svg style="position:absolute;left:545px;top:430px" width="16" height="17" viewBox="0 0 16 17"><path d="M1 2.5 C1 0.5 12 0.5 12 2.5 V13.5 C12 15.5 1 15.5 1 13.5 Z" fill="#d8dee4" stroke="#777" stroke-width="0.8"/><circle cx="11.5" cy="12" r="4" fill="#f4f4f4" stroke="#777" stroke-width="0.8"/><path d="M11.5 10 V12 L13 13" stroke="#555" stroke-width="0.8" fill="none"/></svg>
<div class="t" style="left:566px;top:432px;font-size:12px;color:#222;font-weight:normal;">0.488 s</div>
<svg style="position:absolute;left:613px;top:432px" width="17" height="13" viewBox="0 0 17 13"><defs><linearGradient id="fag" x1="0" x2="0" y1="0" y2="1"><stop offset="0" stop-color="#9ae070"/><stop offset="1" stop-color="#3a9a20"/></linearGradient></defs><path d="M1 10 L3 12.5 L11 6.5 L12.5 9 L16 1 L7.5 1.5 L9.5 3.8 Z" fill="url(#fag)" stroke="#2a7a18" stroke-width="0.8" stroke-linejoin="round"/></svg>
<div class="t" style="left:634px;top:433px;font-size:12px;color:#555;font-weight:normal;">Fetch Count</div>
<svg style="position:absolute;left:1309px;top:430px" width="16" height="17" viewBox="0 0 16 17"><rect x="1" y="6.5" width="4.5" height="4.5" rx="0.8" fill="#a8c8e8" stroke="#5a7a9a" stroke-width="0.8"/><circle cx="12" cy="3" r="2" fill="#d8eaf8" stroke="#5a7a9a" stroke-width="0.9"/><circle cx="12" cy="8.7" r="2" fill="#d8eaf8" stroke="#5a7a9a" stroke-width="0.9"/><circle cx="12" cy="14.4" r="2" fill="#d8eaf8" stroke="#5a7a9a" stroke-width="0.9"/><path d="M5.5 8.7 H10 M7.5 3 V14.4 M7.5 3 H10 M7.5 14.4 H10" stroke="#4a6a8a" fill="none" stroke-width="0.9"/></svg>
<div class="a" style="left:1331px;top:426px;width:1px;height:24px;background:#d0d0d0"></div>
<div class="a" style="left:1481px;top:426px;width:1px;height:24px;background:#d0d0d0"></div>
<div class="a" style="left:1553px;top:426px;width:1px;height:24px;background:#d0d0d0"></div>
<div class="a" style="left:1687px;top:426px;width:1px;height:24px;background:#d0d0d0"></div>
<svg style="position:absolute;left:1341px;top:430px" width="17" height="17" viewBox="0 0 17 17"><path d="M1.5 0.5 H9 L12.5 4 V15.5 H1.5 Z" fill="#fbfbfb" stroke="#a4a4a4" stroke-width="0.8"/><path d="M9 0.5 V4 H12.5" fill="#eee" stroke="#b0b0b0" stroke-width="0.6"/><path d="M3 6.5 H10.5 M3 8.5 H10.5 M3 10.5 H10.5 M3 12.5 H8" stroke="#d4d4d4" stroke-width="0.9"/><circle cx="7.5" cy="9" r="3.3" fill="#e2f0fb" stroke="#333" stroke-width="1.2"/><path d="M10 11.5 L13.5 15" stroke="#b07a30" stroke-width="2"/></svg>
<svg style="position:absolute;left:1365px;top:430px" width="17" height="17" viewBox="0 0 17 17"><rect x="0.5" y="1" width="16" height="15" rx="1.5" fill="#1e1e1e"/><rect x="2.5" y="2.5" width="12" height="5" fill="#dce8f4"/><rect x="2.5" y="3" width="12" height="0.8" fill="#9ac"/><rect x="5.5" y="6.5" width="9.5" height="6" fill="#e8e8e8"/><path d="M6.5 8 H8 M7.2 8 V11 M6.5 11 H8" stroke="#333" stroke-width="0.7"/></svg>
<svg style="position:absolute;left:1393px;top:430px" width="17" height="17" viewBox="0 0 17 17"><path d="M1.5 0.5 H9 L12.5 4 V15.5 H1.5 Z" fill="#fbfbfb" stroke="#a4a4a4" stroke-width="0.8"/><path d="M9 0.5 V4 H12.5" fill="#eee" stroke="#b0b0b0" stroke-width="0.6"/><path d="M3 6.5 H10.5 M3 8.5 H10.5 M3 10.5 H10.5 M3 12.5 H8" stroke="#d4d4d4" stroke-width="0.9"/><path d="M10 8.5 V16.5 M6 12.5 H14" stroke="#1a9a1a" stroke-width="2.4"/><path d="M10 8.5 V16.5 M6 12.5 H14" stroke="#5ad040" stroke-width="1"/></svg>
<svg style="position:absolute;left:1415px;top:437px" width="8" height="5" viewBox="0 0 8 5"><path d="M0 0 H8 L4 4.5 Z" fill="#111"/></svg>
<svg style="position:absolute;left:1434px;top:430px" width="17" height="17" viewBox="0 0 17 17"><path d="M1.5 0.5 H9 L12.5 4 V15.5 H1.5 Z" fill="#fbfbfb" stroke="#a4a4a4" stroke-width="0.8"/><path d="M9 0.5 V4 H12.5" fill="#eee" stroke="#b0b0b0" stroke-width="0.6"/><path d="M3 6.5 H10.5 M3 8.5 H10.5 M3 10.5 H10.5 M3 12.5 H8" stroke="#d4d4d4" stroke-width="0.9"/><path d="M4.5 15.5 L5.2 12.5 L13.5 4.5 L15.5 6.5 L7.5 14.5 Z" fill="#f0c040" stroke="#806020" stroke-width="0.6"/><path d="M13.5 4.5 L15.5 6.5 L16.3 5.5 L14.5 3.7 Z" fill="#e06060"/></svg>
<svg style="position:absolute;left:1460px;top:430px" width="17" height="17" viewBox="0 0 17 17"><path d="M1.5 0.5 H9 L12.5 4 V15.5 H1.5 Z" fill="#fbfbfb" stroke="#a4a4a4" stroke-width="0.8"/><path d="M9 0.5 V4 H12.5" fill="#eee" stroke="#b0b0b0" stroke-width="0.6"/><path d="M3 6.5 H10.5 M3 8.5 H10.5 M3 10.5 H10.5 M3 12.5 H8" stroke="#d4d4d4" stroke-width="0.9"/><path d="M7.5 8.5 L14.5 15.5 M14.5 8.5 L7.5 15.5" stroke="#d01818" stroke-width="2.2"/></svg>
<div class="a" style="left:1493px;top:428px;width:53px;height:20px;background:#dcdcdc;border:1.5px solid #111"></div>
<div class="t" style="left:1500px;top:432px;font-size:12px;color:#222;font-weight:normal;">20</div>
<svg style="position:absolute;left:1533px;top:434px" width="8" height="8" viewBox="0 0 8 8"><path d="M0 1 H8 L4 7 Z" fill="#111"/></svg>
<svg style="position:absolute;left:1565px;top:434px" width="9" height="11" viewBox="0 0 9 11"><rect x="0" y="0" width="1.8" height="10" fill="#8cc4f2"/><path d="M8.5 0 L2.5 5 L8.5 10 Z" fill="#8cc4f2"/></svg>
<svg style="position:absolute;left:1592px;top:434px" width="7" height="11" viewBox="0 0 7 11"><path d="M6.5 0 L0.5 5 L6.5 10 Z" fill="#8cc4f2"/></svg>
<svg style="position:absolute;left:1618px;top:434px" width="7" height="11" viewBox="0 0 7 11"><path d="M0.5 0 L6.5 5 L0.5 10 Z" fill="#1e8ae6"/></svg>
<svg style="position:absolute;left:1643px;top:434px" width="9" height="11" viewBox="0 0 9 11"><path d="M0.5 0 L6.5 5 L0.5 10 Z" fill="#1e8ae6"/><rect x="7" y="0" width="1.8" height="10" fill="#1e8ae6"/></svg>
<svg style="position:absolute;left:1667px;top:432px" width="12" height="13" viewBox="0 0 12 13"><path d="M9.6 5 A4.3 4.3 0 1 1 6 2.6" stroke="#1e8ae6" stroke-width="1.7" fill="none"/><path d="M5 0 L9.5 2.6 L5.5 5.5 Z" fill="#1e8ae6"/></svg>
<div class="t" style="left:1696px;top:432px;font-size:12px;color:#222;font-weight:normal;">p.</div>
<div class="a" style="left:1709px;top:428px;width:30px;height:20px;background:#fff;border:1px solid #8fb2e0"></div>
<div class="t" style="left:1713px;top:432px;font-size:12px;color:#222;font-weight:normal;">1</div>
<div class="t" style="left:1747px;top:432px;font-size:12px;color:#222;font-weight:normal;">1 - 20</div>
<div class="a" style="left:1784px;top:429px;width:58px;height:19px;background:#dcdcdc;border:1.5px solid #111"></div>
<div class="t" style="left:1789px;top:432px;font-size:12px;color:#222;font-weight:normal;">GridFs</div>
<svg style="position:absolute;left:1829px;top:433px" width="8" height="8" viewBox="0 0 8 8"><path d="M0 1 H8 L4 7 Z" fill="#111"/></svg>
<svg style="position:absolute;left:1850px;top:430px" width="17" height="17" viewBox="0 0 17 17"><circle cx="8.5" cy="8.5" r="6" fill="#aab4bd" stroke="#6c7680" stroke-width="2.5" stroke-dasharray="2 1.4"/><circle cx="8.5" cy="8.5" r="2.5" fill="#fff" stroke="#777" stroke-width="0.7"/></svg>
<svg style="position:absolute;left:1873px;top:437px" width="8" height="5" viewBox="0 0 8 5"><path d="M0 0 H8 L4 4.5 Z" fill="#111"/></svg>
<svg style="position:absolute;left:1895px;top:430px" width="16" height="16" viewBox="0 0 16 16"><rect x="1" y="1" width="10" height="10" fill="#fff" stroke="#5a8ad0"/><rect x="4" y="4" width="11" height="11" fill="#fff" stroke="#3a6ab0" stroke-width="1.2"/><path d="M7 12 L12 7 M9 7 H12 V10 M7 9 V12 H10" stroke="#2a5aa0" stroke-width="1" fill="none"/></svg>
<div class="a" style="left:369px;top:452px;width:1548px;height:1px;background:#99bce8"></div>
<div class="a" style="left:369px;top:453px;width:1489px;height:25px;background:linear-gradient(#f7f7f7,#ececec);border-bottom:1px solid #d4d4d4"></div>
<div class="a" style="left:398px;top:453px;width:1px;height:25px;border-left:1px dotted #c8c8c8"></div>
<div class="a" style="left:428px;top:453px;width:1px;height:25px;border-left:1px dotted #c8c8c8"></div>
<div class="a" style="left:973px;top:453px;width:1px;height:25px;border-left:1px dotted #c8c8c8"></div>
<div class="a" style="left:1150px;top:453px;width:1px;height:25px;border-left:1px dotted #c8c8c8"></div>
<div class="a" style="left:1327px;top:453px;width:1px;height:25px;border-left:1px dotted #c8c8c8"></div>
<div class="a" style="left:1504px;top:453px;width:1px;height:25px;border-left:1px dotted #c8c8c8"></div>
<div class="a" style="left:1681px;top:453px;width:1px;height:25px;border-left:1px dotted #c8c8c8"></div>
<div class="a" style="left:1858px;top:453px;width:1px;height:25px;border-left:1px dotted #c8c8c8"></div>
<svg style="position:absolute;left:407px;top:460px" width="8" height="10" viewBox="0 0 8 10"><path d="M4 0 L8 4 H0 Z M4 10 L8 6 H0 Z" fill="#bdbdbd"/></svg>
<div class="t" style="left:433px;top:459px;font-size:12px;color:#222;font-weight:normal;">filename</div>
<svg style="position:absolute;left:482px;top:460px" width="8" height="10" viewBox="0 0 8 10"><path d="M4 0 L8 4 H0 Z M4 10 L8 6 H0 Z" fill="#bdbdbd"/></svg>
<div class="t" style="left:978px;top:459px;font-size:12px;color:#222;font-weight:normal;">length</div>
<svg style="position:absolute;left:1015px;top:460px" width="8" height="10" viewBox="0 0 8 10"><path d="M4 0 L8 4 H0 Z M4 10 L8 6 H0 Z" fill="#bdbdbd"/></svg>
<div class="t" style="left:1155px;top:459px;font-size:12px;color:#222;font-weight:normal;">contentType</div>
<svg style="position:absolute;left:1224px;top:460px" width="8" height="10" viewBox="0 0 8 10"><path d="M4 0 L8 4 H0 Z M4 10 L8 6 H0 Z" fill="#bdbdbd"/></svg>
<div class="t" style="left:1332px;top:459px;font-size:12px;color:#222;font-weight:normal;">uploadDate</div>
<svg style="position:absolute;left:1397px;top:460px" width="8" height="10" viewBox="0 0 8 10"><path d="M4 0 L8 4 H0 Z M4 10 L8 6 H0 Z" fill="#bdbdbd"/></svg>
<div class="t" style="left:1509px;top:459px;font-size:12px;color:#222;font-weight:normal;">md5</div>
<svg style="position:absolute;left:1536px;top:460px" width="8" height="10" viewBox="0 0 8 10"><path d="M4 0 L8 4 H0 Z M4 10 L8 6 H0 Z" fill="#bdbdbd"/></svg>
<div class="t" style="left:1686px;top:459px;font-size:12px;color:#222;font-weight:normal;">metadata</div>
<svg style="position:absolute;left:1740px;top:460px" width="8" height="10" viewBox="0 0 8 10"><path d="M4 0 L8 4 H0 Z M4 10 L8 6 H0 Z" fill="#bdbdbd"/></svg>
<div class="a" style="left:369px;top:478px;width:1489px;height:25px;background:#fde08f;border-bottom:1px dotted #d0d0d0"></div>
<div class="a" style="left:369px;top:478px;width:29px;height:25px;background:linear-gradient(#f8f8f8,#ebebeb);border-bottom:1px dotted #f2d890"></div>
<div class="t" style="left:369px;width:29px;text-align:center;top:484px;font-size:12px;color:#222">1</div>
<div class="a" style="left:398px;top:478px;width:1px;height:25px;border-left:1px dotted #d4d4d4"></div>
<div class="a" style="left:428px;top:478px;width:1px;height:25px;border-left:1px dotted #d4d4d4"></div>
<div class="a" style="left:973px;top:478px;width:1px;height:25px;border-left:1px dotted #d4d4d4"></div>
<div class="a" style="left:1150px;top:478px;width:1px;height:25px;border-left:1px dotted #d4d4d4"></div>
<div class="a" style="left:1327px;top:478px;width:1px;height:25px;border-left:1px dotted #d4d4d4"></div>
<div class="a" style="left:1504px;top:478px;width:1px;height:25px;border-left:1px dotted #d4d4d4"></div>
<div class="a" style="left:1681px;top:478px;width:1px;height:25px;border-left:1px dotted #d4d4d4"></div>
<div class="a" style="left:1858px;top:478px;width:1px;height:25px;border-left:1px dotted #d4d4d4"></div>
<svg style="position:absolute;left:407px;top:482px" width="15" height="16" viewBox="0 0 15 16"><path d="M1.5 0.5 H9.5 L12.5 3.5 V15.5 H1.5 Z" fill="#fff" stroke="#8a96a4" stroke-width="0.9"/><path d="M9.5 0.5 V3.5 H12.5" fill="#e8eef4" stroke="#aab" stroke-width="0.5"/><path d="M3 6 H6 M3 8 H5 M3 12 H6 M3 14 H10" stroke="#c8c8c8" stroke-width="0.8"/><circle cx="8.2" cy="9.2" r="3.1" fill="#e4f0fb" stroke="#2a2a2a" stroke-width="1.2"/><path d="M10.6 11.6 L14 15" stroke="#a87830" stroke-width="2.2"/></svg>
<div class="t" style="left:433px;top:482px;width:540px;height:17px;line-height:17px;overflow:hidden;font-size:12px;color:#111">Install_Linux.jpg</div>
<div class="t" style="left:978px;top:482px;width:172px;height:17px;line-height:17px;overflow:hidden;font-size:12px;color:#111">0.38MB</div>
<div class="t" style="left:1155px;top:482px;width:172px;height:17px;line-height:17px;overflow:hidden;font-size:12px;color:#111">image/jpeg</div>
<div class="t" style="left:1332px;top:482px;width:172px;height:17px;line-height:17px;overflow:hidden;font-size:12px;color:#111">16.11.2018 klo 1.38.50</div>
<div class="t" style="left:1509px;top:482px;width:172px;height:17px;line-height:17px;overflow:hidden;font-size:12px;color:#111">98d80c565f03f921fe4b730af58f8a2c</div>
<div class="t" style="left:1686px;top:482px;width:172px;height:17px;line-height:17px;overflow:hidden;font-size:12px;color:#111">null</div>
<div class="a" style="left:369px;top:503px;width:1489px;height:25px;background:#fafafa;border-bottom:1px dotted #d0d0d0"></div>
<div class="a" style="left:369px;top:503px;width:29px;height:25px;background:linear-gradient(#f8f8f8,#ebebeb);border-bottom:1px dotted #d0d0d0"></div>
<div class="t" style="left:369px;width:29px;text-align:center;top:509px;font-size:12px;color:#222">2</div>
<div class="a" style="left:398px;top:503px;width:1px;height:25px;border-left:1px dotted #d4d4d4"></div>
<div class="a" style="left:428px;top:503px;width:1px;height:25px;border-left:1px dotted #d4d4d4"></div>
<div class="a" style="left:973px;top:503px;width:1px;height:25px;border-left:1px dotted #d4d4d4"></div>
<div class="a" style="left:1150px;top:503px;width:1px;height:25px;border-left:1px dotted #d4d4d4"></div>
<div class="a" style="left:1327px;top:503px;width:1px;height:25px;border-left:1px dotted #d4d4d4"></div>
<div class="a" style="left:1504px;top:503px;width:1px;height:25px;border-left:1px dotted #d4d4d4"></div>
<div class="a" style="left:1681px;top:503px;width:1px;height:25px;border-left:1px dotted #d4d4d4"></div>
<div class="a" style="left:1858px;top:503px;width:1px;height:25px;border-left:1px dotted #d4d4d4"></div>
<svg style="position:absolute;left:407px;top:507px" width="15" height="16" viewBox="0 0 15 16"><path d="M1.5 0.5 H9.5 L12.5 3.5 V15.5 H1.5 Z" fill="#fff" stroke="#8a96a4" stroke-width="0.9"/><path d="M9.5 0.5 V3.5 H12.5" fill="#e8eef4" stroke="#aab" stroke-width="0.5"/><path d="M3 6 H6 M3 8 H5 M3 12 H6 M3 14 H10" stroke="#c8c8c8" stroke-width="0.8"/><circle cx="8.2" cy="9.2" r="3.1" fill="#e4f0fb" stroke="#2a2a2a" stroke-width="1.2"/><path d="M10.6 11.6 L14 15" stroke="#a87830" stroke-width="2.2"/></svg>
<div class="t" style="left:433px;top:507px;width:540px;height:17px;line-height:17px;overflow:hidden;font-size:12px;color:#111">owncloud.png</div>
<div class="t" style="left:978px;top:507px;width:172px;height:17px;line-height:17px;overflow:hidden;font-size:12px;color:#111">33.3KB</div>
<div class="t" style="left:1155px;top:507px;width:172px;height:17px;line-height:17px;overflow:hidden;font-size:12px;color:#111">image/png</div>
<div class="t" style="left:1332px;top:507px;width:172px;height:17px;line-height:17px;overflow:hidden;font-size:12px;color:#111">5.11.2018 klo 14.49.05</div>
<div class="t" style="left:1509px;top:507px;width:172px;height:17px;line-height:17px;overflow:hidden;font-size:12px;color:#111">cbc3a891b6348ed2f29cb7d13961a2c0</div>
<div class="t" style="left:1686px;top:507px;width:172px;height:17px;line-height:17px;overflow:hidden;font-size:12px;color:#111">null</div>
<div class="a" style="left:369px;top:528px;width:1489px;height:25px;background:#fff;border-bottom:1px dotted #d0d0d0"></div>
<div class="a" style="left:369px;top:528px;width:29px;height:25px;background:linear-gradient(#f8f8f8,#ebebeb);border-bottom:1px dotted #d0d0d0"></div>
<div class="t" style="left:369px;width:29px;text-align:center;top:534px;font-size:12px;color:#222">3</div>
<div class="a" style="left:398px;top:528px;width:1px;height:25px;border-left:1px dotted #d4d4d4"></div>
<div class="a" style="left:428px;top:528px;width:1px;height:25px;border-left:1px dotted #d4d4d4"></div>
<div class="a" style="left:973px;top:528px;width:1px;height:25px;border-left:1px dotted #d4d4d4"></div>
<div class="a" style="left:1150px;top:528px;width:1px;height:25px;border-left:1px dotted #d4d4d4"></div>
<div class="a" style="left:1327px;top:528px;width:1px;height:25px;border-left:1px dotted #d4d4d4"></div>
<div class="a" style="left:1504px;top:528px;width:1px;height:25px;border-left:1px dotted #d4d4d4"></div>
<div class="a" style="left:1681px;top:528px;width:1px;height:25px;border-left:1px dotted #d4d4d4"></div>
<div class="a" style="left:1858px;top:528px;width:1px;height:25px;border-left:1px dotted #d4d4d4"></div>
<svg style="position:absolute;left:407px;top:532px" width="15" height="16" viewBox="0 0 15 16"><path d="M1.5 0.5 H9.5 L12.5 3.5 V15.5 H1.5 Z" fill="#fff" stroke="#8a96a4" stroke-width="0.9"/><path d="M9.5 0.5 V3.5 H12.5" fill="#e8eef4" stroke="#aab" stroke-width="0.5"/><path d="M3 6 H6 M3 8 H5 M3 12 H6 M3 14 H10" stroke="#c8c8c8" stroke-width="0.8"/><circle cx="8.2" cy="9.2" r="3.1" fill="#e4f0fb" stroke="#2a2a2a" stroke-width="1.2"/><path d="M10.6 11.6 L14 15" stroke="#a87830" stroke-width="2.2"/></svg>
<div class="t" style="left:433px;top:532px;width:540px;height:17px;line-height:17px;overflow:hidden;font-size:12px;color:#111">IMG_20180709_080719.jpg</div>
<div class="t" style="left:978px;top:532px;width:172px;height:17px;line-height:17px;overflow:hidden;font-size:12px;color:#111">3.0MB</div>
<div class="t" style="left:1155px;top:532px;width:172px;height:17px;line-height:17px;overflow:hidden;font-size:12px;color:#111">image/jpeg</div>
<div class="t" style="left:1332px;top:532px;width:172px;height:17px;line-height:17px;overflow:hidden;font-size:12px;color:#111">7.8.2018 klo 0.34.02</div>
<div class="t" style="left:1509px;top:532px;width:172px;height:17px;line-height:17px;overflow:hidden;font-size:12px;color:#111">f2711e9661a1818e848c91bf99b4c2d1</div>
<div class="t" style="left:1686px;top:532px;width:172px;height:17px;line-height:17px;overflow:hidden;font-size:12px;color:#111">null</div>
<div class="a" style="left:369px;top:553px;width:1489px;height:25px;background:#fafafa;border-bottom:1px dotted #d0d0d0"></div>
<div class="a" style="left:369px;top:553px;width:29px;height:25px;background:linear-gradient(#f8f8f8,#ebebeb);border-bottom:1px dotted #d0d0d0"></div>
<div class="t" style="left:369px;width:29px;text-align:center;top:559px;font-size:12px;color:#222">4</div>
<div class="a" style="left:398px;top:553px;width:1px;height:25px;border-left:1px dotted #d4d4d4"></div>
<div class="a" style="left:428px;top:553px;width:1px;height:25px;border-left:1px dotted #d4d4d4"></div>
<div class="a" style="left:973px;top:553px;width:1px;height:25px;border-left:1px dotted #d4d4d4"></div>
<div class="a" style="left:1150px;top:553px;width:1px;height:25px;border-left:1px dotted #d4d4d4"></div>
<div class="a" style="left:1327px;top:553px;width:1px;height:25px;border-left:1px dotted #d4d4d4"></div>
<div class="a" style="left:1504px;top:553px;width:1px;height:25px;border-left:1px dotted #d4d4d4"></div>
<div class="a" style="left:1681px;top:553px;width:1px;height:25px;border-left:1px dotted #d4d4d4"></div>
<div class="a" style="left:1858px;top:553px;width:1px;height:25px;border-left:1px dotted #d4d4d4"></div>
<svg style="position:absolute;left:407px;top:557px" width="15" height="16" viewBox="0 0 15 16"><path d="M1.5 0.5 H9.5 L12.5 3.5 V15.5 H1.5 Z" fill="#fff" stroke="#8a96a4" stroke-width="0.9"/><path d="M9.5 0.5 V3.5 H12.5" fill="#e8eef4" stroke="#aab" stroke-width="0.5"/><path d="M3 6 H6 M3 8 H5 M3 12 H6 M3 14 H10" stroke="#c8c8c8" stroke-width="0.8"/><circle cx="8.2" cy="9.2" r="3.1" fill="#e4f0fb" stroke="#2a2a2a" stroke-width="1.2"/><path d="M10.6 11.6 L14 15" stroke="#a87830" stroke-width="2.2"/></svg>
<div class="t" style="left:433px;top:557px;width:540px;height:17px;line-height:17px;overflow:hidden;font-size:12px;color:#111">Screenshot_20180710-113714.jpg</div>
<div class="t" style="left:978px;top:557px;width:172px;height:17px;line-height:17px;overflow:hidden;font-size:12px;color:#111">0.28MB</div>
<div class="t" style="left:1155px;top:557px;width:172px;height:17px;line-height:17px;overflow:hidden;font-size:12px;color:#111">image/jpeg</div>
<div class="t" style="left:1332px;top:557px;width:172px;height:17px;line-height:17px;overflow:hidden;font-size:12px;color:#111">7.8.2018 klo 0.33.06</div>
<div class="t" style="left:1509px;top:557px;width:172px;height:17px;line-height:17px;overflow:hidden;font-size:12px;color:#111">b1e6bac0a0d7eea800790a7d47a1c3e2</div>
<div class="t" style="left:1686px;top:557px;width:172px;height:17px;line-height:17px;overflow:hidden;font-size:12px;color:#111">null</div>
<div class="a" style="left:369px;top:578px;width:1489px;height:25px;background:#fff;border-bottom:1px dotted #d0d0d0"></div>
<div class="a" style="left:369px;top:578px;width:29px;height:25px;background:linear-gradient(#f8f8f8,#ebebeb);border-bottom:1px dotted #d0d0d0"></div>
<div class="t" style="left:369px;width:29px;text-align:center;top:584px;font-size:12px;color:#222">5</div>
<div class="a" style="left:398px;top:578px;width:1px;height:25px;border-left:1px dotted #d4d4d4"></div>
<div class="a" style="left:428px;top:578px;width:1px;height:25px;border-left:1px dotted #d4d4d4"></div>
<div class="a" style="left:973px;top:578px;width:1px;height:25px;border-left:1px dotted #d4d4d4"></div>
<div class="a" style="left:1150px;top:578px;width:1px;height:25px;border-left:1px dotted #d4d4d4"></div>
<div class="a" style="left:1327px;top:578px;width:1px;height:25px;border-left:1px dotted #d4d4d4"></div>
<div class="a" style="left:1504px;top:578px;width:1px;height:25px;border-left:1px dotted #d4d4d4"></div>
<div class="a" style="left:1681px;top:578px;width:1px;height:25px;border-left:1px dotted #d4d4d4"></div>
<div class="a" style="left:1858px;top:578px;width:1px;height:25px;border-left:1px dotted #d4d4d4"></div>
<svg style="position:absolute;left:407px;top:582px" width="15" height="16" viewBox="0 0 15 16"><path d="M1.5 0.5 H9.5 L12.5 3.5 V15.5 H1.5 Z" fill="#fff" stroke="#8a96a4" stroke-width="0.9"/><path d="M9.5 0.5 V3.5 H12.5" fill="#e8eef4" stroke="#aab" stroke-width="0.5"/><path d="M3 6 H6 M3 8 H5 M3 12 H6 M3 14 H10" stroke="#c8c8c8" stroke-width="0.8"/><circle cx="8.2" cy="9.2" r="3.1" fill="#e4f0fb" stroke="#2a2a2a" stroke-width="1.2"/><path d="M10.6 11.6 L14 15" stroke="#a87830" stroke-width="2.2"/></svg>
<div class="t" style="left:433px;top:582px;width:540px;height:17px;line-height:17px;overflow:hidden;font-size:12px;color:#111">IMG_20170704_105438.jpg</div>
<div class="t" style="left:978px;top:582px;width:172px;height:17px;line-height:17px;overflow:hidden;font-size:12px;color:#111">2.2MB</div>
<div class="t" style="left:1155px;top:582px;width:172px;height:17px;line-height:17px;overflow:hidden;font-size:12px;color:#111">image/jpeg</div>
<div class="t" style="left:1332px;top:582px;width:172px;height:17px;line-height:17px;overflow:hidden;font-size:12px;color:#111">7.8.2018 klo 0.00.18</div>
<div class="t" style="left:1509px;top:582px;width:172px;height:17px;line-height:17px;overflow:hidden;font-size:12px;color:#111">a6d3babc1063bba473a66c9331f2e4d5</div>
<div class="t" style="left:1686px;top:582px;width:172px;height:17px;line-height:17px;overflow:hidden;font-size:12px;color:#111">null</div>
<div class="a" style="left:369px;top:603px;width:1489px;height:25px;background:#fafafa;border-bottom:1px dotted #d0d0d0"></div>
<div class="a" style="left:369px;top:603px;width:29px;height:25px;background:linear-gradient(#f8f8f8,#ebebeb);border-bottom:1px dotted #d0d0d0"></div>
<div class="t" style="left:369px;width:29px;text-align:center;top:609px;font-size:12px;color:#222">6</div>
<div class="a" style="left:398px;top:603px;width:1px;height:25px;border-left:1px dotted #d4d4d4"></div>
<div class="a" style="left:428px;top:603px;width:1px;height:25px;border-left:1px dotted #d4d4d4"></div>
<div class="a" style="left:973px;top:603px;width:1px;height:25px;border-left:1px dotted #d4d4d4"></div>
<div class="a" style="left:1150px;top:603px;width:1px;height:25px;border-left:1px dotted #d4d4d4"></div>
<div class="a" style="left:1327px;top:603px;width:1px;height:25px;border-left:1px dotted #d4d4d4"></div>
<div class="a" style="left:1504px;top:603px;width:1px;height:25px;border-left:1px dotted #d4d4d4"></div>
<div class="a" style="left:1681px;top:603px;width:1px;height:25px;border-left:1px dotted #d4d4d4"></div>
<div class="a" style="left:1858px;top:603px;width:1px;height:25px;border-left:1px dotted #d4d4d4"></div>
<svg style="position:absolute;left:407px;top:607px" width="15" height="16" viewBox="0 0 15 16"><path d="M1.5 0.5 H9.5 L12.5 3.5 V15.5 H1.5 Z" fill="#fff" stroke="#8a96a4" stroke-width="0.9"/><path d="M9.5 0.5 V3.5 H12.5" fill="#e8eef4" stroke="#aab" stroke-width="0.5"/><path d="M3 6 H6 M3 8 H5 M3 12 H6 M3 14 H10" stroke="#c8c8c8" stroke-width="0.8"/><circle cx="8.2" cy="9.2" r="3.1" fill="#e4f0fb" stroke="#2a2a2a" stroke-width="1.2"/><path d="M10.6 11.6 L14 15" stroke="#a87830" stroke-width="2.2"/></svg>
<div class="t" style="left:433px;top:607px;width:540px;height:17px;line-height:17px;overflow:hidden;font-size:12px;color:#111">IMG_20170704_105447.jpg</div>
<div class="t" style="left:978px;top:607px;width:172px;height:17px;line-height:17px;overflow:hidden;font-size:12px;color:#111">2.2MB</div>
<div class="t" style="left:1155px;top:607px;width:172px;height:17px;line-height:17px;overflow:hidden;font-size:12px;color:#111">image/jpeg</div>
<div class="t" style="left:1332px;top:607px;width:172px;height:17px;line-height:17px;overflow:hidden;font-size:12px;color:#111">7.8.2018 klo 0.00.09</div>
<div class="t" style="left:1509px;top:607px;width:172px;height:17px;line-height:17px;overflow:hidden;font-size:12px;color:#111">399c8274fbfb19c818c9af114df8e0a1</div>
<div class="t" style="left:1686px;top:607px;width:172px;height:17px;line-height:17px;overflow:hidden;font-size:12px;color:#111">null</div>
<div class="a" style="left:369px;top:628px;width:1489px;height:25px;background:#fff;border-bottom:1px dotted #d0d0d0"></div>
<div class="a" style="left:369px;top:628px;width:29px;height:25px;background:linear-gradient(#f8f8f8,#ebebeb);border-bottom:1px dotted #d0d0d0"></div>
<div class="t" style="left:369px;width:29px;text-align:center;top:634px;font-size:12px;color:#222">7</div>
<div class="a" style="left:398px;top:628px;width:1px;height:25px;border-left:1px dotted #d4d4d4"></div>
<div class="a" style="left:428px;top:628px;width:1px;height:25px;border-left:1px dotted #d4d4d4"></div>
<div class="a" style="left:973px;top:628px;width:1px;height:25px;border-left:1px dotted #d4d4d4"></div>
<div class="a" style="left:1150px;top:628px;width:1px;height:25px;border-left:1px dotted #d4d4d4"></div>
<div class="a" style="left:1327px;top:628px;width:1px;height:25px;border-left:1px dotted #d4d4d4"></div>
<div class="a" style="left:1504px;top:628px;width:1px;height:25px;border-left:1px dotted #d4d4d4"></div>
<div class="a" style="left:1681px;top:628px;width:1px;height:25px;border-left:1px dotted #d4d4d4"></div>
<div class="a" style="left:1858px;top:628px;width:1px;height:25px;border-left:1px dotted #d4d4d4"></div>
<svg style="position:absolute;left:407px;top:632px" width="15" height="16" viewBox="0 0 15 16"><path d="M1.5 0.5 H9.5 L12.5 3.5 V15.5 H1.5 Z" fill="#fff" stroke="#8a96a4" stroke-width="0.9"/><path d="M9.5 0.5 V3.5 H12.5" fill="#e8eef4" stroke="#aab" stroke-width="0.5"/><path d="M3 6 H6 M3 8 H5 M3 12 H6 M3 14 H10" stroke="#c8c8c8" stroke-width="0.8"/><circle cx="8.2" cy="9.2" r="3.1" fill="#e4f0fb" stroke="#2a2a2a" stroke-width="1.2"/><path d="M10.6 11.6 L14 15" stroke="#a87830" stroke-width="2.2"/></svg>
<div class="t" style="left:433px;top:632px;width:540px;height:17px;line-height:17px;overflow:hidden;font-size:12px;color:#111">IMG_20170822_101746.jpg</div>
<div class="t" style="left:978px;top:632px;width:172px;height:17px;line-height:17px;overflow:hidden;font-size:12px;color:#111">1.9MB</div>
<div class="t" style="left:1155px;top:632px;width:172px;height:17px;line-height:17px;overflow:hidden;font-size:12px;color:#111">image/jpeg</div>
<div class="t" style="left:1332px;top:632px;width:172px;height:17px;line-height:17px;overflow:hidden;font-size:12px;color:#111">6.8.2018 klo 23.57.45</div>
<div class="t" style="left:1509px;top:632px;width:172px;height:17px;line-height:17px;overflow:hidden;font-size:12px;color:#111">471901d156539e2ba3f90c870f8a1b2c</div>
<div class="t" style="left:1686px;top:632px;width:172px;height:17px;line-height:17px;overflow:hidden;font-size:12px;color:#111">null</div>
<div class="a" style="left:369px;top:653px;width:1489px;height:25px;background:#fafafa;border-bottom:1px dotted #d0d0d0"></div>
<div class="a" style="left:369px;top:653px;width:29px;height:25px;background:linear-gradient(#f8f8f8,#ebebeb);border-bottom:1px dotted #d0d0d0"></div>
<div class="t" style="left:369px;width:29px;text-align:center;top:659px;font-size:12px;color:#222">8</div>
<div class="a" style="left:398px;top:653px;width:1px;height:25px;border-left:1px dotted #d4d4d4"></div>
<div class="a" style="left:428px;top:653px;width:1px;height:25px;border-left:1px dotted #d4d4d4"></div>
<div class="a" style="left:973px;top:653px;width:1px;height:25px;border-left:1px dotted #d4d4d4"></div>
<div class="a" style="left:1150px;top:653px;width:1px;height:25px;border-left:1px dotted #d4d4d4"></div>
<div class="a" style="left:1327px;top:653px;width:1px;height:25px;border-left:1px dotted #d4d4d4"></div>
<div class="a" style="left:1504px;top:653px;width:1px;height:25px;border-left:1px dotted #d4d4d4"></div>
<div class="a" style="left:1681px;top:653px;width:1px;height:25px;border-left:1px dotted #d4d4d4"></div>
<div class="a" style="left:1858px;top:653px;width:1px;height:25px;border-left:1px dotted #d4d4d4"></div>
<svg style="position:absolute;left:407px;top:657px" width="15" height="16" viewBox="0 0 15 16"><path d="M1.5 0.5 H9.5 L12.5 3.5 V15.5 H1.5 Z" fill="#fff" stroke="#8a96a4" stroke-width="0.9"/><path d="M9.5 0.5 V3.5 H12.5" fill="#e8eef4" stroke="#aab" stroke-width="0.5"/><path d="M3 6 H6 M3 8 H5 M3 12 H6 M3 14 H10" stroke="#c8c8c8" stroke-width="0.8"/><circle cx="8.2" cy="9.2" r="3.1" fill="#e4f0fb" stroke="#2a2a2a" stroke-width="1.2"/><path d="M10.6 11.6 L14 15" stroke="#a87830" stroke-width="2.2"/></svg>
<div class="t" style="left:433px;top:657px;width:540px;height:17px;line-height:17px;overflow:hidden;font-size:12px;color:#111">IMG_20170822_100736.jpg</div>
<div class="t" style="left:978px;top:657px;width:172px;height:17px;line-height:17px;overflow:hidden;font-size:12px;color:#111">2.3MB</div>
<div class="t" style="left:1155px;top:657px;width:172px;height:17px;line-height:17px;overflow:hidden;font-size:12px;color:#111">image/jpeg</div>
<div class="t" style="left:1332px;top:657px;width:172px;height:17px;line-height:17px;overflow:hidden;font-size:12px;color:#111">6.8.2018 klo 23.57.37</div>
<div class="t" style="left:1509px;top:657px;width:172px;height:17px;line-height:17px;overflow:hidden;font-size:12px;color:#111">be9d56c72bdeae1b784d2bd215a3c4d5</div>
<div class="t" style="left:1686px;top:657px;width:172px;height:17px;line-height:17px;overflow:hidden;font-size:12px;color:#111">null</div>
<div class="a" style="left:369px;top:678px;width:1489px;height:25px;background:#fff;border-bottom:1px dotted #d0d0d0"></div>
<div class="a" style="left:369px;top:678px;width:29px;height:25px;background:linear-gradient(#f8f8f8,#ebebeb);border-bottom:1px dotted #d0d0d0"></div>
<div class="t" style="left:369px;width:29px;text-align:center;top:684px;font-size:12px;color:#222">9</div>
<div class="a" style="left:398px;top:678px;width:1px;height:25px;border-left:1px dotted #d4d4d4"></div>
<div class="a" style="left:428px;top:678px;width:1px;height:25px;border-left:1px dotted #d4d4d4"></div>
<div class="a" style="left:973px;top:678px;width:1px;height:25px;border-left:1px dotted #d4d4d4"></div>
<div class="a" style="left:1150px;top:678px;width:1px;height:25px;border-left:1px dotted #d4d4d4"></div>
<div class="a" style="left:1327px;top:678px;width:1px;height:25px;border-left:1px dotted #d4d4d4"></div>
<div class="a" style="left:1504px;top:678px;width:1px;height:25px;border-left:1px dotted #d4d4d4"></div>
<div class="a" style="left:1681px;top:678px;width:1px;height:25px;border-left:1px dotted #d4d4d4"></div>
<div class="a" style="left:1858px;top:678px;width:1px;height:25px;border-left:1px dotted #d4d4d4"></div>
<svg style="position:absolute;left:407px;top:682px" width="15" height="16" viewBox="0 0 15 16"><path d="M1.5 0.5 H9.5 L12.5 3.5 V15.5 H1.5 Z" fill="#fff" stroke="#8a96a4" stroke-width="0.9"/><path d="M9.5 0.5 V3.5 H12.5" fill="#e8eef4" stroke="#aab" stroke-width="0.5"/><path d="M3 6 H6 M3 8 H5 M3 12 H6 M3 14 H10" stroke="#c8c8c8" stroke-width="0.8"/><circle cx="8.2" cy="9.2" r="3.1" fill="#e4f0fb" stroke="#2a2a2a" stroke-width="1.2"/><path d="M10.6 11.6 L14 15" stroke="#a87830" stroke-width="2.2"/></svg>
<div class="t" style="left:433px;top:682px;width:540px;height:17px;line-height:17px;overflow:hidden;font-size:12px;color:#111">2016-04-29-solving-problems.pdf</div>
<div class="t" style="left:978px;top:682px;width:172px;height:17px;line-height:17px;overflow:hidden;font-size:12px;color:#111">4.5MB</div>
<div class="t" style="left:1155px;top:682px;width:172px;height:17px;line-height:17px;overflow:hidden;font-size:12px;color:#111">application/pdf</div>
<div class="t" style="left:1332px;top:682px;width:172px;height:17px;line-height:17px;overflow:hidden;font-size:12px;color:#111">6.8.2018 klo 23.51.21</div>
<div class="t" style="left:1509px;top:682px;width:172px;height:17px;line-height:17px;overflow:hidden;font-size:12px;color:#111">8da73a8df28ea7c2dda92d88f0c1a2b3</div>
<div class="t" style="left:1686px;top:682px;width:172px;height:17px;line-height:17px;overflow:hidden;font-size:12px;color:#111">null</div>
<div class="a" style="left:369px;top:703px;width:1489px;height:25px;background:#fafafa;border-bottom:1px dotted #d0d0d0"></div>
<div class="a" style="left:369px;top:703px;width:29px;height:25px;background:linear-gradient(#f8f8f8,#ebebeb);border-bottom:1px dotted #d0d0d0"></div>
<div class="t" style="left:369px;width:29px;text-align:center;top:709px;font-size:12px;color:#222">10</div>
<div class="a" style="left:398px;top:703px;width:1px;height:25px;border-left:1px dotted #d4d4d4"></div>
<div class="a" style="left:428px;top:703px;width:1px;height:25px;border-left:1px dotted #d4d4d4"></div>
<div class="a" style="left:973px;top:703px;width:1px;height:25px;border-left:1px dotted #d4d4d4"></div>
<div class="a" style="left:1150px;top:703px;width:1px;height:25px;border-left:1px dotted #d4d4d4"></div>
<div class="a" style="left:1327px;top:703px;width:1px;height:25px;border-left:1px dotted #d4d4d4"></div>
<div class="a" style="left:1504px;top:703px;width:1px;height:25px;border-left:1px dotted #d4d4d4"></div>
<div class="a" style="left:1681px;top:703px;width:1px;height:25px;border-left:1px dotted #d4d4d4"></div>
<div class="a" style="left:1858px;top:703px;width:1px;height:25px;border-left:1px dotted #d4d4d4"></div>
<svg style="position:absolute;left:407px;top:707px" width="15" height="16" viewBox="0 0 15 16"><path d="M1.5 0.5 H9.5 L12.5 3.5 V15.5 H1.5 Z" fill="#fff" stroke="#8a96a4" stroke-width="0.9"/><path d="M9.5 0.5 V3.5 H12.5" fill="#e8eef4" stroke="#aab" stroke-width="0.5"/><path d="M3 6 H6 M3 8 H5 M3 12 H6 M3 14 H10" stroke="#c8c8c8" stroke-width="0.8"/><circle cx="8.2" cy="9.2" r="3.1" fill="#e4f0fb" stroke="#2a2a2a" stroke-width="1.2"/><path d="M10.6 11.6 L14 15" stroke="#a87830" stroke-width="2.2"/></svg>
<div class="t" style="left:433px;top:707px;width:540px;height:17px;line-height:17px;overflow:hidden;font-size:12px;color:#111">Screenshot_20180621-033157.jpg</div>
<div class="t" style="left:978px;top:707px;width:172px;height:17px;line-height:17px;overflow:hidden;font-size:12px;color:#111">0.46MB</div>
<div class="t" style="left:1155px;top:707px;width:172px;height:17px;line-height:17px;overflow:hidden;font-size:12px;color:#111">image/jpeg</div>
<div class="t" style="left:1332px;top:707px;width:172px;height:17px;line-height:17px;overflow:hidden;font-size:12px;color:#111">6.8.2018 klo 23.37.27</div>
<div class="t" style="left:1509px;top:707px;width:172px;height:17px;line-height:17px;overflow:hidden;font-size:12px;color:#111">809c9d6455aa325450e78b1bb2c3d4e5</div>
<div class="t" style="left:1686px;top:707px;width:172px;height:17px;line-height:17px;overflow:hidden;font-size:12px;color:#111">null</div>
<div class="a" style="left:369px;top:728px;width:1489px;height:25px;background:#fff;border-bottom:1px dotted #d0d0d0"></div>
<div class="a" style="left:369px;top:728px;width:29px;height:25px;background:linear-gradient(#f8f8f8,#ebebeb);border-bottom:1px dotted #d0d0d0"></div>
<div class="t" style="left:369px;width:29px;text-align:center;top:734px;font-size:12px;color:#222">11</div>
<div class="a" style="left:398px;top:728px;width:1px;height:25px;border-left:1px dotted #d4d4d4"></div>
<div class="a" style="left:428px;top:728px;width:1px;height:25px;border-left:1px dotted #d4d4d4"></div>
<div class="a" style="left:973px;top:728px;width:1px;height:25px;border-left:1px dotted #d4d4d4"></div>
<div class="a" style="left:1150px;top:728px;width:1px;height:25px;border-left:1px dotted #d4d4d4"></div>
<div class="a" style="left:1327px;top:728px;width:1px;height:25px;border-left:1px dotted #d4d4d4"></div>
<div class="a" style="left:1504px;top:728px;width:1px;height:25px;border-left:1px dotted #d4d4d4"></div>
<div class="a" style="left:1681px;top:728px;width:1px;height:25px;border-left:1px dotted #d4d4d4"></div>
<div class="a" style="left:1858px;top:728px;width:1px;height:25px;border-left:1px dotted #d4d4d4"></div>
<svg style="position:absolute;left:407px;top:732px" width="15" height="16" viewBox="0 0 15 16"><path d="M1.5 0.5 H9.5 L12.5 3.5 V15.5 H1.5 Z" fill="#fff" stroke="#8a96a4" stroke-width="0.9"/><path d="M9.5 0.5 V3.5 H12.5" fill="#e8eef4" stroke="#aab" stroke-width="0.5"/><path d="M3 6 H6 M3 8 H5 M3 12 H6 M3 14 H10" stroke="#c8c8c8" stroke-width="0.8"/><circle cx="8.2" cy="9.2" r="3.1" fill="#e4f0fb" stroke="#2a2a2a" stroke-width="1.2"/><path d="M10.6 11.6 L14 15" stroke="#a87830" stroke-width="2.2"/></svg>
<div class="t" style="left:433px;top:732px;width:540px;height:17px;line-height:17px;overflow:hidden;font-size:12px;color:#111">Screenshot_20180621-032819.jpg</div>
<div class="t" style="left:978px;top:732px;width:172px;height:17px;line-height:17px;overflow:hidden;font-size:12px;color:#111">0.52MB</div>
<div class="t" style="left:1155px;top:732px;width:172px;height:17px;line-height:17px;overflow:hidden;font-size:12px;color:#111">image/jpeg</div>
<div class="t" style="left:1332px;top:732px;width:172px;height:17px;line-height:17px;overflow:hidden;font-size:12px;color:#111">6.8.2018 klo 23.37.27</div>
<div class="t" style="left:1509px;top:732px;width:172px;height:17px;line-height:17px;overflow:hidden;font-size:12px;color:#111">9800664e097e6cbbd573c28e5d1a2b3c</div>
<div class="t" style="left:1686px;top:732px;width:172px;height:17px;line-height:17px;overflow:hidden;font-size:12px;color:#111">null</div>
<div class="a" style="left:369px;top:753px;width:1489px;height:25px;background:#fafafa;border-bottom:1px dotted #d0d0d0"></div>
<div class="a" style="left:369px;top:753px;width:29px;height:25px;background:linear-gradient(#f8f8f8,#ebebeb);border-bottom:1px dotted #d0d0d0"></div>
<div class="t" style="left:369px;width:29px;text-align:center;top:759px;font-size:12px;color:#222">12</div>
<div class="a" style="left:398px;top:753px;width:1px;height:25px;border-left:1px dotted #d4d4d4"></div>
<div class="a" style="left:428px;top:753px;width:1px;height:25px;border-left:1px dotted #d4d4d4"></div>
<div class="a" style="left:973px;top:753px;width:1px;height:25px;border-left:1px dotted #d4d4d4"></div>
<div class="a" style="left:1150px;top:753px;width:1px;height:25px;border-left:1px dotted #d4d4d4"></div>
<div class="a" style="left:1327px;top:753px;width:1px;height:25px;border-left:1px dotted #d4d4d4"></div>
<div class="a" style="left:1504px;top:753px;width:1px;height:25px;border-left:1px dotted #d4d4d4"></div>
<div class="a" style="left:1681px;top:753px;width:1px;height:25px;border-left:1px dotted #d4d4d4"></div>
<div class="a" style="left:1858px;top:753px;width:1px;height:25px;border-left:1px dotted #d4d4d4"></div>
<svg style="position:absolute;left:407px;top:757px" width="15" height="16" viewBox="0 0 15 16"><path d="M1.5 0.5 H9.5 L12.5 3.5 V15.5 H1.5 Z" fill="#fff" stroke="#8a96a4" stroke-width="0.9"/><path d="M9.5 0.5 V3.5 H12.5" fill="#e8eef4" stroke="#aab" stroke-width="0.5"/><path d="M3 6 H6 M3 8 H5 M3 12 H6 M3 14 H10" stroke="#c8c8c8" stroke-width="0.8"/><circle cx="8.2" cy="9.2" r="3.1" fill="#e4f0fb" stroke="#2a2a2a" stroke-width="1.2"/><path d="M10.6 11.6 L14 15" stroke="#a87830" stroke-width="2.2"/></svg>
<div class="t" style="left:433px;top:757px;width:540px;height:17px;line-height:17px;overflow:hidden;font-size:12px;color:#111">IMG_20180223_141405.jpg</div>
<div class="t" style="left:978px;top:757px;width:172px;height:17px;line-height:17px;overflow:hidden;font-size:12px;color:#111">1.9MB</div>
<div class="t" style="left:1155px;top:757px;width:172px;height:17px;line-height:17px;overflow:hidden;font-size:12px;color:#111">image/jpeg</div>
<div class="t" style="left:1332px;top:757px;width:172px;height:17px;line-height:17px;overflow:hidden;font-size:12px;color:#111">6.8.2018 klo 23.29.46</div>
<div class="t" style="left:1509px;top:757px;width:172px;height:17px;line-height:17px;overflow:hidden;font-size:12px;color:#111">26120d25798778dd7d2d5c0273a1b2c3</div>
<div class="t" style="left:1686px;top:757px;width:172px;height:17px;line-height:17px;overflow:hidden;font-size:12px;color:#111">null</div>
<div class="a" style="left:369px;top:778px;width:1489px;height:25px;background:#fff;border-bottom:1px dotted #d0d0d0"></div>
<div class="a" style="left:369px;top:778px;width:29px;height:25px;background:linear-gradient(#f8f8f8,#ebebeb);border-bottom:1px dotted #d0d0d0"></div>
<div class="t" style="left:369px;width:29px;text-align:center;top:784px;font-size:12px;color:#222">13</div>
<div class="a" style="left:398px;top:778px;width:1px;height:25px;border-left:1px dotted #d4d4d4"></div>
<div class="a" style="left:428px;top:778px;width:1px;height:25px;border-left:1px dotted #d4d4d4"></div>
<div class="a" style="left:973px;top:778px;width:1px;height:25px;border-left:1px dotted #d4d4d4"></div>
<div class="a" style="left:1150px;top:778px;width:1px;height:25px;border-left:1px dotted #d4d4d4"></div>
<div class="a" style="left:1327px;top:778px;width:1px;height:25px;border-left:1px dotted #d4d4d4"></div>
<div class="a" style="left:1504px;top:778px;width:1px;height:25px;border-left:1px dotted #d4d4d4"></div>
<div class="a" style="left:1681px;top:778px;width:1px;height:25px;border-left:1px dotted #d4d4d4"></div>
<div class="a" style="left:1858px;top:778px;width:1px;height:25px;border-left:1px dotted #d4d4d4"></div>
<svg style="position:absolute;left:407px;top:782px" width="15" height="16" viewBox="0 0 15 16"><path d="M1.5 0.5 H9.5 L12.5 3.5 V15.5 H1.5 Z" fill="#fff" stroke="#8a96a4" stroke-width="0.9"/><path d="M9.5 0.5 V3.5 H12.5" fill="#e8eef4" stroke="#aab" stroke-width="0.5"/><path d="M3 6 H6 M3 8 H5 M3 12 H6 M3 14 H10" stroke="#c8c8c8" stroke-width="0.8"/><circle cx="8.2" cy="9.2" r="3.1" fill="#e4f0fb" stroke="#2a2a2a" stroke-width="1.2"/><path d="M10.6 11.6 L14 15" stroke="#a87830" stroke-width="2.2"/></svg>
<div class="t" style="left:433px;top:782px;width:540px;height:17px;line-height:17px;overflow:hidden;font-size:12px;color:#111">IMG_20180223_135513.jpg</div>
<div class="t" style="left:978px;top:782px;width:172px;height:17px;line-height:17px;overflow:hidden;font-size:12px;color:#111">1.7MB</div>
<div class="t" style="left:1155px;top:782px;width:172px;height:17px;line-height:17px;overflow:hidden;font-size:12px;color:#111">image/jpeg</div>
<div class="t" style="left:1332px;top:782px;width:172px;height:17px;line-height:17px;overflow:hidden;font-size:12px;color:#111">6.8.2018 klo 23.28.56</div>
<div class="t" style="left:1509px;top:782px;width:172px;height:17px;line-height:17px;overflow:hidden;font-size:12px;color:#111">31f99f17cb864ce04b467a97ee8a1b2c</div>
<div class="t" style="left:1686px;top:782px;width:172px;height:17px;line-height:17px;overflow:hidden;font-size:12px;color:#111">null</div>
<div class="a" style="left:369px;top:803px;width:1489px;height:25px;background:#fafafa;border-bottom:1px dotted #d0d0d0"></div>
<div class="a" style="left:369px;top:803px;width:29px;height:25px;background:linear-gradient(#f8f8f8,#ebebeb);border-bottom:1px dotted #d0d0d0"></div>
<div class="t" style="left:369px;width:29px;text-align:center;top:809px;font-size:12px;color:#222">14</div>
<div class="a" style="left:398px;top:803px;width:1px;height:25px;border-left:1px dotted #d4d4d4"></div>
<div class="a" style="left:428px;top:803px;width:1px;height:25px;border-left:1px dotted #d4d4d4"></div>
<div class="a" style="left:973px;top:803px;width:1px;height:25px;border-left:1px dotted #d4d4d4"></div>
<div class="a" style="left:1150px;top:803px;width:1px;height:25px;border-left:1px dotted #d4d4d4"></div>
<div class="a" style="left:1327px;top:803px;width:1px;height:25px;border-left:1px dotted #d4d4d4"></div>
<div class="a" style="left:1504px;top:803px;width:1px;height:25px;border-left:1px dotted #d4d4d4"></div>
<div class="a" style="left:1681px;top:803px;width:1px;height:25px;border-left:1px dotted #d4d4d4"></div>
<div class="a" style="left:1858px;top:803px;width:1px;height:25px;border-left:1px dotted #d4d4d4"></div>
<svg style="position:absolute;left:407px;top:807px" width="15" height="16" viewBox="0 0 15 16"><path d="M1.5 0.5 H9.5 L12.5 3.5 V15.5 H1.5 Z" fill="#fff" stroke="#8a96a4" stroke-width="0.9"/><path d="M9.5 0.5 V3.5 H12.5" fill="#e8eef4" stroke="#aab" stroke-width="0.5"/><path d="M3 6 H6 M3 8 H5 M3 12 H6 M3 14 H10" stroke="#c8c8c8" stroke-width="0.8"/><circle cx="8.2" cy="9.2" r="3.1" fill="#e4f0fb" stroke="#2a2a2a" stroke-width="1.2"/><path d="M10.6 11.6 L14 15" stroke="#a87830" stroke-width="2.2"/></svg>
<div class="t" style="left:433px;top:807px;width:540px;height:17px;line-height:17px;overflow:hidden;font-size:12px;color:#111">IMG_20180223_135054.jpg</div>
<div class="t" style="left:978px;top:807px;width:172px;height:17px;line-height:17px;overflow:hidden;font-size:12px;color:#111">2.1MB</div>
<div class="t" style="left:1155px;top:807px;width:172px;height:17px;line-height:17px;overflow:hidden;font-size:12px;color:#111">image/jpeg</div>
<div class="t" style="left:1332px;top:807px;width:172px;height:17px;line-height:17px;overflow:hidden;font-size:12px;color:#111">6.8.2018 klo 23.28.56</div>
<div class="t" style="left:1509px;top:807px;width:172px;height:17px;line-height:17px;overflow:hidden;font-size:12px;color:#111">b4bdb6e4faed0a909ba13e5df30a1b2c</div>
<div class="t" style="left:1686px;top:807px;width:172px;height:17px;line-height:17px;overflow:hidden;font-size:12px;color:#111">null</div>
<div class="a" style="left:369px;top:828px;width:1489px;height:25px;background:#fff;border-bottom:1px dotted #d0d0d0"></div>
<div class="a" style="left:369px;top:828px;width:29px;height:25px;background:linear-gradient(#f8f8f8,#ebebeb);border-bottom:1px dotted #d0d0d0"></div>
<div class="t" style="left:369px;width:29px;text-align:center;top:834px;font-size:12px;color:#222">15</div>
<div class="a" style="left:398px;top:828px;width:1px;height:25px;border-left:1px dotted #d4d4d4"></div>
<div class="a" style="left:428px;top:828px;width:1px;height:25px;border-left:1px dotted #d4d4d4"></div>
<div class="a" style="left:973px;top:828px;width:1px;height:25px;border-left:1px dotted #d4d4d4"></div>
<div class="a" style="left:1150px;top:828px;width:1px;height:25px;border-left:1px dotted #d4d4d4"></div>
<div class="a" style="left:1327px;top:828px;width:1px;height:25px;border-left:1px dotted #d4d4d4"></div>
<div class="a" style="left:1504px;top:828px;width:1px;height:25px;border-left:1px dotted #d4d4d4"></div>
<div class="a" style="left:1681px;top:828px;width:1px;height:25px;border-left:1px dotted #d4d4d4"></div>
<div class="a" style="left:1858px;top:828px;width:1px;height:25px;border-left:1px dotted #d4d4d4"></div>
<svg style="position:absolute;left:407px;top:832px" width="15" height="16" viewBox="0 0 15 16"><path d="M1.5 0.5 H9.5 L12.5 3.5 V15.5 H1.5 Z" fill="#fff" stroke="#8a96a4" stroke-width="0.9"/><path d="M9.5 0.5 V3.5 H12.5" fill="#e8eef4" stroke="#aab" stroke-width="0.5"/><path d="M3 6 H6 M3 8 H5 M3 12 H6 M3 14 H10" stroke="#c8c8c8" stroke-width="0.8"/><circle cx="8.2" cy="9.2" r="3.1" fill="#e4f0fb" stroke="#2a2a2a" stroke-width="1.2"/><path d="M10.6 11.6 L14 15" stroke="#a87830" stroke-width="2.2"/></svg>
<div class="t" style="left:433px;top:832px;width:540px;height:17px;line-height:17px;overflow:hidden;font-size:12px;color:#111">IMG_20180223_134958.jpg</div>
<div class="t" style="left:978px;top:832px;width:172px;height:17px;line-height:17px;overflow:hidden;font-size:12px;color:#111">1.9MB</div>
<div class="t" style="left:1155px;top:832px;width:172px;height:17px;line-height:17px;overflow:hidden;font-size:12px;color:#111">image/jpeg</div>
<div class="t" style="left:1332px;top:832px;width:172px;height:17px;line-height:17px;overflow:hidden;font-size:12px;color:#111">6.8.2018 klo 23.28.51</div>
<div class="t" style="left:1509px;top:832px;width:172px;height:17px;line-height:17px;overflow:hidden;font-size:12px;color:#111">b14c98e1015ac517d98c091ead1a2b3c</div>
<div class="t" style="left:1686px;top:832px;width:172px;height:17px;line-height:17px;overflow:hidden;font-size:12px;color:#111">null</div>
<div class="a" style="left:369px;top:853px;width:1489px;height:25px;background:#fafafa;border-bottom:1px dotted #d0d0d0"></div>
<div class="a" style="left:369px;top:853px;width:29px;height:25px;background:linear-gradient(#f8f8f8,#ebebeb);border-bottom:1px dotted #d0d0d0"></div>
<div class="t" style="left:369px;width:29px;text-align:center;top:859px;font-size:12px;color:#222">16</div>
<div class="a" style="left:398px;top:853px;width:1px;height:25px;border-left:1px dotted #d4d4d4"></div>
<div class="a" style="left:428px;top:853px;width:1px;height:25px;border-left:1px dotted #d4d4d4"></div>
<div class="a" style="left:973px;top:853px;width:1px;height:25px;border-left:1px dotted #d4d4d4"></div>
<div class="a" style="left:1150px;top:853px;width:1px;height:25px;border-left:1px dotted #d4d4d4"></div>
<div class="a" style="left:1327px;top:853px;width:1px;height:25px;border-left:1px dotted #d4d4d4"></div>
<div class="a" style="left:1504px;top:853px;width:1px;height:25px;border-left:1px dotted #d4d4d4"></div>
<div class="a" style="left:1681px;top:853px;width:1px;height:25px;border-left:1px dotted #d4d4d4"></div>
<div class="a" style="left:1858px;top:853px;width:1px;height:25px;border-left:1px dotted #d4d4d4"></div>
<svg style="position:absolute;left:407px;top:857px" width="15" height="16" viewBox="0 0 15 16"><path d="M1.5 0.5 H9.5 L12.5 3.5 V15.5 H1.5 Z" fill="#fff" stroke="#8a96a4" stroke-width="0.9"/><path d="M9.5 0.5 V3.5 H12.5" fill="#e8eef4" stroke="#aab" stroke-width="0.5"/><path d="M3 6 H6 M3 8 H5 M3 12 H6 M3 14 H10" stroke="#c8c8c8" stroke-width="0.8"/><circle cx="8.2" cy="9.2" r="3.1" fill="#e4f0fb" stroke="#2a2a2a" stroke-width="1.2"/><path d="M10.6 11.6 L14 15" stroke="#a87830" stroke-width="2.2"/></svg>
<div class="t" style="left:433px;top:857px;width:540px;height:17px;line-height:17px;overflow:hidden;font-size:12px;color:#111">IMG_20180223_134605.jpg</div>
<div class="t" style="left:978px;top:857px;width:172px;height:17px;line-height:17px;overflow:hidden;font-size:12px;color:#111">2.0MB</div>
<div class="t" style="left:1155px;top:857px;width:172px;height:17px;line-height:17px;overflow:hidden;font-size:12px;color:#111">image/jpeg</div>
<div class="t" style="left:1332px;top:857px;width:172px;height:17px;line-height:17px;overflow:hidden;font-size:12px;color:#111">6.8.2018 klo 23.28.39</div>
<div class="t" style="left:1509px;top:857px;width:172px;height:17px;line-height:17px;overflow:hidden;font-size:12px;color:#111">0ea5c62d4a072c9e7ca4b1c5effa1b2c</div>
<div class="t" style="left:1686px;top:857px;width:172px;height:17px;line-height:17px;overflow:hidden;font-size:12px;color:#111">null</div>
<div class="a" style="left:369px;top:878px;width:1489px;height:25px;background:#fff;border-bottom:1px dotted #d0d0d0"></div>
<div class="a" style="left:369px;top:878px;width:29px;height:25px;background:linear-gradient(#f8f8f8,#ebebeb);border-bottom:1px dotted #d0d0d0"></div>
<div class="t" style="left:369px;width:29px;text-align:center;top:884px;font-size:12px;color:#222">17</div>
<div class="a" style="left:398px;top:878px;width:1px;height:25px;border-left:1px dotted #d4d4d4"></div>
<div class="a" style="left:428px;top:878px;width:1px;height:25px;border-left:1px dotted #d4d4d4"></div>
<div class="a" style="left:973px;top:878px;width:1px;height:25px;border-left:1px dotted #d4d4d4"></div>
<div class="a" style="left:1150px;top:878px;width:1px;height:25px;border-left:1px dotted #d4d4d4"></div>
<div class="a" style="left:1327px;top:878px;width:1px;height:25px;border-left:1px dotted #d4d4d4"></div>
<div class="a" style="left:1504px;top:878px;width:1px;height:25px;border-left:1px dotted #d4d4d4"></div>
<div class="a" style="left:1681px;top:878px;width:1px;height:25px;border-left:1px dotted #d4d4d4"></div>
<div class="a" style="left:1858px;top:878px;width:1px;height:25px;border-left:1px dotted #d4d4d4"></div>
<svg style="position:absolute;left:407px;top:882px" width="15" height="16" viewBox="0 0 15 16"><path d="M1.5 0.5 H9.5 L12.5 3.5 V15.5 H1.5 Z" fill="#fff" stroke="#8a96a4" stroke-width="0.9"/><path d="M9.5 0.5 V3.5 H12.5" fill="#e8eef4" stroke="#aab" stroke-width="0.5"/><path d="M3 6 H6 M3 8 H5 M3 12 H6 M3 14 H10" stroke="#c8c8c8" stroke-width="0.8"/><circle cx="8.2" cy="9.2" r="3.1" fill="#e4f0fb" stroke="#2a2a2a" stroke-width="1.2"/><path d="M10.6 11.6 L14 15" stroke="#a87830" stroke-width="2.2"/></svg>
<div class="t" style="left:433px;top:882px;width:540px;height:17px;line-height:17px;overflow:hidden;font-size:12px;color:#111">IMG_20180223_134125.jpg</div>
<div class="t" style="left:978px;top:882px;width:172px;height:17px;line-height:17px;overflow:hidden;font-size:12px;color:#111">2.1MB</div>
<div class="t" style="left:1155px;top:882px;width:172px;height:17px;line-height:17px;overflow:hidden;font-size:12px;color:#111">image/jpeg</div>
<div class="t" style="left:1332px;top:882px;width:172px;height:17px;line-height:17px;overflow:hidden;font-size:12px;color:#111">6.8.2018 klo 23.28.16</div>
<div class="t" style="left:1509px;top:882px;width:172px;height:17px;line-height:17px;overflow:hidden;font-size:12px;color:#111">a03f99f836480495e12fdb4e9912a3b4</div>
<div class="t" style="left:1686px;top:882px;width:172px;height:17px;line-height:17px;overflow:hidden;font-size:12px;color:#111">null</div>
<div class="a" style="left:369px;top:903px;width:1489px;height:25px;background:#fafafa;border-bottom:1px dotted #d0d0d0"></div>
<div class="a" style="left:369px;top:903px;width:29px;height:25px;background:linear-gradient(#f8f8f8,#ebebeb);border-bottom:1px dotted #d0d0d0"></div>
<div class="t" style="left:369px;width:29px;text-align:center;top:909px;font-size:12px;color:#222">18</div>
<div class="a" style="left:398px;top:903px;width:1px;height:25px;border-left:1px dotted #d4d4d4"></div>
<div class="a" style="left:428px;top:903px;width:1px;height:25px;border-left:1px dotted #d4d4d4"></div>
<div class="a" style="left:973px;top:903px;width:1px;height:25px;border-left:1px dotted #d4d4d4"></div>
<div class="a" style="left:1150px;top:903px;width:1px;height:25px;border-left:1px dotted #d4d4d4"></div>
<div class="a" style="left:1327px;top:903px;width:1px;height:25px;border-left:1px dotted #d4d4d4"></div>
<div class="a" style="left:1504px;top:903px;width:1px;height:25px;border-left:1px dotted #d4d4d4"></div>
<div class="a" style="left:1681px;top:903px;width:1px;height:25px;border-left:1px dotted #d4d4d4"></div>
<div class="a" style="left:1858px;top:903px;width:1px;height:25px;border-left:1px dotted #d4d4d4"></div>
<svg style="position:absolute;left:407px;top:907px" width="15" height="16" viewBox="0 0 15 16"><path d="M1.5 0.5 H9.5 L12.5 3.5 V15.5 H1.5 Z" fill="#fff" stroke="#8a96a4" stroke-width="0.9"/><path d="M9.5 0.5 V3.5 H12.5" fill="#e8eef4" stroke="#aab" stroke-width="0.5"/><path d="M3 6 H6 M3 8 H5 M3 12 H6 M3 14 H10" stroke="#c8c8c8" stroke-width="0.8"/><circle cx="8.2" cy="9.2" r="3.1" fill="#e4f0fb" stroke="#2a2a2a" stroke-width="1.2"/><path d="M10.6 11.6 L14 15" stroke="#a87830" stroke-width="2.2"/></svg>
<div class="t" style="left:433px;top:907px;width:540px;height:17px;line-height:17px;overflow:hidden;font-size:12px;color:#111">IMG_20180223_145438.jpg</div>
<div class="t" style="left:978px;top:907px;width:172px;height:17px;line-height:17px;overflow:hidden;font-size:12px;color:#111">2.2MB</div>
<div class="t" style="left:1155px;top:907px;width:172px;height:17px;line-height:17px;overflow:hidden;font-size:12px;color:#111">image/jpeg</div>
<div class="t" style="left:1332px;top:907px;width:172px;height:17px;line-height:17px;overflow:hidden;font-size:12px;color:#111">6.8.2018 klo 23.27.26</div>
<div class="t" style="left:1509px;top:907px;width:172px;height:17px;line-height:17px;overflow:hidden;font-size:12px;color:#111">41e61c341259b891f281c5d47f0a1b2c</div>
<div class="t" style="left:1686px;top:907px;width:172px;height:17px;line-height:17px;overflow:hidden;font-size:12px;color:#111">null</div>
<div class="a" style="left:369px;top:928px;width:1489px;height:25px;background:#fff;border-bottom:1px dotted #d0d0d0"></div>
<div class="a" style="left:369px;top:928px;width:29px;height:25px;background:linear-gradient(#f8f8f8,#ebebeb);border-bottom:1px dotted #d0d0d0"></div>
<div class="t" style="left:369px;width:29px;text-align:center;top:934px;font-size:12px;color:#222">19</div>
<div class="a" style="left:398px;top:928px;width:1px;height:25px;border-left:1px dotted #d4d4d4"></div>
<div class="a" style="left:428px;top:928px;width:1px;height:25px;border-left:1px dotted #d4d4d4"></div>
<div class="a" style="left:973px;top:928px;width:1px;height:25px;border-left:1px dotted #d4d4d4"></div>
<div class="a" style="left:1150px;top:928px;width:1px;height:25px;border-left:1px dotted #d4d4d4"></div>
<div class="a" style="left:1327px;top:928px;width:1px;height:25px;border-left:1px dotted #d4d4d4"></div>
<div class="a" style="left:1504px;top:928px;width:1px;height:25px;border-left:1px dotted #d4d4d4"></div>
<div class="a" style="left:1681px;top:928px;width:1px;height:25px;border-left:1px dotted #d4d4d4"></div>
<div class="a" style="left:1858px;top:928px;width:1px;height:25px;border-left:1px dotted #d4d4d4"></div>
<svg style="position:absolute;left:407px;top:932px" width="15" height="16" viewBox="0 0 15 16"><path d="M1.5 0.5 H9.5 L12.5 3.5 V15.5 H1.5 Z" fill="#fff" stroke="#8a96a4" stroke-width="0.9"/><path d="M9.5 0.5 V3.5 H12.5" fill="#e8eef4" stroke="#aab" stroke-width="0.5"/><path d="M3 6 H6 M3 8 H5 M3 12 H6 M3 14 H10" stroke="#c8c8c8" stroke-width="0.8"/><circle cx="8.2" cy="9.2" r="3.1" fill="#e4f0fb" stroke="#2a2a2a" stroke-width="1.2"/><path d="M10.6 11.6 L14 15" stroke="#a87830" stroke-width="2.2"/></svg>
<div class="t" style="left:433px;top:932px;width:540px;height:17px;line-height:17px;overflow:hidden;font-size:12px;color:#111">IMG_20180223_145650.jpg</div>
<div class="t" style="left:978px;top:932px;width:172px;height:17px;line-height:17px;overflow:hidden;font-size:12px;color:#111">2.1MB</div>
<div class="t" style="left:1155px;top:932px;width:172px;height:17px;line-height:17px;overflow:hidden;font-size:12px;color:#111">image/jpeg</div>
<div class="t" style="left:1332px;top:932px;width:172px;height:17px;line-height:17px;overflow:hidden;font-size:12px;color:#111">6.8.2018 klo 23.27.09</div>
<div class="t" style="left:1509px;top:932px;width:172px;height:17px;line-height:17px;overflow:hidden;font-size:12px;color:#111">7202775eae70e5624b9d824cff6a1b2c</div>
<div class="t" style="left:1686px;top:932px;width:172px;height:17px;line-height:17px;overflow:hidden;font-size:12px;color:#111">null</div>
<div class="a" style="left:369px;top:953px;width:1489px;height:25px;background:#fafafa;border-bottom:1px dotted #d0d0d0"></div>
<div class="a" style="left:369px;top:953px;width:29px;height:25px;background:linear-gradient(#f8f8f8,#ebebeb);border-bottom:1px dotted #d0d0d0"></div>
<div class="t" style="left:369px;width:29px;text-align:center;top:959px;font-size:12px;color:#222">20</div>
<div class="a" style="left:398px;top:953px;width:1px;height:25px;border-left:1px dotted #d4d4d4"></div>
<div class="a" style="left:428px;top:953px;width:1px;height:25px;border-left:1px dotted #d4d4d4"></div>
<div class="a" style="left:973px;top:953px;width:1px;height:25px;border-left:1px dotted #d4d4d4"></div>
<div class="a" style="left:1150px;top:953px;width:1px;height:25px;border-left:1px dotted #d4d4d4"></div>
<div class="a" style="left:1327px;top:953px;width:1px;height:25px;border-left:1px dotted #d4d4d4"></div>
<div class="a" style="left:1504px;top:953px;width:1px;height:25px;border-left:1px dotted #d4d4d4"></div>
<div class="a" style="left:1681px;top:953px;width:1px;height:25px;border-left:1px dotted #d4d4d4"></div>
<div class="a" style="left:1858px;top:953px;width:1px;height:25px;border-left:1px dotted #d4d4d4"></div>
<svg style="position:absolute;left:407px;top:957px" width="15" height="16" viewBox="0 0 15 16"><path d="M1.5 0.5 H9.5 L12.5 3.5 V15.5 H1.5 Z" fill="#fff" stroke="#8a96a4" stroke-width="0.9"/><path d="M9.5 0.5 V3.5 H12.5" fill="#e8eef4" stroke="#aab" stroke-width="0.5"/><path d="M3 6 H6 M3 8 H5 M3 12 H6 M3 14 H10" stroke="#c8c8c8" stroke-width="0.8"/><circle cx="8.2" cy="9.2" r="3.1" fill="#e4f0fb" stroke="#2a2a2a" stroke-width="1.2"/><path d="M10.6 11.6 L14 15" stroke="#a87830" stroke-width="2.2"/></svg>
<div class="t" style="left:433px;top:957px;width:540px;height:17px;line-height:17px;overflow:hidden;font-size:12px;color:#111">IMG_20180223_144019.jpg</div>
<div class="t" style="left:978px;top:957px;width:172px;height:17px;line-height:17px;overflow:hidden;font-size:12px;color:#111">2.1MB</div>
<div class="t" style="left:1155px;top:957px;width:172px;height:17px;line-height:17px;overflow:hidden;font-size:12px;color:#111">image/jpeg</div>
<div class="t" style="left:1332px;top:957px;width:172px;height:17px;line-height:17px;overflow:hidden;font-size:12px;color:#111">6.8.2018 klo 23.26.47</div>
<div class="t" style="left:1509px;top:957px;width:172px;height:17px;line-height:17px;overflow:hidden;font-size:12px;color:#111">e267e0a6ef8ec8ccc948475b1ba1c2d3</div>
<div class="t" style="left:1686px;top:957px;width:172px;height:17px;line-height:17px;overflow:hidden;font-size:12px;color:#111">null</div>
<div class="a" style="left:713px;top:489px;width:182px;height:167px;background:#fff;border:1px solid #d4d4d4;box-shadow:0 3px 9px rgba(0,0,0,0.38)"></div>
<div class="a" style="left:714px;top:517px;width:180px;height:25px;background:#9ab87a"></div>
<div class="t" style="left:740px;top:498px;font-size:13px;color:#2e2e2e;font-weight:normal;transform:scaleX(0.91);transform-origin:0 0;-webkit-text-stroke:0.25px #2e2e2e">View File...</div>
<div class="t" style="left:740px;top:498px;font-size:13px;color:#999;font-weight:normal;width:130px;text-align:right;transform:scaleX(0.91);transform-origin:0 0;left:752px">Ctrl+I</div>
<div class="t" style="left:740px;top:523px;font-size:13px;color:#f4f4ee;font-weight:normal;transform:scaleX(0.91);transform-origin:0 0;-webkit-text-stroke:0.25px #f4f4ee">Download File...</div>
<div class="t" style="left:740px;top:548px;font-size:13px;color:#2e2e2e;font-weight:normal;transform:scaleX(0.91);transform-origin:0 0;-webkit-text-stroke:0.25px #2e2e2e">Add File...</div>
<div class="t" style="left:740px;top:573px;font-size:13px;color:#2e2e2e;font-weight:normal;transform:scaleX(0.91);transform-origin:0 0;-webkit-text-stroke:0.25px #2e2e2e">Edit File...</div>
<div class="t" style="left:740px;top:573px;font-size:13px;color:#999;font-weight:normal;width:130px;text-align:right;transform:scaleX(0.91);transform-origin:0 0;left:752px">Ctrl+E</div>
<div class="t" style="left:740px;top:598px;font-size:13px;color:#2e2e2e;font-weight:normal;transform:scaleX(0.91);transform-origin:0 0;-webkit-text-stroke:0.25px #2e2e2e">Remove File...</div>
<div class="t" style="left:740px;top:634px;font-size:13px;color:#2e2e2e;font-weight:normal;transform:scaleX(0.91);transform-origin:0 0;-webkit-text-stroke:0.25px #2e2e2e">Copy</div>
<div class="a" style="left:714px;top:622px;width:180px;height:1px;background:#dcdcdc"></div>
<svg style="position:absolute;left:882px;top:636px" width="6" height="9" viewBox="0 0 6 9"><path d="M0.5 0.5 L5.5 4.5 L0.5 8.5 Z" fill="#666"/></svg>
<svg style="position:absolute;left:864px;top:532px" width="15" height="23" viewBox="0 0 15 23"><path d="M1.3 1.3 L1.3 19 L5.3 15.2 L8.3 20.5 L10.6 19.5 L7.8 14 L12.8 13.8 Z" fill="#fff" stroke="#000" stroke-width="1.2" stroke-linejoin="round"/></svg>
<div class="a" style="left:0;top:1143px;width:1917px;height:30px;background:#fff"></div>
<div class="t" style="left:5px;top:1152px;font-size:12px;color:#111;font-weight:normal;">Copyright ©</div>
<div class="t" style="left:77px;top:1152px;font-size:12px;color:#666;font-weight:normal;">nosqlbooster.com</div>
<div class="t" style="left:186px;top:1152px;font-size:12px;color:#111;font-weight:normal;">Version 5.0.3</div>
<svg style="position:absolute;left:271px;top:1150px" width="17" height="16" viewBox="0 0 17 16"><path d="M0.5 2 H3 L5.5 11 H14 L16 4 H4" stroke="#444" stroke-width="1.1" fill="none"/><path d="M6 4 V11 M9 4 V11 M12 4 V11 M4.5 7.5 H15" stroke="#444" stroke-width="0.7"/><circle cx="6.5" cy="14" r="1.3" fill="#333"/><circle cx="12.5" cy="14" r="1.3" fill="#333"/></svg>
<div class="t" style="left:291px;top:1153px;font-size:12px;color:#ff0000;font-weight:bold;">Free Edition</div>
<svg style="position:absolute;left:1676px;top:1147px" width="18" height="18" viewBox="0 0 18 18"><path d="M4 1.5 H15.5 C14 2.5 14 4 14 5 V14.5 H3 C1.5 14.5 1 13 2.5 12 V3.5 C2.5 2.5 3 1.5 4 1.5 Z" fill="#eef0f2" stroke="#8a9098" stroke-width="0.8"/><path d="M2.5 12 C3.5 11 5 11.5 5 13 C5 14 4 14.5 3 14.5" fill="#cfd4d8" stroke="#8a9098" stroke-width="0.6"/><circle cx="10" cy="10" r="3.2" fill="#d8ecfa" stroke="#333" stroke-width="1.3"/><path d="M12.3 12.3 L16 16" stroke="#b8741e" stroke-width="2.2"/></svg>
<div class="t" style="left:1697px;top:1150px;font-size:12px;color:#444;font-weight:normal;">Show Log</div>
<svg style="position:absolute;left:1765px;top:1148px" width="17" height="15" viewBox="0 0 17 15"><defs><linearGradient id="fbg" x1="0" x2="0" y1="0" y2="1"><stop offset="0" stop-color="#e2eef8"/><stop offset="1" stop-color="#9cbcd6"/></linearGradient></defs><path d="M8.5 1 C13 1 16 3.3 16 6.3 C16 9.3 13 11.6 8.5 11.6 C7.8 11.6 7 11.5 6.3 11.3 L3 14 L3.8 10.5 C2 9.5 1 8 1 6.3 C1 3.3 4 1 8.5 1 Z" fill="url(#fbg)" stroke="#7f9cb6" stroke-width="0.8"/><path d="M5.5 4.8 H11.5 M5.5 6.6 H11.5 M5.5 8.4 H11.5" stroke="#6a8aa6" stroke-width="0.8"/></svg>
<div class="t" style="left:1785px;top:1150px;font-size:12px;color:#444;font-weight:normal;">Feedback</div>
<div class="t" style="left:1848px;top:1150px;font-size:12px;color:#111;font-weight:normal;">07:27:07 pm</div>
<div class="a" style="left:0;top:1173px;width:1917px;height:2px;background:#333"></div>
<div class="a" style="left:1465px;top:1173px;width:128px;height:2px;background:#94b574"></div>
</div></body></html>
